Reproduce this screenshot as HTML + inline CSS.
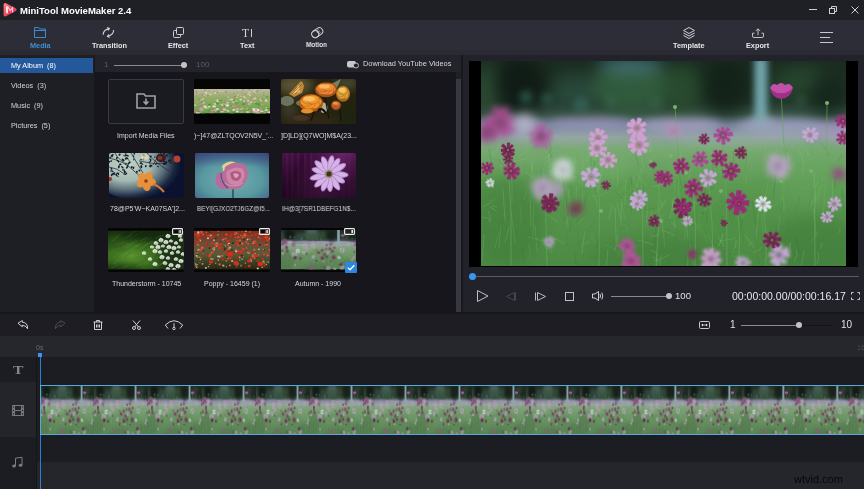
<!DOCTYPE html>
<html><head><meta charset="utf-8">
<style>
*{margin:0;padding:0;box-sizing:border-box}
html,body{width:864px;height:489px;overflow:hidden;background:#1c1d22;font-family:"Liberation Sans",sans-serif;color:#e8e8ea}
.a{position:absolute}
.t{position:absolute;white-space:pre;line-height:1;will-change:transform}
svg{position:absolute;overflow:visible}
.tb{font-size:7.3px;font-weight:bold;color:#e6e6e8}
.lb{font-size:7px;color:#d8d8dc}
.al{font-size:7.3px;color:#d4d4d8}
.ic{fill:none;stroke:#d0d0d4;stroke-width:1}
</style></head><body>
<!-- title bar -->
<div class="a" style="left:0;top:0;width:864px;height:20px;background:#1f2026"></div>
<!-- toolbar -->
<div class="a" style="left:0;top:20px;width:864px;height:30px;background:#2c2d36"></div>
<div class="a" style="left:0;top:50px;width:864px;height:5px;background:#292a32"></div>
<!-- left panel -->
<div class="a" style="left:0;top:55px;width:95px;height:257px;background:#1e1f24"></div>
<div class="a" style="left:94px;top:55px;width:1px;height:256px;background:#17181c"></div>
<div class="a" style="left:0;top:58px;width:93px;height:15px;background:#23589b"></div>
<!-- media area -->
<div class="a" style="left:95px;top:55px;width:366px;height:257px;background:#16161c"></div>
<div class="a" style="left:95px;top:55px;width:366px;height:17px;background:#23242b"></div>
<div class="a" style="left:456px;top:72px;width:5px;height:239px;background:#1f2025"></div>
<div class="a" style="left:456px;top:79px;width:4.5px;height:233px;background:#383842"></div>
<!-- separator -->
<div class="a" style="left:461px;top:55px;width:2px;height:256px;background:#18191d"></div>
<!-- preview panel -->
<div class="a" style="left:463px;top:55px;width:401px;height:257px;background:#21222a"></div>
<div class="a" style="left:469px;top:61px;width:389px;height:206px;background:#000"></div>
<!-- timeline -->
<div class="a" style="left:0;top:312px;width:864px;height:2px;background:#16171b"></div>
<div class="a" style="left:0;top:314px;width:864px;height:22px;background:#1d1d23"></div>
<div class="a" style="left:0;top:336px;width:864px;height:21px;background:#26272d"></div>
<div class="a" style="left:0;top:357px;width:864px;height:132px;background:#1c1d22"></div>
<div class="a" style="left:0;top:382px;width:36px;height:55px;background:#24252b"></div>
<div class="a" style="left:36px;top:462px;width:828px;height:27px;background:#25262c"></div>
<div class="a" style="left:36px;top:357px;width:1px;height:132px;background:#15161a"></div>

<svg width="0" height="0" style="position:absolute;left:0;top:0"><defs><symbol id="cos" viewBox="0 0 365 205" preserveAspectRatio="none"><defs><linearGradient id="cbg" x1="0" y1="0" x2="0" y2="1"><stop offset="0" stop-color="#1a2c20"/><stop offset="0.2" stop-color="#22382a"/><stop offset="0.26" stop-color="#3a5448"/><stop offset="0.31" stop-color="#7a86a0"/><stop offset="0.37" stop-color="#90a0a4"/><stop offset="0.43" stop-color="#78aa72"/><stop offset="0.6" stop-color="#5c9a52"/><stop offset="1" stop-color="#4c8a44"/></linearGradient><filter id="b8" x="-50%" y="-50%" width="200%" height="200%" color-interpolation-filters="sRGB"><feGaussianBlur stdDeviation="8"/></filter><filter id="b6" x="-50%" y="-50%" width="200%" height="200%" color-interpolation-filters="sRGB"><feGaussianBlur stdDeviation="6"/></filter><filter id="b4" x="-50%" y="-50%" width="200%" height="200%" color-interpolation-filters="sRGB"><feGaussianBlur stdDeviation="4"/></filter><filter id="b3" x="-50%" y="-50%" width="200%" height="200%" color-interpolation-filters="sRGB"><feGaussianBlur stdDeviation="3"/></filter><filter id="b2" x="-50%" y="-50%" width="200%" height="200%" color-interpolation-filters="sRGB"><feGaussianBlur stdDeviation="2"/></filter><filter id="b15" x="-50%" y="-50%" width="200%" height="200%" color-interpolation-filters="sRGB"><feGaussianBlur stdDeviation="1.5"/></filter><filter id="b1" x="-50%" y="-50%" width="200%" height="200%" color-interpolation-filters="sRGB"><feGaussianBlur stdDeviation="1.0"/></filter><filter id="b05" x="-50%" y="-50%" width="200%" height="200%" color-interpolation-filters="sRGB"><feGaussianBlur stdDeviation="0.5"/></filter></defs><rect width="365" height="205" fill="url(#cbg)"/><g filter="url(#b8)"><ellipse cx="5" cy="30" rx="12" ry="25" fill="#2e5034" opacity="0.8"/><ellipse cx="40" cy="24" rx="26" ry="28" fill="#0e1a14" opacity="0.9"/><ellipse cx="95" cy="32" rx="25" ry="18" fill="#2a4e40" opacity="0.8"/><ellipse cx="150" cy="26" rx="38" ry="26" fill="#34623f" opacity="0.85"/><ellipse cx="150" cy="4" rx="34" ry="9" fill="#4e7e96" opacity="0.6"/><ellipse cx="200" cy="28" rx="20" ry="24" fill="#2a5030" opacity="0.8"/><ellipse cx="245" cy="26" rx="25" ry="28" fill="#122016" opacity="0.85"/><ellipse cx="320" cy="20" rx="25" ry="15" fill="#284a30" opacity="0.8"/><ellipse cx="348" cy="34" rx="20" ry="20" fill="#14241a" opacity="0.8"/></g><g filter="url(#b3)"><circle cx="45" cy="36" r="7" fill="#2e5a50" opacity="0.7"/><circle cx="66" cy="38" r="6" fill="#2e5a50" opacity="0.7"/><circle cx="100" cy="44" r="8" fill="#3a6a60" opacity="0.6"/><circle cx="130" cy="40" r="6" fill="#3a6a58" opacity="0.5"/><circle cx="175" cy="42" r="7" fill="#3a6a50" opacity="0.5"/><circle cx="320" cy="40" r="6" fill="#3a5a48" opacity="0.5"/></g><g filter="url(#b3)"><rect x="273" y="-5" width="14" height="70" fill="#6aa0a8" opacity="0.85"/><rect x="276" y="0" width="7" height="55" fill="#88b8bc" opacity="0.6"/><ellipse cx="280" cy="62" rx="14" ry="8" fill="#8aa8b0" opacity="0.5"/></g><g filter="url(#b4)"><ellipse cx="30" cy="64" rx="30" ry="8" fill="#a8a0c4" opacity="0.6"/><ellipse cx="110" cy="62" rx="40" ry="7" fill="#a098c0" opacity="0.55"/><ellipse cx="200" cy="64" rx="40" ry="8" fill="#b0a8c8" opacity="0.55"/><ellipse cx="300" cy="66" rx="45" ry="9" fill="#a8a8c4" opacity="0.55"/><ellipse cx="355" cy="70" rx="20" ry="9" fill="#b098c8" opacity="0.55"/><ellipse cx="90" cy="78" rx="60" ry="5" fill="#a0b8a8" opacity="0.35"/><ellipse cx="260" cy="80" rx="70" ry="5" fill="#98b8a0" opacity="0.35"/></g><g filter="url(#b8)"><ellipse cx="25" cy="160" rx="40" ry="45" fill="#3e7838" opacity="0.5"/><ellipse cx="180" cy="195" rx="70" ry="20" fill="#3e7838" opacity="0.45"/><ellipse cx="335" cy="185" rx="50" ry="30" fill="#3e7838" opacity="0.5"/><ellipse cx="110" cy="105" rx="40" ry="18" fill="#7ab474" opacity="0.35"/><ellipse cx="330" cy="115" rx="40" ry="30" fill="#6aa862" opacity="0.35"/><ellipse cx="250" cy="160" rx="40" ry="20" fill="#4a8c42" opacity="0.4"/></g><g fill="none" stroke-width="0.8" filter="url(#b05)"><path d="M118 128 Q120 115 121 102" stroke="#8cc47c" opacity="0.35"/><path d="M34 182 Q32 165 30 149" stroke="#7ab86c" opacity="0.35"/><path d="M158 105 Q156 99 154 93" stroke="#42823a" opacity="0.35"/><path d="M206 215 Q207 202 207 189" stroke="#8cc47c" opacity="0.35"/><path d="M145 204 Q144 198 143 192" stroke="#7ab86c" opacity="0.35"/><path d="M53 116 Q51 107 49 98" stroke="#7ab86c" opacity="0.35"/><path d="M208 118 Q209 112 209 106" stroke="#8cc47c" opacity="0.35"/><path d="M226 163 Q226 151 226 140" stroke="#3a7232" opacity="0.35"/><path d="M337 141 Q338 133 339 125" stroke="#7ab86c" opacity="0.35"/><path d="M89 171 Q90 160 91 148" stroke="#3a7232" opacity="0.35"/><path d="M105 206 Q103 199 102 193" stroke="#42823a" opacity="0.35"/><path d="M125 208 Q126 198 127 188" stroke="#8cc47c" opacity="0.35"/><path d="M209 199 Q210 190 210 181" stroke="#3a7232" opacity="0.35"/><path d="M212 166 Q212 151 211 135" stroke="#3a7232" opacity="0.35"/><path d="M242 119 Q241 105 240 92" stroke="#42823a" opacity="0.35"/><path d="M141 169 Q140 164 139 159" stroke="#42823a" opacity="0.35"/><path d="M223 155 Q221 147 219 139" stroke="#3a7232" opacity="0.35"/><path d="M90 160 Q89 144 87 128" stroke="#8cc47c" opacity="0.35"/><path d="M147 129 Q148 122 150 116" stroke="#42823a" opacity="0.35"/><path d="M102 150 Q104 140 106 131" stroke="#42823a" opacity="0.35"/><path d="M55 120 Q53 112 50 104" stroke="#7ab86c" opacity="0.35"/><path d="M303 122 Q303 114 303 105" stroke="#7ab86c" opacity="0.35"/><path d="M135 181 Q135 164 134 147" stroke="#8cc47c" opacity="0.35"/><path d="M318 217 Q317 203 317 190" stroke="#42823a" opacity="0.35"/><path d="M144 158 Q142 148 140 138" stroke="#7ab86c" opacity="0.35"/><path d="M76 121 Q74 112 72 103" stroke="#8cc47c" opacity="0.35"/><path d="M207 178 Q205 161 203 144" stroke="#8cc47c" opacity="0.35"/><path d="M76 152 Q76 139 77 126" stroke="#3a7232" opacity="0.35"/><path d="M173 120 Q173 109 173 98" stroke="#42823a" opacity="0.35"/><path d="M114 130 Q114 115 114 101" stroke="#3a7232" opacity="0.35"/><path d="M253 157 Q251 149 249 142" stroke="#3a7232" opacity="0.35"/><path d="M198 111 Q199 100 200 88" stroke="#8cc47c" opacity="0.35"/><path d="M95 140 Q95 132 96 125" stroke="#7ab86c" opacity="0.35"/><path d="M284 137 Q286 129 287 121" stroke="#7ab86c" opacity="0.35"/><path d="M299 182 Q298 174 297 166" stroke="#42823a" opacity="0.35"/><path d="M11 105 Q9 97 8 88" stroke="#3a7232" opacity="0.35"/><path d="M221 153 Q223 138 225 123" stroke="#3a7232" opacity="0.35"/><path d="M133 125 Q132 117 131 109" stroke="#7ab86c" opacity="0.35"/><path d="M176 219 Q176 206 176 193" stroke="#8cc47c" opacity="0.35"/><path d="M238 185 Q240 179 242 173" stroke="#8cc47c" opacity="0.35"/><path d="M286 189 Q285 178 285 168" stroke="#7ab86c" opacity="0.35"/><path d="M232 128 Q232 111 232 95" stroke="#42823a" opacity="0.35"/><path d="M271 108 Q269 101 267 94" stroke="#7ab86c" opacity="0.35"/><path d="M216 163 Q216 149 217 136" stroke="#42823a" opacity="0.35"/><path d="M128 159 Q129 152 131 145" stroke="#8cc47c" opacity="0.35"/><path d="M265 125 Q265 111 264 96" stroke="#7ab86c" opacity="0.35"/><path d="M318 191 Q317 184 315 176" stroke="#3a7232" opacity="0.35"/><path d="M183 187 Q185 178 186 169" stroke="#42823a" opacity="0.35"/><path d="M22 199 Q24 183 26 166" stroke="#42823a" opacity="0.35"/><path d="M321 113 Q322 106 324 99" stroke="#8cc47c" opacity="0.35"/><path d="M283 181 Q282 167 280 152" stroke="#7ab86c" opacity="0.35"/><path d="M173 189 Q174 177 175 165" stroke="#3a7232" opacity="0.35"/><path d="M194 167 Q192 153 191 138" stroke="#8cc47c" opacity="0.35"/><path d="M101 193 Q102 181 104 170" stroke="#8cc47c" opacity="0.35"/><path d="M333 159 Q334 146 335 134" stroke="#7ab86c" opacity="0.35"/><path d="M165 166 Q166 155 167 144" stroke="#7ab86c" opacity="0.35"/><path d="M320 205 Q322 197 323 189" stroke="#7ab86c" opacity="0.35"/><path d="M50 119 Q51 109 52 98" stroke="#8cc47c" opacity="0.35"/><path d="M156 126 Q158 117 160 108" stroke="#8cc47c" opacity="0.35"/><path d="M56 190 Q55 177 54 164" stroke="#7ab86c" opacity="0.35"/><path d="M50 165 Q50 151 49 136" stroke="#8cc47c" opacity="0.35"/><path d="M178 225 Q179 209 180 194" stroke="#7ab86c" opacity="0.35"/><path d="M363 150 Q362 140 361 129" stroke="#3a7232" opacity="0.35"/><path d="M264 111 Q265 99 266 87" stroke="#42823a" opacity="0.35"/><path d="M140 159 Q138 151 136 142" stroke="#8cc47c" opacity="0.35"/><path d="M335 142 Q334 126 333 110" stroke="#8cc47c" opacity="0.35"/><path d="M14 187 Q16 179 18 171" stroke="#7ab86c" opacity="0.35"/><path d="M310 193 Q308 176 307 159" stroke="#42823a" opacity="0.35"/><path d="M335 175 Q334 162 333 148" stroke="#8cc47c" opacity="0.35"/><path d="M292 138 Q294 121 296 105" stroke="#3a7232" opacity="0.35"/><path d="M232 185 Q229 179 227 173" stroke="#7ab86c" opacity="0.35"/><path d="M315 153 Q317 144 319 135" stroke="#42823a" opacity="0.35"/><path d="M98 122 Q100 111 102 99" stroke="#7ab86c" opacity="0.35"/><path d="M354 128 Q354 121 355 114" stroke="#3a7232" opacity="0.35"/><path d="M194 129 Q193 118 192 108" stroke="#7ab86c" opacity="0.35"/><path d="M293 205 Q295 200 296 194" stroke="#8cc47c" opacity="0.35"/><path d="M201 128 Q199 117 197 106" stroke="#42823a" opacity="0.35"/><path d="M299 155 Q301 144 304 133" stroke="#42823a" opacity="0.35"/><path d="M112 124 Q114 117 116 109" stroke="#7ab86c" opacity="0.35"/><path d="M258 175 Q260 165 263 155" stroke="#3a7232" opacity="0.35"/><path d="M306 112 Q305 99 305 87" stroke="#3a7232" opacity="0.35"/><path d="M20 178 Q21 168 21 158" stroke="#3a7232" opacity="0.35"/><path d="M253 105 Q253 97 252 90" stroke="#3a7232" opacity="0.35"/><path d="M96 225 Q95 208 94 191" stroke="#3a7232" opacity="0.35"/><path d="M352 138 Q352 129 351 119" stroke="#8cc47c" opacity="0.35"/><path d="M31 142 Q31 129 31 116" stroke="#7ab86c" opacity="0.35"/><path d="M2 126 Q2 120 3 114" stroke="#42823a" opacity="0.35"/><path d="M144 144 Q144 131 145 118" stroke="#8cc47c" opacity="0.35"/><path d="M193 194 Q194 181 196 168" stroke="#42823a" opacity="0.35"/><path d="M263 156 Q261 148 258 139" stroke="#7ab86c" opacity="0.35"/><path d="M305 209 Q307 196 309 183" stroke="#7ab86c" opacity="0.35"/><path d="M275 178 Q276 163 278 148" stroke="#8cc47c" opacity="0.35"/><path d="M213 210 Q211 197 209 183" stroke="#7ab86c" opacity="0.35"/><path d="M15 189 Q17 172 19 155" stroke="#42823a" opacity="0.35"/><path d="M204 180 Q204 167 204 154" stroke="#7ab86c" opacity="0.35"/><path d="M1 201 Q2 187 3 173" stroke="#8cc47c" opacity="0.35"/><path d="M24 182 Q26 174 28 166" stroke="#8cc47c" opacity="0.35"/><path d="M86 184 Q86 176 86 168" stroke="#42823a" opacity="0.35"/><path d="M140 165 Q140 151 141 138" stroke="#8cc47c" opacity="0.35"/><path d="M235 107 Q235 100 236 94" stroke="#3a7232" opacity="0.35"/><path d="M253 167 Q251 160 249 153" stroke="#42823a" opacity="0.35"/><path d="M98 186 Q97 173 96 159" stroke="#42823a" opacity="0.35"/><path d="M189 158 Q191 147 193 136" stroke="#8cc47c" opacity="0.35"/><path d="M200 131 Q198 125 196 119" stroke="#42823a" opacity="0.35"/><path d="M168 209 Q170 192 172 175" stroke="#42823a" opacity="0.35"/><path d="M141 219 Q142 202 142 186" stroke="#8cc47c" opacity="0.35"/><path d="M52 176 Q52 160 53 143" stroke="#7ab86c" opacity="0.35"/><path d="M231 129 Q229 122 228 116" stroke="#3a7232" opacity="0.35"/><path d="M328 149 Q330 144 332 138" stroke="#8cc47c" opacity="0.35"/><path d="M249 158 Q248 144 247 130" stroke="#42823a" opacity="0.35"/><path d="M115 187 Q117 182 119 177" stroke="#3a7232" opacity="0.35"/><path d="M44 215 Q43 201 41 187" stroke="#3a7232" opacity="0.35"/><path d="M24 160 Q23 144 22 128" stroke="#8cc47c" opacity="0.35"/><path d="M156 126 Q154 121 152 115" stroke="#8cc47c" opacity="0.35"/><path d="M242 169 Q241 162 241 155" stroke="#3a7232" opacity="0.35"/><path d="M115 200 Q117 185 119 170" stroke="#42823a" opacity="0.35"/><path d="M296 187 Q297 171 299 154" stroke="#7ab86c" opacity="0.35"/><path d="M18 187 Q19 176 20 166" stroke="#7ab86c" opacity="0.35"/><path d="M104 124 Q103 107 101 90" stroke="#7ab86c" opacity="0.35"/><path d="M151 132 Q151 124 150 116" stroke="#3a7232" opacity="0.35"/><path d="M87 165 Q85 152 84 138" stroke="#8cc47c" opacity="0.35"/><path d="M59 141 Q59 124 60 108" stroke="#42823a" opacity="0.35"/><path d="M165 151 Q164 136 162 122" stroke="#42823a" opacity="0.35"/><path d="M70 114 Q69 104 68 95" stroke="#8cc47c" opacity="0.35"/><path d="M134 189 Q136 182 137 174" stroke="#8cc47c" opacity="0.35"/><path d="M151 154 Q150 142 148 131" stroke="#42823a" opacity="0.35"/><path d="M275 164 Q273 152 271 140" stroke="#3a7232" opacity="0.35"/><path d="M184 186 Q182 170 180 154" stroke="#7ab86c" opacity="0.35"/><path d="M327 153 Q330 140 332 127" stroke="#42823a" opacity="0.35"/><path d="M310 192 Q309 186 309 181" stroke="#8cc47c" opacity="0.35"/><path d="M279 208 Q276 191 274 173" stroke="#42823a" opacity="0.35"/><path d="M143 218 Q145 202 148 187" stroke="#42823a" opacity="0.35"/><path d="M91 111 Q93 104 95 97" stroke="#8cc47c" opacity="0.35"/><path d="M263 185 Q261 171 259 156" stroke="#42823a" opacity="0.35"/><path d="M284 98 Q284 92 285 85" stroke="#8cc47c" opacity="0.35"/><path d="M111 115 Q112 107 113 99" stroke="#42823a" opacity="0.35"/><path d="M41 116 Q40 104 40 93" stroke="#7ab86c" opacity="0.35"/><path d="M82 161 Q84 156 87 151" stroke="#3a7232" opacity="0.35"/><path d="M102 151 Q102 135 101 120" stroke="#7ab86c" opacity="0.35"/><path d="M86 146 Q83 129 81 112" stroke="#3a7232" opacity="0.35"/></g><g fill="none" stroke-width="0.6" filter="url(#b05)"><path d="M71 192 Q70 189 66 187" stroke="#9ad08a" opacity="0.4"/><path d="M155 133 Q155 130 152 127" stroke="#9ad08a" opacity="0.4"/><path d="M154 168 Q154 166 150 163" stroke="#76b86a" opacity="0.4"/><path d="M308 98 Q306 90 300 82" stroke="#9ad08a" opacity="0.4"/><path d="M299 117 Q305 114 307 112" stroke="#76b86a" opacity="0.4"/><path d="M40 162 Q41 153 39 145" stroke="#76b86a" opacity="0.4"/><path d="M332 96 Q326 94 316 91" stroke="#76b86a" opacity="0.4"/><path d="M9 159 Q8 157 2 156" stroke="#9ad08a" opacity="0.4"/><path d="M144 193 Q153 192 158 191" stroke="#3e7a36" opacity="0.4"/><path d="M340 128 Q343 121 341 114" stroke="#76b86a" opacity="0.4"/><path d="M171 126 Q181 124 186 122" stroke="#9ad08a" opacity="0.4"/><path d="M161 103 Q162 98 158 94" stroke="#8ac87a" opacity="0.4"/><path d="M349 104 Q354 100 356 97" stroke="#76b86a" opacity="0.4"/><path d="M113 182 Q114 179 112 176" stroke="#8ac87a" opacity="0.4"/><path d="M136 196 Q141 192 142 188" stroke="#76b86a" opacity="0.4"/><path d="M173 163 Q181 157 184 151" stroke="#76b86a" opacity="0.4"/><path d="M15 94 Q9 91 0 89" stroke="#8ac87a" opacity="0.4"/><path d="M71 97 Q71 93 67 88" stroke="#3e7a36" opacity="0.4"/><path d="M348 95 Q346 88 339 81" stroke="#3e7a36" opacity="0.4"/><path d="M263 158 Q263 156 259 154" stroke="#8ac87a" opacity="0.4"/><path d="M173 200 Q183 197 188 194" stroke="#9ad08a" opacity="0.4"/><path d="M297 105 Q302 103 304 100" stroke="#9ad08a" opacity="0.4"/><path d="M270 185 Q268 179 263 173" stroke="#76b86a" opacity="0.4"/><path d="M117 132 Q117 126 113 120" stroke="#8ac87a" opacity="0.4"/><path d="M58 137 Q61 131 60 125" stroke="#8ac87a" opacity="0.4"/><path d="M59 139 Q55 132 48 125" stroke="#8ac87a" opacity="0.4"/><path d="M31 101 Q41 99 48 97" stroke="#9ad08a" opacity="0.4"/><path d="M63 105 Q68 99 69 93" stroke="#9ad08a" opacity="0.4"/><path d="M273 187 Q271 181 265 175" stroke="#8ac87a" opacity="0.4"/><path d="M102 121 Q98 116 91 111" stroke="#3e7a36" opacity="0.4"/><path d="M90 118 Q97 116 99 114" stroke="#76b86a" opacity="0.4"/><path d="M69 97 Q71 88 69 80" stroke="#3e7a36" opacity="0.4"/><path d="M84 183 Q78 179 68 175" stroke="#9ad08a" opacity="0.4"/><path d="M173 184 Q167 182 157 179" stroke="#9ad08a" opacity="0.4"/><path d="M107 104 Q114 100 118 96" stroke="#76b86a" opacity="0.4"/><path d="M71 99 Q69 94 64 90" stroke="#76b86a" opacity="0.4"/><path d="M284 199 Q290 193 291 187" stroke="#8ac87a" opacity="0.4"/><path d="M128 94 Q127 92 122 89" stroke="#3e7a36" opacity="0.4"/><path d="M93 159 Q101 154 105 149" stroke="#76b86a" opacity="0.4"/><path d="M149 133 Q148 132 143 131" stroke="#3e7a36" opacity="0.4"/><path d="M181 146 Q182 142 179 139" stroke="#9ad08a" opacity="0.4"/><path d="M201 164 Q201 157 197 150" stroke="#8ac87a" opacity="0.4"/><path d="M99 204 Q96 202 89 200" stroke="#3e7a36" opacity="0.4"/><path d="M272 192 Q279 189 281 186" stroke="#9ad08a" opacity="0.4"/><path d="M364 132 Q364 127 361 122" stroke="#76b86a" opacity="0.4"/><path d="M344 140 Q350 136 352 133" stroke="#76b86a" opacity="0.4"/><path d="M148 192 Q144 188 135 184" stroke="#9ad08a" opacity="0.4"/><path d="M19 106 Q22 103 21 100" stroke="#9ad08a" opacity="0.4"/><path d="M135 148 Q133 145 127 142" stroke="#76b86a" opacity="0.4"/><path d="M63 98 Q69 94 72 90" stroke="#9ad08a" opacity="0.4"/><path d="M353 113 Q347 110 338 108" stroke="#76b86a" opacity="0.4"/><path d="M333 126 Q337 123 337 120" stroke="#9ad08a" opacity="0.4"/><path d="M251 192 Q255 186 255 180" stroke="#76b86a" opacity="0.4"/><path d="M72 144 Q77 143 78 142" stroke="#76b86a" opacity="0.4"/><path d="M57 131 Q62 128 62 124" stroke="#76b86a" opacity="0.4"/><path d="M328 95 Q326 89 321 82" stroke="#8ac87a" opacity="0.4"/><path d="M142 142 Q141 136 135 131" stroke="#3e7a36" opacity="0.4"/><path d="M91 135 Q92 129 89 124" stroke="#3e7a36" opacity="0.4"/><path d="M9 161 Q10 155 7 150" stroke="#9ad08a" opacity="0.4"/><path d="M226 184 Q226 177 221 169" stroke="#76b86a" opacity="0.4"/><path d="M24 131 Q26 128 23 124" stroke="#3e7a36" opacity="0.4"/><path d="M186 95 Q190 92 190 89" stroke="#76b86a" opacity="0.4"/><path d="M284 149 Q293 145 297 142" stroke="#8ac87a" opacity="0.4"/><path d="M238 180 Q248 179 254 177" stroke="#8ac87a" opacity="0.4"/><path d="M267 184 Q273 182 274 180" stroke="#76b86a" opacity="0.4"/><path d="M105 183 Q111 177 113 172" stroke="#76b86a" opacity="0.4"/><path d="M81 186 Q86 184 88 182" stroke="#3e7a36" opacity="0.4"/><path d="M100 184 Q107 183 109 181" stroke="#76b86a" opacity="0.4"/><path d="M175 158 Q173 157 166 155" stroke="#76b86a" opacity="0.4"/><path d="M66 109 Q75 105 79 102" stroke="#3e7a36" opacity="0.4"/><path d="M62 180 Q56 178 47 176" stroke="#8ac87a" opacity="0.4"/><path d="M313 201 Q317 195 316 189" stroke="#9ad08a" opacity="0.4"/><path d="M322 102 Q322 95 317 88" stroke="#9ad08a" opacity="0.4"/><path d="M137 132 Q143 129 144 125" stroke="#76b86a" opacity="0.4"/><path d="M161 110 Q164 106 162 101" stroke="#8ac87a" opacity="0.4"/><path d="M113 201 Q120 195 123 190" stroke="#3e7a36" opacity="0.4"/><path d="M81 123 Q81 118 77 113" stroke="#9ad08a" opacity="0.4"/><path d="M17 146 Q16 146 11 145" stroke="#8ac87a" opacity="0.4"/><path d="M130 102 Q130 96 127 90" stroke="#3e7a36" opacity="0.4"/><path d="M110 105 Q111 99 109 92" stroke="#3e7a36" opacity="0.4"/><path d="M49 198 Q50 191 47 183" stroke="#76b86a" opacity="0.4"/><path d="M23 107 Q22 102 17 98" stroke="#3e7a36" opacity="0.4"/><path d="M4 164 Q8 158 7 151" stroke="#3e7a36" opacity="0.4"/><path d="M220 150 Q226 148 228 146" stroke="#9ad08a" opacity="0.4"/><path d="M16 151 Q15 149 9 146" stroke="#9ad08a" opacity="0.4"/><path d="M333 102 Q332 99 327 97" stroke="#76b86a" opacity="0.4"/><path d="M222 148 Q218 143 210 139" stroke="#9ad08a" opacity="0.4"/><path d="M113 125 Q120 117 123 110" stroke="#8ac87a" opacity="0.4"/><path d="M174 152 Q182 146 185 139" stroke="#9ad08a" opacity="0.4"/><path d="M170 175 Q176 175 178 174" stroke="#9ad08a" opacity="0.4"/><path d="M95 164 Q101 160 102 156" stroke="#8ac87a" opacity="0.4"/><path d="M254 187 Q256 183 255 178" stroke="#8ac87a" opacity="0.4"/><path d="M159 181 Q166 179 168 177" stroke="#3e7a36" opacity="0.4"/><path d="M326 100 Q332 98 334 96" stroke="#8ac87a" opacity="0.4"/><path d="M307 113 Q306 107 300 100" stroke="#76b86a" opacity="0.4"/><path d="M321 128 Q328 125 330 122" stroke="#76b86a" opacity="0.4"/><path d="M336 203 Q339 197 337 191" stroke="#9ad08a" opacity="0.4"/><path d="M2 93 Q1 88 -4 82" stroke="#76b86a" opacity="0.4"/><path d="M77 162 Q74 158 67 154" stroke="#8ac87a" opacity="0.4"/><path d="M12 103 Q10 100 3 97" stroke="#76b86a" opacity="0.4"/><path d="M10 95 Q17 89 19 83" stroke="#8ac87a" opacity="0.4"/><path d="M24 158 Q30 157 32 155" stroke="#3e7a36" opacity="0.4"/><path d="M195 166 Q194 164 190 161" stroke="#9ad08a" opacity="0.4"/><path d="M41 94 Q46 87 47 79" stroke="#8ac87a" opacity="0.4"/><path d="M105 101 Q110 94 111 87" stroke="#8ac87a" opacity="0.4"/><path d="M107 129 Q108 126 104 124" stroke="#3e7a36" opacity="0.4"/><path d="M103 172 Q111 166 115 160" stroke="#3e7a36" opacity="0.4"/><path d="M220 145 Q215 143 207 141" stroke="#3e7a36" opacity="0.4"/><path d="M151 140 Q155 136 156 132" stroke="#8ac87a" opacity="0.4"/><path d="M196 115 Q195 110 189 104" stroke="#8ac87a" opacity="0.4"/><path d="M159 150 Q169 148 174 147" stroke="#3e7a36" opacity="0.4"/><path d="M2 146 Q9 142 13 138" stroke="#9ad08a" opacity="0.4"/><path d="M353 158 Q350 154 342 151" stroke="#3e7a36" opacity="0.4"/><path d="M298 198 Q294 195 287 192" stroke="#76b86a" opacity="0.4"/><path d="M232 99 Q232 93 227 87" stroke="#8ac87a" opacity="0.4"/><path d="M146 135 Q151 130 151 125" stroke="#8ac87a" opacity="0.4"/><path d="M136 125 Q138 116 136 108" stroke="#9ad08a" opacity="0.4"/><path d="M138 192 Q133 187 123 183" stroke="#76b86a" opacity="0.4"/><path d="M217 169 Q216 165 212 160" stroke="#8ac87a" opacity="0.4"/><path d="M57 187 Q58 183 55 179" stroke="#3e7a36" opacity="0.4"/><path d="M282 157 Q286 152 286 147" stroke="#76b86a" opacity="0.4"/><path d="M254 148 Q259 144 259 140" stroke="#3e7a36" opacity="0.4"/><path d="M308 108 Q315 101 318 93" stroke="#76b86a" opacity="0.4"/><path d="M220 130 Q218 127 212 124" stroke="#76b86a" opacity="0.4"/><path d="M356 174 Q360 170 359 167" stroke="#8ac87a" opacity="0.4"/><path d="M71 107 Q78 101 81 95" stroke="#76b86a" opacity="0.4"/><path d="M159 113 Q165 110 167 108" stroke="#8ac87a" opacity="0.4"/><path d="M169 91 Q171 84 169 77" stroke="#9ad08a" opacity="0.4"/><path d="M231 143 Q236 140 236 136" stroke="#76b86a" opacity="0.4"/><path d="M2 118 Q6 111 5 104" stroke="#9ad08a" opacity="0.4"/><path d="M236 187 Q241 181 242 174" stroke="#76b86a" opacity="0.4"/><path d="M166 126 Q162 120 155 113" stroke="#8ac87a" opacity="0.4"/><path d="M146 172 Q147 168 144 163" stroke="#76b86a" opacity="0.4"/><path d="M166 161 Q171 156 171 150" stroke="#9ad08a" opacity="0.4"/><path d="M319 193 Q318 186 314 178" stroke="#3e7a36" opacity="0.4"/><path d="M179 202 Q178 199 172 196" stroke="#8ac87a" opacity="0.4"/><path d="M261 199 Q258 197 250 194" stroke="#76b86a" opacity="0.4"/><path d="M210 152 Q214 147 214 141" stroke="#9ad08a" opacity="0.4"/><path d="M303 150 Q304 143 301 135" stroke="#9ad08a" opacity="0.4"/><path d="M361 111 Q366 104 366 97" stroke="#8ac87a" opacity="0.4"/><path d="M233 119 Q229 118 222 117" stroke="#9ad08a" opacity="0.4"/><path d="M153 138 Q149 135 141 132" stroke="#3e7a36" opacity="0.4"/><path d="M111 136 Q121 134 128 131" stroke="#76b86a" opacity="0.4"/><path d="M169 109 Q174 102 174 94" stroke="#8ac87a" opacity="0.4"/><path d="M171 155 Q167 150 158 146" stroke="#76b86a" opacity="0.4"/><path d="M243 186 Q242 181 237 176" stroke="#9ad08a" opacity="0.4"/><path d="M200 104 Q206 102 209 99" stroke="#9ad08a" opacity="0.4"/><path d="M98 133 Q104 125 106 118" stroke="#3e7a36" opacity="0.4"/><path d="M176 183 Q180 178 180 173" stroke="#3e7a36" opacity="0.4"/><path d="M117 146 Q116 139 112 133" stroke="#8ac87a" opacity="0.4"/><path d="M339 188 Q342 185 340 181" stroke="#8ac87a" opacity="0.4"/><path d="M119 198 Q114 197 105 195" stroke="#3e7a36" opacity="0.4"/><path d="M4 199 Q2 197 -4 195" stroke="#3e7a36" opacity="0.4"/><path d="M52 117 Q50 114 44 111" stroke="#9ad08a" opacity="0.4"/><path d="M330 181 Q335 175 337 170" stroke="#76b86a" opacity="0.4"/><path d="M357 100 Q361 97 361 93" stroke="#3e7a36" opacity="0.4"/><path d="M194 175 Q190 172 181 169" stroke="#9ad08a" opacity="0.4"/><path d="M43 138 Q46 132 45 127" stroke="#76b86a" opacity="0.4"/><path d="M177 194 Q175 191 170 189" stroke="#9ad08a" opacity="0.4"/><path d="M219 174 Q220 166 217 158" stroke="#76b86a" opacity="0.4"/></g><g stroke="#6aa860" stroke-width="0.8" fill="none" opacity="0.8"><path d="M300 30 Q304.5 85.0 303 140"/><path d="M194 46 Q199.0 98.0 198 150"/><path d="M346 42 Q347.0 101.0 342 160"/><path d="M116 87 Q120.0 146.0 118 205"/><path d="M158 84 Q163.0 144.5 162 205"/><path d="M242 74 Q247.0 139.5 246 205"/><path d="M212 127 Q216.0 166.0 214 205"/><path d="M60 75 Q66.0 140.0 66 205"/><path d="M27 98 Q31.5 151.5 30 205"/><path d="M227 117 Q232.5 161.0 232 205"/><path d="M178 118 Q179.5 161.5 175 205"/><path d="M256 141 Q260.0 173.0 258 205"/><path d="M330 74 Q335.0 139.5 334 205"/><path d="M282 143 Q286.5 174.0 285 205"/></g><g transform="translate(19 62) rotate(25)" opacity="1.0" filter="url(#b3)"><path d="M0 0Q7.4 -4.5 16.5 -3.5L16.5 3.5Q7.4 4.5 0 0Z" fill="#a84c90" transform="rotate(2)"/><path d="M0 0Q6.8 -4.1 15.0 -3.2L15.0 3.2Q6.8 4.1 0 0Z" fill="#a84c90" transform="rotate(43)"/><path d="M0 0Q6.2 -3.8 13.9 -2.9L13.9 2.9Q6.2 3.8 0 0Z" fill="#a84c90" transform="rotate(96)"/><path d="M0 0Q7.1 -4.3 15.8 -3.3L15.8 3.3Q7.1 4.3 0 0Z" fill="#a84c90" transform="rotate(137)"/><path d="M0 0Q7.1 -4.3 15.7 -3.3L15.7 3.3Q7.1 4.3 0 0Z" fill="#a84c90" transform="rotate(174)"/><path d="M0 0Q7.5 -4.6 16.8 -3.5L16.8 3.5Q7.5 4.6 0 0Z" fill="#a84c90" transform="rotate(227)"/><path d="M0 0Q7.6 -4.6 16.9 -3.6L16.9 3.6Q7.6 4.6 0 0Z" fill="#a84c90" transform="rotate(268)"/><path d="M0 0Q6.9 -4.2 15.2 -3.2L15.2 3.2Q6.9 4.2 0 0Z" fill="#a84c90" transform="rotate(315)"/><circle r="5.9" fill="#7e396c" opacity="0.6"/><circle r="2.5" fill="#6a5a60" opacity="0.8"/></g><g transform="translate(6 72) rotate(40)" opacity="1.0" filter="url(#b3)"><path d="M0 0Q5.1 -3.1 11.3 -2.4L11.3 2.4Q5.1 3.1 0 0Z" fill="#9a4a86" transform="rotate(-6)"/><path d="M0 0Q4.7 -2.8 10.4 -2.2L10.4 2.2Q4.7 2.8 0 0Z" fill="#9a4a86" transform="rotate(47)"/><path d="M0 0Q4.7 -2.9 10.5 -2.2L10.5 2.2Q4.7 2.9 0 0Z" fill="#9a4a86" transform="rotate(94)"/><path d="M0 0Q4.9 -3.0 10.9 -2.3L10.9 2.3Q4.9 3.0 0 0Z" fill="#9a4a86" transform="rotate(135)"/><path d="M0 0Q4.5 -2.8 10.1 -2.1L10.1 2.1Q4.5 2.8 0 0Z" fill="#9a4a86" transform="rotate(183)"/><path d="M0 0Q4.8 -2.9 10.6 -2.2L10.6 2.2Q4.8 2.9 0 0Z" fill="#9a4a86" transform="rotate(224)"/><path d="M0 0Q5.2 -3.2 11.6 -2.4L11.6 2.4Q5.2 3.2 0 0Z" fill="#9a4a86" transform="rotate(271)"/><path d="M0 0Q5.2 -3.2 11.6 -2.4L11.6 2.4Q5.2 3.2 0 0Z" fill="#9a4a86" transform="rotate(313)"/><circle r="4.2" fill="#733764" opacity="0.6"/><circle r="1.8" fill="#6a5a60" opacity="0.8"/></g><g transform="translate(60 75) rotate(18)" opacity="1.0" filter="url(#b2)"><path d="M0 0Q5.0 -3.0 11.1 -2.3L11.1 2.3Q5.0 3.0 0 0Z" fill="#a85c9c" transform="rotate(0)"/><path d="M0 0Q5.8 -3.5 12.9 -2.7L12.9 2.7Q5.8 3.5 0 0Z" fill="#a85c9c" transform="rotate(45)"/><path d="M0 0Q5.6 -3.4 12.5 -2.6L12.5 2.6Q5.6 3.4 0 0Z" fill="#a85c9c" transform="rotate(92)"/><path d="M0 0Q5.1 -3.1 11.2 -2.4L11.2 2.4Q5.1 3.1 0 0Z" fill="#a85c9c" transform="rotate(133)"/><path d="M0 0Q5.4 -3.3 11.9 -2.5L11.9 2.5Q5.4 3.3 0 0Z" fill="#a85c9c" transform="rotate(178)"/><path d="M0 0Q5.6 -3.4 12.4 -2.6L12.4 2.6Q5.6 3.4 0 0Z" fill="#a85c9c" transform="rotate(227)"/><path d="M0 0Q5.5 -3.4 12.3 -2.6L12.3 2.6Q5.5 3.4 0 0Z" fill="#a85c9c" transform="rotate(264)"/><path d="M0 0Q5.3 -3.2 11.8 -2.5L11.8 2.5Q5.3 3.2 0 0Z" fill="#a85c9c" transform="rotate(320)"/><circle r="4.5" fill="#7e4575" opacity="0.6"/><circle r="1.9" fill="#6a5a60" opacity="0.8"/></g><g transform="translate(82 109) rotate(2)" opacity="1.0" filter="url(#b3)"><path d="M0 0Q4.3 -2.6 9.6 -2.0L9.6 2.0Q4.3 2.6 0 0Z" fill="#dde0ea" transform="rotate(-2)"/><path d="M0 0Q5.3 -3.2 11.8 -2.5L11.8 2.5Q5.3 3.2 0 0Z" fill="#dde0ea" transform="rotate(41)"/><path d="M0 0Q5.0 -3.1 11.2 -2.3L11.2 2.3Q5.0 3.1 0 0Z" fill="#dde0ea" transform="rotate(91)"/><path d="M0 0Q5.3 -3.2 11.8 -2.5L11.8 2.5Q5.3 3.2 0 0Z" fill="#dde0ea" transform="rotate(138)"/><path d="M0 0Q5.0 -3.0 11.1 -2.3L11.1 2.3Q5.0 3.0 0 0Z" fill="#dde0ea" transform="rotate(181)"/><path d="M0 0Q5.1 -3.1 11.3 -2.4L11.3 2.4Q5.1 3.1 0 0Z" fill="#dde0ea" transform="rotate(227)"/><path d="M0 0Q5.1 -3.1 11.2 -2.4L11.2 2.4Q5.1 3.1 0 0Z" fill="#dde0ea" transform="rotate(271)"/><path d="M0 0Q5.0 -3.1 11.2 -2.4L11.2 2.4Q5.0 3.1 0 0Z" fill="#dde0ea" transform="rotate(312)"/><circle r="4.2" fill="#a5a8af" opacity="0.6"/><circle r="1.8" fill="#6a5a60" opacity="0.8"/></g><g transform="translate(62 127) rotate(21)" opacity="1.0" filter="url(#b3)"><path d="M0 0Q4.8 -2.9 10.7 -2.2L10.7 2.2Q4.8 2.9 0 0Z" fill="#c4a8d4" transform="rotate(3)"/><path d="M0 0Q4.7 -2.9 10.5 -2.2L10.5 2.2Q4.7 2.9 0 0Z" fill="#c4a8d4" transform="rotate(41)"/><path d="M0 0Q5.7 -3.5 12.8 -2.7L12.8 2.7Q5.7 3.5 0 0Z" fill="#c4a8d4" transform="rotate(93)"/><path d="M0 0Q5.1 -3.1 11.4 -2.4L11.4 2.4Q5.1 3.1 0 0Z" fill="#c4a8d4" transform="rotate(137)"/><path d="M0 0Q5.6 -3.4 12.4 -2.6L12.4 2.6Q5.6 3.4 0 0Z" fill="#c4a8d4" transform="rotate(184)"/><path d="M0 0Q5.0 -3.0 11.1 -2.3L11.1 2.3Q5.0 3.0 0 0Z" fill="#c4a8d4" transform="rotate(226)"/><path d="M0 0Q5.2 -3.1 11.5 -2.4L11.5 2.4Q5.2 3.1 0 0Z" fill="#c4a8d4" transform="rotate(268)"/><path d="M0 0Q5.2 -3.1 11.5 -2.4L11.5 2.4Q5.2 3.1 0 0Z" fill="#c4a8d4" transform="rotate(313)"/><circle r="4.5" fill="#937e9f" opacity="0.6"/><circle r="1.9" fill="#6a5a60" opacity="0.8"/></g><g transform="translate(75 129) rotate(29)" opacity="1.0" filter="url(#b3)"><path d="M0 0Q3.3 -2.0 7.3 -1.5L7.3 1.5Q3.3 2.0 0 0Z" fill="#c4a8d4" transform="rotate(5)"/><path d="M0 0Q3.3 -2.0 7.3 -1.5L7.3 1.5Q3.3 2.0 0 0Z" fill="#c4a8d4" transform="rotate(46)"/><path d="M0 0Q3.9 -2.4 8.7 -1.8L8.7 1.8Q3.9 2.4 0 0Z" fill="#c4a8d4" transform="rotate(85)"/><path d="M0 0Q4.0 -2.4 8.9 -1.9L8.9 1.9Q4.0 2.4 0 0Z" fill="#c4a8d4" transform="rotate(136)"/><path d="M0 0Q3.3 -2.0 7.2 -1.5L7.2 1.5Q3.3 2.0 0 0Z" fill="#c4a8d4" transform="rotate(179)"/><path d="M0 0Q3.7 -2.3 8.3 -1.7L8.3 1.7Q3.7 2.3 0 0Z" fill="#c4a8d4" transform="rotate(224)"/><path d="M0 0Q4.0 -2.4 9.0 -1.9L9.0 1.9Q4.0 2.4 0 0Z" fill="#c4a8d4" transform="rotate(275)"/><path d="M0 0Q3.6 -2.2 7.9 -1.7L7.9 1.7Q3.6 2.2 0 0Z" fill="#c4a8d4" transform="rotate(315)"/><circle r="3.1" fill="#937e9f" opacity="0.6"/><circle r="1.3" fill="#6a5a60" opacity="0.8"/></g><g transform="translate(95 147) rotate(5)" opacity="1.0" filter="url(#b3)"><path d="M0 0Q3.4 -2.1 7.6 -1.6L7.6 1.6Q3.4 2.1 0 0Z" fill="#7a3a58" transform="rotate(2)"/><path d="M0 0Q3.3 -2.0 7.2 -1.5L7.2 1.5Q3.3 2.0 0 0Z" fill="#7a3a58" transform="rotate(41)"/><path d="M0 0Q3.8 -2.3 8.4 -1.8L8.4 1.8Q3.8 2.3 0 0Z" fill="#7a3a58" transform="rotate(84)"/><path d="M0 0Q4.0 -2.4 8.9 -1.9L8.9 1.9Q4.0 2.4 0 0Z" fill="#7a3a58" transform="rotate(130)"/><path d="M0 0Q3.9 -2.4 8.8 -1.8L8.8 1.8Q3.9 2.4 0 0Z" fill="#7a3a58" transform="rotate(175)"/><path d="M0 0Q3.3 -2.0 7.2 -1.5L7.2 1.5Q3.3 2.0 0 0Z" fill="#7a3a58" transform="rotate(221)"/><path d="M0 0Q3.4 -2.1 7.6 -1.6L7.6 1.6Q3.4 2.1 0 0Z" fill="#7a3a58" transform="rotate(273)"/><path d="M0 0Q3.4 -2.1 7.5 -1.6L7.5 1.6Q3.4 2.1 0 0Z" fill="#7a3a58" transform="rotate(318)"/><circle r="3.1" fill="#5b2b42" opacity="0.6"/><circle r="1.3" fill="#6a5a60" opacity="0.8"/></g><g transform="translate(297 105) rotate(2)" opacity="1.0" filter="url(#b3)"><path d="M0 0Q5.9 -3.6 13.2 -2.8L13.2 2.8Q5.9 3.6 0 0Z" fill="#c4a8d4" transform="rotate(3)"/><path d="M0 0Q6.0 -3.6 13.2 -2.8L13.2 2.8Q6.0 3.6 0 0Z" fill="#c4a8d4" transform="rotate(49)"/><path d="M0 0Q5.8 -3.5 13.0 -2.7L13.0 2.7Q5.8 3.5 0 0Z" fill="#c4a8d4" transform="rotate(85)"/><path d="M0 0Q5.6 -3.4 12.5 -2.6L12.5 2.6Q5.6 3.4 0 0Z" fill="#c4a8d4" transform="rotate(138)"/><path d="M0 0Q5.4 -3.3 11.9 -2.5L11.9 2.5Q5.4 3.3 0 0Z" fill="#c4a8d4" transform="rotate(185)"/><path d="M0 0Q5.9 -3.6 13.2 -2.8L13.2 2.8Q5.9 3.6 0 0Z" fill="#c4a8d4" transform="rotate(231)"/><path d="M0 0Q5.1 -3.1 11.2 -2.4L11.2 2.4Q5.1 3.1 0 0Z" fill="#c4a8d4" transform="rotate(264)"/><path d="M0 0Q6.1 -3.7 13.5 -2.8L13.5 2.8Q6.1 3.7 0 0Z" fill="#c4a8d4" transform="rotate(317)"/><circle r="4.9" fill="#937e9f" opacity="0.6"/><circle r="2.1" fill="#6a5a60" opacity="0.8"/></g><g transform="translate(358 113) rotate(4)" opacity="1.0" filter="url(#b3)"><path d="M0 0Q3.4 -2.1 7.6 -1.6L7.6 1.6Q3.4 2.1 0 0Z" fill="#9a5088" transform="rotate(-2)"/><path d="M0 0Q3.5 -2.1 7.8 -1.6L7.8 1.6Q3.5 2.1 0 0Z" fill="#9a5088" transform="rotate(41)"/><path d="M0 0Q2.9 -1.8 6.5 -1.4L6.5 1.4Q2.9 1.8 0 0Z" fill="#9a5088" transform="rotate(90)"/><path d="M0 0Q3.3 -2.0 7.3 -1.5L7.3 1.5Q3.3 2.0 0 0Z" fill="#9a5088" transform="rotate(133)"/><path d="M0 0Q3.4 -2.0 7.5 -1.6L7.5 1.6Q3.4 2.0 0 0Z" fill="#9a5088" transform="rotate(179)"/><path d="M0 0Q3.5 -2.1 7.7 -1.6L7.7 1.6Q3.5 2.1 0 0Z" fill="#9a5088" transform="rotate(221)"/><path d="M0 0Q3.3 -2.0 7.4 -1.6L7.4 1.6Q3.3 2.0 0 0Z" fill="#9a5088" transform="rotate(268)"/><path d="M0 0Q3.2 -1.9 7.1 -1.5L7.1 1.5Q3.2 1.9 0 0Z" fill="#9a5088" transform="rotate(317)"/><circle r="2.8" fill="#733c66" opacity="0.6"/><circle r="1.2" fill="#6a5a60" opacity="0.8"/></g><g transform="translate(192 70) rotate(17)" opacity="1.0" filter="url(#b3)"><path d="M0 0Q3.6 -2.2 7.9 -1.7L7.9 1.7Q3.6 2.2 0 0Z" fill="#c090c0" transform="rotate(3)"/><path d="M0 0Q3.3 -2.0 7.3 -1.5L7.3 1.5Q3.3 2.0 0 0Z" fill="#c090c0" transform="rotate(48)"/><path d="M0 0Q2.9 -1.8 6.5 -1.4L6.5 1.4Q2.9 1.8 0 0Z" fill="#c090c0" transform="rotate(88)"/><path d="M0 0Q3.4 -2.1 7.5 -1.6L7.5 1.6Q3.4 2.1 0 0Z" fill="#c090c0" transform="rotate(141)"/><path d="M0 0Q3.1 -1.9 6.9 -1.5L6.9 1.5Q3.1 1.9 0 0Z" fill="#c090c0" transform="rotate(184)"/><path d="M0 0Q3.6 -2.2 8.0 -1.7L8.0 1.7Q3.6 2.2 0 0Z" fill="#c090c0" transform="rotate(226)"/><path d="M0 0Q3.3 -2.0 7.4 -1.5L7.4 1.5Q3.3 2.0 0 0Z" fill="#c090c0" transform="rotate(274)"/><path d="M0 0Q3.2 -1.9 7.1 -1.5L7.1 1.5Q3.2 1.9 0 0Z" fill="#c090c0" transform="rotate(313)"/><circle r="2.8" fill="#906c90" opacity="0.6"/><circle r="1.2" fill="#6a5a60" opacity="0.8"/></g><g transform="translate(43 62) rotate(40)" opacity="1.0" filter="url(#b6)"><path d="M0 0Q4.2 -2.6 9.4 -2.0L9.4 2.0Q4.2 2.6 0 0Z" fill="#c8c8d8" transform="rotate(-1)"/><path d="M0 0Q4.4 -2.7 9.8 -2.1L9.8 2.1Q4.4 2.7 0 0Z" fill="#c8c8d8" transform="rotate(46)"/><path d="M0 0Q3.9 -2.3 8.6 -1.8L8.6 1.8Q3.9 2.3 0 0Z" fill="#c8c8d8" transform="rotate(94)"/><path d="M0 0Q3.8 -2.3 8.5 -1.8L8.5 1.8Q3.8 2.3 0 0Z" fill="#c8c8d8" transform="rotate(129)"/><path d="M0 0Q4.1 -2.5 9.2 -1.9L9.2 1.9Q4.1 2.5 0 0Z" fill="#c8c8d8" transform="rotate(179)"/><path d="M0 0Q4.4 -2.7 9.8 -2.1L9.8 2.1Q4.4 2.7 0 0Z" fill="#c8c8d8" transform="rotate(229)"/><path d="M0 0Q4.3 -2.6 9.7 -2.0L9.7 2.0Q4.3 2.6 0 0Z" fill="#c8c8d8" transform="rotate(265)"/><path d="M0 0Q4.4 -2.7 9.7 -2.0L9.7 2.0Q4.4 2.7 0 0Z" fill="#c8c8d8" transform="rotate(319)"/><circle r="3.5" fill="#9696a2" opacity="0.6"/><circle r="1.5" fill="#6a5a60" opacity="0.8"/></g><g transform="translate(150 200) rotate(26)" opacity="1.0" filter="url(#b15)"><path d="M0 0Q4.8 -2.9 10.7 -2.2L10.7 2.2Q4.8 2.9 0 0Z" fill="#b850a0" transform="rotate(-3)"/><path d="M0 0Q4.6 -2.8 10.3 -2.2L10.3 2.2Q4.6 2.8 0 0Z" fill="#b850a0" transform="rotate(49)"/><path d="M0 0Q4.3 -2.6 9.6 -2.0L9.6 2.0Q4.3 2.6 0 0Z" fill="#b850a0" transform="rotate(95)"/><path d="M0 0Q4.5 -2.7 10.0 -2.1L10.0 2.1Q4.5 2.7 0 0Z" fill="#b850a0" transform="rotate(130)"/><path d="M0 0Q4.2 -2.5 9.2 -1.9L9.2 1.9Q4.2 2.5 0 0Z" fill="#b850a0" transform="rotate(184)"/><path d="M0 0Q4.9 -3.0 10.8 -2.3L10.8 2.3Q4.9 3.0 0 0Z" fill="#b850a0" transform="rotate(228)"/><path d="M0 0Q4.6 -2.8 10.1 -2.1L10.1 2.1Q4.6 2.8 0 0Z" fill="#b850a0" transform="rotate(267)"/><path d="M0 0Q4.4 -2.7 9.8 -2.1L9.8 2.1Q4.4 2.7 0 0Z" fill="#b850a0" transform="rotate(317)"/><circle r="3.8" fill="#8a3c78" opacity="0.6"/><circle r="1.6" fill="#6a5a60" opacity="0.8"/></g><g transform="translate(146 185) rotate(9)" opacity="1.0" filter="url(#b15)"><path d="M0 0Q3.8 -2.3 8.6 -1.8L8.6 1.8Q3.8 2.3 0 0Z" fill="#b850a0" transform="rotate(-3)"/><path d="M0 0Q3.6 -2.2 8.0 -1.7L8.0 1.7Q3.6 2.2 0 0Z" fill="#b850a0" transform="rotate(48)"/><path d="M0 0Q3.9 -2.4 8.7 -1.8L8.7 1.8Q3.9 2.4 0 0Z" fill="#b850a0" transform="rotate(85)"/><path d="M0 0Q3.4 -2.1 7.6 -1.6L7.6 1.6Q3.4 2.1 0 0Z" fill="#b850a0" transform="rotate(138)"/><path d="M0 0Q4.0 -2.4 8.8 -1.9L8.8 1.9Q4.0 2.4 0 0Z" fill="#b850a0" transform="rotate(181)"/><path d="M0 0Q3.7 -2.2 8.1 -1.7L8.1 1.7Q3.7 2.2 0 0Z" fill="#b850a0" transform="rotate(230)"/><path d="M0 0Q3.7 -2.3 8.3 -1.7L8.3 1.7Q3.7 2.3 0 0Z" fill="#b850a0" transform="rotate(270)"/><path d="M0 0Q3.4 -2.1 7.5 -1.6L7.5 1.6Q3.4 2.1 0 0Z" fill="#b850a0" transform="rotate(311)"/><circle r="3.1" fill="#8a3c78" opacity="0.6"/><circle r="1.3" fill="#6a5a60" opacity="0.8"/></g><g transform="translate(230 198) rotate(8)" opacity="1.0" filter="url(#b15)"><path d="M0 0Q4.7 -2.9 10.5 -2.2L10.5 2.2Q4.7 2.9 0 0Z" fill="#d0a0d0" transform="rotate(2)"/><path d="M0 0Q4.8 -2.9 10.6 -2.2L10.6 2.2Q4.8 2.9 0 0Z" fill="#d0a0d0" transform="rotate(46)"/><path d="M0 0Q4.5 -2.7 10.0 -2.1L10.0 2.1Q4.5 2.7 0 0Z" fill="#d0a0d0" transform="rotate(90)"/><path d="M0 0Q5.4 -3.3 12.0 -2.5L12.0 2.5Q5.4 3.3 0 0Z" fill="#d0a0d0" transform="rotate(130)"/><path d="M0 0Q4.4 -2.7 9.9 -2.1L9.9 2.1Q4.4 2.7 0 0Z" fill="#d0a0d0" transform="rotate(178)"/><path d="M0 0Q5.2 -3.1 11.5 -2.4L11.5 2.4Q5.2 3.1 0 0Z" fill="#d0a0d0" transform="rotate(227)"/><path d="M0 0Q5.0 -3.0 11.0 -2.3L11.0 2.3Q5.0 3.0 0 0Z" fill="#d0a0d0" transform="rotate(266)"/><path d="M0 0Q4.9 -3.0 10.8 -2.3L10.8 2.3Q4.9 3.0 0 0Z" fill="#d0a0d0" transform="rotate(313)"/><circle r="4.2" fill="#9c789c" opacity="0.6"/><circle r="1.8" fill="#6a5a60" opacity="0.8"/></g><g transform="translate(262 202) rotate(1)" opacity="1.0" filter="url(#b15)"><path d="M0 0Q3.6 -2.2 8.0 -1.7L8.0 1.7Q3.6 2.2 0 0Z" fill="#c4a8d4" transform="rotate(-6)"/><path d="M0 0Q3.2 -2.0 7.2 -1.5L7.2 1.5Q3.2 2.0 0 0Z" fill="#c4a8d4" transform="rotate(49)"/><path d="M0 0Q3.1 -1.9 6.8 -1.4L6.8 1.4Q3.1 1.9 0 0Z" fill="#c4a8d4" transform="rotate(91)"/><path d="M0 0Q3.2 -1.9 7.1 -1.5L7.1 1.5Q3.2 1.9 0 0Z" fill="#c4a8d4" transform="rotate(138)"/><path d="M0 0Q3.4 -2.1 7.6 -1.6L7.6 1.6Q3.4 2.1 0 0Z" fill="#c4a8d4" transform="rotate(185)"/><path d="M0 0Q3.6 -2.2 7.9 -1.7L7.9 1.7Q3.6 2.2 0 0Z" fill="#c4a8d4" transform="rotate(229)"/><path d="M0 0Q2.9 -1.8 6.5 -1.4L6.5 1.4Q2.9 1.8 0 0Z" fill="#c4a8d4" transform="rotate(267)"/><path d="M0 0Q3.0 -1.8 6.7 -1.4L6.7 1.4Q3.0 1.8 0 0Z" fill="#c4a8d4" transform="rotate(311)"/><circle r="2.8" fill="#937e9f" opacity="0.6"/><circle r="1.2" fill="#6a5a60" opacity="0.8"/></g><g transform="translate(298 194) rotate(4)" opacity="1.0" filter="url(#b15)"><path d="M0 0Q4.9 -3.0 10.9 -2.3L10.9 2.3Q4.9 3.0 0 0Z" fill="#c4a8d4" transform="rotate(-5)"/><path d="M0 0Q4.8 -2.9 10.7 -2.2L10.7 2.2Q4.8 2.9 0 0Z" fill="#c4a8d4" transform="rotate(49)"/><path d="M0 0Q5.3 -3.2 11.8 -2.5L11.8 2.5Q5.3 3.2 0 0Z" fill="#c4a8d4" transform="rotate(95)"/><path d="M0 0Q5.0 -3.0 11.0 -2.3L11.0 2.3Q5.0 3.0 0 0Z" fill="#c4a8d4" transform="rotate(130)"/><path d="M0 0Q4.4 -2.7 9.9 -2.1L9.9 2.1Q4.4 2.7 0 0Z" fill="#c4a8d4" transform="rotate(179)"/><path d="M0 0Q4.6 -2.8 10.2 -2.1L10.2 2.1Q4.6 2.8 0 0Z" fill="#c4a8d4" transform="rotate(231)"/><path d="M0 0Q5.0 -3.0 11.1 -2.3L11.1 2.3Q5.0 3.0 0 0Z" fill="#c4a8d4" transform="rotate(271)"/><path d="M0 0Q5.0 -3.1 11.2 -2.4L11.2 2.4Q5.0 3.1 0 0Z" fill="#c4a8d4" transform="rotate(320)"/><circle r="4.2" fill="#937e9f" opacity="0.6"/><circle r="1.8" fill="#6a5a60" opacity="0.8"/></g><g transform="translate(68 181) rotate(18)" opacity="1.0" filter="url(#b15)"><path d="M0 0Q2.2 -1.4 5.0 -1.0L5.0 1.0Q2.2 1.4 0 0Z" fill="#c4a8d4" transform="rotate(-1)"/><path d="M0 0Q2.7 -1.6 6.0 -1.3L6.0 1.3Q2.7 1.6 0 0Z" fill="#c4a8d4" transform="rotate(51)"/><path d="M0 0Q2.2 -1.3 4.8 -1.0L4.8 1.0Q2.2 1.3 0 0Z" fill="#c4a8d4" transform="rotate(87)"/><path d="M0 0Q2.4 -1.4 5.2 -1.1L5.2 1.1Q2.4 1.4 0 0Z" fill="#c4a8d4" transform="rotate(132)"/><path d="M0 0Q2.6 -1.6 5.9 -1.2L5.9 1.2Q2.6 1.6 0 0Z" fill="#c4a8d4" transform="rotate(185)"/><path d="M0 0Q2.2 -1.3 4.9 -1.0L4.9 1.0Q2.2 1.3 0 0Z" fill="#c4a8d4" transform="rotate(229)"/><path d="M0 0Q2.5 -1.5 5.7 -1.2L5.7 1.2Q2.5 1.5 0 0Z" fill="#c4a8d4" transform="rotate(273)"/><path d="M0 0Q2.7 -1.6 6.0 -1.3L6.0 1.3Q2.7 1.6 0 0Z" fill="#c4a8d4" transform="rotate(317)"/><circle r="2.1" fill="#937e9f" opacity="0.6"/><circle r="0.9" fill="#6a5a60" opacity="0.8"/></g><g transform="translate(211 193) rotate(3)" opacity="1.0" filter="url(#b15)"><path d="M0 0Q2.6 -1.6 5.7 -1.2L5.7 1.2Q2.6 1.6 0 0Z" fill="#8a3a6a" transform="rotate(-4)"/><path d="M0 0Q2.5 -1.5 5.6 -1.2L5.6 1.2Q2.5 1.5 0 0Z" fill="#8a3a6a" transform="rotate(50)"/><path d="M0 0Q2.5 -1.5 5.5 -1.2L5.5 1.2Q2.5 1.5 0 0Z" fill="#8a3a6a" transform="rotate(88)"/><path d="M0 0Q2.2 -1.3 4.9 -1.0L4.9 1.0Q2.2 1.3 0 0Z" fill="#8a3a6a" transform="rotate(138)"/><path d="M0 0Q2.3 -1.4 5.1 -1.1L5.1 1.1Q2.3 1.4 0 0Z" fill="#8a3a6a" transform="rotate(178)"/><path d="M0 0Q2.4 -1.5 5.4 -1.1L5.4 1.1Q2.4 1.5 0 0Z" fill="#8a3a6a" transform="rotate(220)"/><path d="M0 0Q2.3 -1.4 5.1 -1.1L5.1 1.1Q2.3 1.4 0 0Z" fill="#8a3a6a" transform="rotate(266)"/><path d="M0 0Q2.5 -1.5 5.6 -1.2L5.6 1.2Q2.5 1.5 0 0Z" fill="#8a3a6a" transform="rotate(311)"/><circle r="2.1" fill="#672b4f" opacity="0.6"/><circle r="0.9" fill="#6a5a60" opacity="0.8"/></g><g transform="translate(27 89) rotate(1)" opacity="1.0" filter="url(#b05)"><path d="M0 0Q3.0 -1.8 6.7 -1.4L6.7 1.4Q3.0 1.8 0 0Z" fill="#7a2658" transform="rotate(3)"/><path d="M0 0Q3.5 -2.2 7.9 -1.7L7.9 1.7Q3.5 2.2 0 0Z" fill="#7a2658" transform="rotate(39)"/><path d="M0 0Q3.6 -2.2 7.9 -1.7L7.9 1.7Q3.6 2.2 0 0Z" fill="#7a2658" transform="rotate(87)"/><path d="M0 0Q3.5 -2.1 7.8 -1.6L7.8 1.6Q3.5 2.1 0 0Z" fill="#7a2658" transform="rotate(139)"/><path d="M0 0Q3.2 -1.9 7.1 -1.5L7.1 1.5Q3.2 1.9 0 0Z" fill="#7a2658" transform="rotate(176)"/><path d="M0 0Q3.5 -2.2 7.9 -1.7L7.9 1.7Q3.5 2.2 0 0Z" fill="#7a2658" transform="rotate(220)"/><path d="M0 0Q3.3 -2.0 7.4 -1.6L7.4 1.6Q3.3 2.0 0 0Z" fill="#7a2658" transform="rotate(274)"/><path d="M0 0Q3.1 -1.9 6.9 -1.5L6.9 1.5Q3.1 1.9 0 0Z" fill="#7a2658" transform="rotate(314)"/><circle r="2.8" fill="#5b1c42" opacity="0.6"/><circle r="1.2" fill="#8a8a40" opacity="0.8"/></g><g transform="translate(27 98) rotate(37)" opacity="1.0" filter="url(#b05)"><path d="M0 0Q2.5 -1.5 5.6 -1.2L5.6 1.2Q2.5 1.5 0 0Z" fill="#7a2658" transform="rotate(-0)"/><path d="M0 0Q2.3 -1.4 5.1 -1.1L5.1 1.1Q2.3 1.4 0 0Z" fill="#7a2658" transform="rotate(41)"/><path d="M0 0Q2.5 -1.5 5.7 -1.2L5.7 1.2Q2.5 1.5 0 0Z" fill="#7a2658" transform="rotate(85)"/><path d="M0 0Q2.2 -1.4 5.0 -1.0L5.0 1.0Q2.2 1.4 0 0Z" fill="#7a2658" transform="rotate(136)"/><path d="M0 0Q2.3 -1.4 5.1 -1.1L5.1 1.1Q2.3 1.4 0 0Z" fill="#7a2658" transform="rotate(184)"/><path d="M0 0Q2.2 -1.4 5.0 -1.0L5.0 1.0Q2.2 1.4 0 0Z" fill="#7a2658" transform="rotate(224)"/><path d="M0 0Q2.6 -1.6 5.8 -1.2L5.8 1.2Q2.6 1.6 0 0Z" fill="#7a2658" transform="rotate(267)"/><path d="M0 0Q2.3 -1.4 5.0 -1.1L5.0 1.1Q2.3 1.4 0 0Z" fill="#7a2658" transform="rotate(313)"/><circle r="2.1" fill="#5b1c42" opacity="0.6"/><circle r="0.9" fill="#8a8a40" opacity="0.8"/></g><g transform="translate(30 110) rotate(22)" opacity="1.0" filter="url(#b05)"><path d="M0 0Q4.0 -2.4 8.8 -1.9L8.8 1.9Q4.0 2.4 0 0Z" fill="#962a70" transform="rotate(-2)"/><path d="M0 0Q4.0 -2.4 9.0 -1.9L9.0 1.9Q4.0 2.4 0 0Z" fill="#962a70" transform="rotate(40)"/><path d="M0 0Q4.0 -2.4 8.8 -1.9L8.8 1.9Q4.0 2.4 0 0Z" fill="#962a70" transform="rotate(85)"/><path d="M0 0Q3.4 -2.1 7.6 -1.6L7.6 1.6Q3.4 2.1 0 0Z" fill="#962a70" transform="rotate(137)"/><path d="M0 0Q3.5 -2.1 7.7 -1.6L7.7 1.6Q3.5 2.1 0 0Z" fill="#962a70" transform="rotate(180)"/><path d="M0 0Q3.4 -2.1 7.6 -1.6L7.6 1.6Q3.4 2.1 0 0Z" fill="#962a70" transform="rotate(222)"/><path d="M0 0Q4.0 -2.5 9.0 -1.9L9.0 1.9Q4.0 2.5 0 0Z" fill="#962a70" transform="rotate(268)"/><path d="M0 0Q4.0 -2.4 8.9 -1.9L8.9 1.9Q4.0 2.4 0 0Z" fill="#962a70" transform="rotate(321)"/><circle r="3.1" fill="#701f54" opacity="0.6"/><circle r="1.3" fill="#8a8a40" opacity="0.8"/></g><g transform="translate(6 107) rotate(4)" opacity="1.0" filter="url(#b05)"><path d="M0 0Q3.1 -1.9 6.9 -1.4L6.9 1.4Q3.1 1.9 0 0Z" fill="#962a70" transform="rotate(-3)"/><path d="M0 0Q3.0 -1.8 6.6 -1.4L6.6 1.4Q3.0 1.8 0 0Z" fill="#962a70" transform="rotate(40)"/><path d="M0 0Q3.1 -1.9 7.0 -1.5L7.0 1.5Q3.1 1.9 0 0Z" fill="#962a70" transform="rotate(88)"/><path d="M0 0Q3.0 -1.8 6.7 -1.4L6.7 1.4Q3.0 1.8 0 0Z" fill="#962a70" transform="rotate(129)"/><path d="M0 0Q2.6 -1.6 5.8 -1.2L5.8 1.2Q2.6 1.6 0 0Z" fill="#962a70" transform="rotate(178)"/><path d="M0 0Q3.0 -1.8 6.8 -1.4L6.8 1.4Q3.0 1.8 0 0Z" fill="#962a70" transform="rotate(219)"/><path d="M0 0Q2.6 -1.6 5.9 -1.2L5.9 1.2Q2.6 1.6 0 0Z" fill="#962a70" transform="rotate(270)"/><path d="M0 0Q3.1 -1.9 6.9 -1.4L6.9 1.4Q3.1 1.9 0 0Z" fill="#962a70" transform="rotate(314)"/><circle r="2.4" fill="#701f54" opacity="0.6"/><circle r="1.1" fill="#8a8a40" opacity="0.8"/></g><g transform="translate(9 122) rotate(10)" opacity="1.0" filter="url(#b05)"><path d="M0 0Q1.9 -1.1 4.1 -0.9L4.1 0.9Q1.9 1.1 0 0Z" fill="#dde0ea" transform="rotate(1)"/><path d="M0 0Q2.1 -1.3 4.8 -1.0L4.8 1.0Q2.1 1.3 0 0Z" fill="#dde0ea" transform="rotate(41)"/><path d="M0 0Q1.9 -1.1 4.2 -0.9L4.2 0.9Q1.9 1.1 0 0Z" fill="#dde0ea" transform="rotate(93)"/><path d="M0 0Q1.8 -1.1 4.1 -0.9L4.1 0.9Q1.8 1.1 0 0Z" fill="#dde0ea" transform="rotate(130)"/><path d="M0 0Q2.0 -1.2 4.5 -0.9L4.5 0.9Q2.0 1.2 0 0Z" fill="#dde0ea" transform="rotate(181)"/><path d="M0 0Q1.9 -1.1 4.2 -0.9L4.2 0.9Q1.9 1.1 0 0Z" fill="#dde0ea" transform="rotate(222)"/><path d="M0 0Q2.1 -1.3 4.7 -1.0L4.7 1.0Q2.1 1.3 0 0Z" fill="#dde0ea" transform="rotate(271)"/><path d="M0 0Q2.1 -1.3 4.6 -1.0L4.6 1.0Q2.1 1.3 0 0Z" fill="#dde0ea" transform="rotate(319)"/><circle r="1.8" fill="#a5a8af" opacity="0.6"/><circle r="0.8" fill="#8a8a40" opacity="0.8"/></g><g transform="translate(69 142) rotate(9)" opacity="1.0" filter="url(#b05)"><path d="M0 0Q4.3 -2.6 9.5 -2.0L9.5 2.0Q4.3 2.6 0 0Z" fill="#7a2658" transform="rotate(-5)"/><path d="M0 0Q4.2 -2.6 9.4 -2.0L9.4 2.0Q4.2 2.6 0 0Z" fill="#7a2658" transform="rotate(44)"/><path d="M0 0Q4.3 -2.6 9.6 -2.0L9.6 2.0Q4.3 2.6 0 0Z" fill="#7a2658" transform="rotate(85)"/><path d="M0 0Q4.4 -2.6 9.7 -2.0L9.7 2.0Q4.4 2.6 0 0Z" fill="#7a2658" transform="rotate(133)"/><path d="M0 0Q4.0 -2.5 9.0 -1.9L9.0 1.9Q4.0 2.5 0 0Z" fill="#7a2658" transform="rotate(184)"/><path d="M0 0Q4.4 -2.7 9.8 -2.1L9.8 2.1Q4.4 2.7 0 0Z" fill="#7a2658" transform="rotate(219)"/><path d="M0 0Q4.4 -2.7 9.7 -2.0L9.7 2.0Q4.4 2.7 0 0Z" fill="#7a2658" transform="rotate(270)"/><path d="M0 0Q3.8 -2.3 8.4 -1.8L8.4 1.8Q3.8 2.3 0 0Z" fill="#7a2658" transform="rotate(312)"/><circle r="3.5" fill="#5b1c42" opacity="0.6"/><circle r="1.5" fill="#8a8a40" opacity="0.8"/></g><g transform="translate(117 77) rotate(37)" opacity="1.0" filter="url(#b05)"><path d="M0 0Q3.7 -2.3 8.3 -1.7L8.3 1.7Q3.7 2.3 0 0Z" fill="#d0a0d0" transform="rotate(-2)"/><path d="M0 0Q4.1 -2.5 9.2 -1.9L9.2 1.9Q4.1 2.5 0 0Z" fill="#d0a0d0" transform="rotate(43)"/><path d="M0 0Q4.1 -2.5 9.0 -1.9L9.0 1.9Q4.1 2.5 0 0Z" fill="#d0a0d0" transform="rotate(84)"/><path d="M0 0Q4.1 -2.5 9.0 -1.9L9.0 1.9Q4.1 2.5 0 0Z" fill="#d0a0d0" transform="rotate(134)"/><path d="M0 0Q4.2 -2.6 9.4 -2.0L9.4 2.0Q4.2 2.6 0 0Z" fill="#d0a0d0" transform="rotate(175)"/><path d="M0 0Q4.4 -2.7 9.7 -2.0L9.7 2.0Q4.4 2.7 0 0Z" fill="#d0a0d0" transform="rotate(229)"/><path d="M0 0Q4.2 -2.6 9.4 -2.0L9.4 2.0Q4.2 2.6 0 0Z" fill="#d0a0d0" transform="rotate(268)"/><path d="M0 0Q4.3 -2.6 9.5 -2.0L9.5 2.0Q4.3 2.6 0 0Z" fill="#d0a0d0" transform="rotate(314)"/><circle r="3.5" fill="#9c789c" opacity="0.6"/><circle r="1.5" fill="#8a8a40" opacity="0.8"/></g><g transform="translate(116 87) rotate(3)" opacity="1.0" filter="url(#b05)"><path d="M0 0Q4.5 -2.7 9.9 -2.1L9.9 2.1Q4.5 2.7 0 0Z" fill="#d0a0d0" transform="rotate(4)"/><path d="M0 0Q4.1 -2.5 9.0 -1.9L9.0 1.9Q4.1 2.5 0 0Z" fill="#d0a0d0" transform="rotate(45)"/><path d="M0 0Q4.1 -2.5 9.1 -1.9L9.1 1.9Q4.1 2.5 0 0Z" fill="#d0a0d0" transform="rotate(90)"/><path d="M0 0Q4.5 -2.7 9.9 -2.1L9.9 2.1Q4.5 2.7 0 0Z" fill="#d0a0d0" transform="rotate(129)"/><path d="M0 0Q3.8 -2.3 8.4 -1.8L8.4 1.8Q3.8 2.3 0 0Z" fill="#d0a0d0" transform="rotate(177)"/><path d="M0 0Q3.8 -2.3 8.5 -1.8L8.5 1.8Q3.8 2.3 0 0Z" fill="#d0a0d0" transform="rotate(220)"/><path d="M0 0Q3.6 -2.2 8.1 -1.7L8.1 1.7Q3.6 2.2 0 0Z" fill="#d0a0d0" transform="rotate(274)"/><path d="M0 0Q4.2 -2.6 9.4 -2.0L9.4 2.0Q4.2 2.6 0 0Z" fill="#d0a0d0" transform="rotate(310)"/><circle r="3.5" fill="#9c789c" opacity="0.6"/><circle r="1.5" fill="#8a8a40" opacity="0.8"/></g><g transform="translate(127 99) rotate(9)" opacity="1.0" filter="url(#b05)"><path d="M0 0Q4.1 -2.5 9.2 -1.9L9.2 1.9Q4.1 2.5 0 0Z" fill="#d0a0d0" transform="rotate(-6)"/><path d="M0 0Q4.1 -2.5 9.0 -1.9L9.0 1.9Q4.1 2.5 0 0Z" fill="#d0a0d0" transform="rotate(46)"/><path d="M0 0Q3.7 -2.2 8.2 -1.7L8.2 1.7Q3.7 2.2 0 0Z" fill="#d0a0d0" transform="rotate(92)"/><path d="M0 0Q4.2 -2.6 9.4 -2.0L9.4 2.0Q4.2 2.6 0 0Z" fill="#d0a0d0" transform="rotate(139)"/><path d="M0 0Q3.7 -2.3 8.2 -1.7L8.2 1.7Q3.7 2.3 0 0Z" fill="#d0a0d0" transform="rotate(175)"/><path d="M0 0Q4.1 -2.5 9.0 -1.9L9.0 1.9Q4.1 2.5 0 0Z" fill="#d0a0d0" transform="rotate(225)"/><path d="M0 0Q3.7 -2.3 8.2 -1.7L8.2 1.7Q3.7 2.3 0 0Z" fill="#d0a0d0" transform="rotate(267)"/><path d="M0 0Q3.7 -2.3 8.3 -1.7L8.3 1.7Q3.7 2.3 0 0Z" fill="#d0a0d0" transform="rotate(314)"/><circle r="3.5" fill="#9c789c" opacity="0.6"/><circle r="1.5" fill="#8a8a40" opacity="0.8"/></g><g transform="translate(110 116) rotate(27)" opacity="1.0" filter="url(#b05)"><path d="M0 0Q4.1 -2.5 9.1 -1.9L9.1 1.9Q4.1 2.5 0 0Z" fill="#c4a8d4" transform="rotate(4)"/><path d="M0 0Q4.7 -2.9 10.4 -2.2L10.4 2.2Q4.7 2.9 0 0Z" fill="#c4a8d4" transform="rotate(46)"/><path d="M0 0Q4.8 -2.9 10.6 -2.2L10.6 2.2Q4.8 2.9 0 0Z" fill="#c4a8d4" transform="rotate(86)"/><path d="M0 0Q4.3 -2.6 9.7 -2.0L9.7 2.0Q4.3 2.6 0 0Z" fill="#c4a8d4" transform="rotate(140)"/><path d="M0 0Q4.8 -2.9 10.6 -2.2L10.6 2.2Q4.8 2.9 0 0Z" fill="#c4a8d4" transform="rotate(179)"/><path d="M0 0Q4.4 -2.6 9.7 -2.0L9.7 2.0Q4.4 2.6 0 0Z" fill="#c4a8d4" transform="rotate(225)"/><path d="M0 0Q4.7 -2.9 10.5 -2.2L10.5 2.2Q4.7 2.9 0 0Z" fill="#c4a8d4" transform="rotate(275)"/><path d="M0 0Q4.2 -2.5 9.3 -2.0L9.3 2.0Q4.2 2.5 0 0Z" fill="#c4a8d4" transform="rotate(313)"/><circle r="3.8" fill="#937e9f" opacity="0.6"/><circle r="1.6" fill="#8a8a40" opacity="0.8"/></g><g transform="translate(125 124) rotate(15)" opacity="1.0" filter="url(#b05)"><path d="M0 0Q2.2 -1.4 5.0 -1.0L5.0 1.0Q2.2 1.4 0 0Z" fill="#7a2658" transform="rotate(-1)"/><path d="M0 0Q2.2 -1.3 4.9 -1.0L4.9 1.0Q2.2 1.3 0 0Z" fill="#7a2658" transform="rotate(49)"/><path d="M0 0Q2.2 -1.3 4.8 -1.0L4.8 1.0Q2.2 1.3 0 0Z" fill="#7a2658" transform="rotate(94)"/><path d="M0 0Q2.0 -1.2 4.5 -0.9L4.5 0.9Q2.0 1.2 0 0Z" fill="#7a2658" transform="rotate(130)"/><path d="M0 0Q2.2 -1.3 4.9 -1.0L4.9 1.0Q2.2 1.3 0 0Z" fill="#7a2658" transform="rotate(185)"/><path d="M0 0Q2.0 -1.2 4.4 -0.9L4.4 0.9Q2.0 1.2 0 0Z" fill="#7a2658" transform="rotate(222)"/><path d="M0 0Q2.0 -1.2 4.4 -0.9L4.4 0.9Q2.0 1.2 0 0Z" fill="#7a2658" transform="rotate(272)"/><path d="M0 0Q1.8 -1.1 4.1 -0.9L4.1 0.9Q1.8 1.1 0 0Z" fill="#7a2658" transform="rotate(315)"/><circle r="1.8" fill="#5b1c42" opacity="0.6"/><circle r="0.8" fill="#8a8a40" opacity="0.8"/></g><g transform="translate(156 67) rotate(19)" opacity="1.0" filter="url(#b05)"><path d="M0 0Q4.0 -2.4 8.8 -1.9L8.8 1.9Q4.0 2.4 0 0Z" fill="#d0a0d0" transform="rotate(0)"/><path d="M0 0Q4.9 -3.0 10.9 -2.3L10.9 2.3Q4.9 3.0 0 0Z" fill="#d0a0d0" transform="rotate(41)"/><path d="M0 0Q4.9 -3.0 10.9 -2.3L10.9 2.3Q4.9 3.0 0 0Z" fill="#d0a0d0" transform="rotate(93)"/><path d="M0 0Q4.8 -2.9 10.6 -2.2L10.6 2.2Q4.8 2.9 0 0Z" fill="#d0a0d0" transform="rotate(137)"/><path d="M0 0Q4.8 -2.9 10.7 -2.3L10.7 2.3Q4.8 2.9 0 0Z" fill="#d0a0d0" transform="rotate(185)"/><path d="M0 0Q4.6 -2.8 10.2 -2.1L10.2 2.1Q4.6 2.8 0 0Z" fill="#d0a0d0" transform="rotate(219)"/><path d="M0 0Q4.6 -2.8 10.3 -2.2L10.3 2.2Q4.6 2.8 0 0Z" fill="#d0a0d0" transform="rotate(267)"/><path d="M0 0Q4.5 -2.7 10.0 -2.1L10.0 2.1Q4.5 2.7 0 0Z" fill="#d0a0d0" transform="rotate(312)"/><circle r="3.8" fill="#9c789c" opacity="0.6"/><circle r="1.6" fill="#8a8a40" opacity="0.8"/></g><g transform="translate(158 84) rotate(42)" opacity="1.0" filter="url(#b05)"><path d="M0 0Q4.6 -2.8 10.2 -2.1L10.2 2.1Q4.6 2.8 0 0Z" fill="#d0a0d0" transform="rotate(1)"/><path d="M0 0Q4.8 -2.9 10.6 -2.2L10.6 2.2Q4.8 2.9 0 0Z" fill="#d0a0d0" transform="rotate(45)"/><path d="M0 0Q4.6 -2.8 10.3 -2.2L10.3 2.2Q4.6 2.8 0 0Z" fill="#d0a0d0" transform="rotate(95)"/><path d="M0 0Q5.0 -3.0 11.2 -2.3L11.2 2.3Q5.0 3.0 0 0Z" fill="#d0a0d0" transform="rotate(133)"/><path d="M0 0Q5.0 -3.0 11.0 -2.3L11.0 2.3Q5.0 3.0 0 0Z" fill="#d0a0d0" transform="rotate(175)"/><path d="M0 0Q4.9 -3.0 10.8 -2.3L10.8 2.3Q4.9 3.0 0 0Z" fill="#d0a0d0" transform="rotate(230)"/><path d="M0 0Q4.8 -2.9 10.7 -2.3L10.7 2.3Q4.8 2.9 0 0Z" fill="#d0a0d0" transform="rotate(267)"/><path d="M0 0Q4.5 -2.7 10.0 -2.1L10.0 2.1Q4.5 2.7 0 0Z" fill="#d0a0d0" transform="rotate(315)"/><circle r="4.2" fill="#9c789c" opacity="0.6"/><circle r="1.8" fill="#8a8a40" opacity="0.8"/></g><g transform="translate(158 138) rotate(6)" opacity="1.0" filter="url(#b05)"><path d="M0 0Q3.9 -2.3 8.6 -1.8L8.6 1.8Q3.9 2.3 0 0Z" fill="#c4a8d4" transform="rotate(-4)"/><path d="M0 0Q3.9 -2.3 8.6 -1.8L8.6 1.8Q3.9 2.3 0 0Z" fill="#c4a8d4" transform="rotate(44)"/><path d="M0 0Q3.7 -2.2 8.2 -1.7L8.2 1.7Q3.7 2.2 0 0Z" fill="#c4a8d4" transform="rotate(87)"/><path d="M0 0Q4.4 -2.6 9.7 -2.0L9.7 2.0Q4.4 2.6 0 0Z" fill="#c4a8d4" transform="rotate(136)"/><path d="M0 0Q4.1 -2.5 9.1 -1.9L9.1 1.9Q4.1 2.5 0 0Z" fill="#c4a8d4" transform="rotate(181)"/><path d="M0 0Q3.8 -2.3 8.4 -1.8L8.4 1.8Q3.8 2.3 0 0Z" fill="#c4a8d4" transform="rotate(227)"/><path d="M0 0Q4.0 -2.4 8.9 -1.9L8.9 1.9Q4.0 2.4 0 0Z" fill="#c4a8d4" transform="rotate(273)"/><path d="M0 0Q4.2 -2.5 9.2 -1.9L9.2 1.9Q4.2 2.5 0 0Z" fill="#c4a8d4" transform="rotate(316)"/><circle r="3.5" fill="#937e9f" opacity="0.6"/><circle r="1.5" fill="#8a8a40" opacity="0.8"/></g><g transform="translate(179 116) rotate(21)" opacity="1.0" filter="url(#b05)"><path d="M0 0Q2.7 -1.6 5.9 -1.2L5.9 1.2Q2.7 1.6 0 0Z" fill="#982e74" transform="rotate(-2)"/><path d="M0 0Q2.8 -1.7 6.3 -1.3L6.3 1.3Q2.8 1.7 0 0Z" fill="#982e74" transform="rotate(42)"/><path d="M0 0Q2.9 -1.8 6.4 -1.3L6.4 1.3Q2.9 1.8 0 0Z" fill="#982e74" transform="rotate(89)"/><path d="M0 0Q2.7 -1.7 6.1 -1.3L6.1 1.3Q2.7 1.7 0 0Z" fill="#982e74" transform="rotate(129)"/><path d="M0 0Q2.7 -1.6 5.9 -1.2L5.9 1.2Q2.7 1.6 0 0Z" fill="#982e74" transform="rotate(184)"/><path d="M0 0Q2.8 -1.7 6.3 -1.3L6.3 1.3Q2.8 1.7 0 0Z" fill="#982e74" transform="rotate(226)"/><path d="M0 0Q3.1 -1.9 7.0 -1.5L7.0 1.5Q3.1 1.9 0 0Z" fill="#982e74" transform="rotate(267)"/><path d="M0 0Q3.0 -1.8 6.7 -1.4L6.7 1.4Q3.0 1.8 0 0Z" fill="#982e74" transform="rotate(313)"/><circle r="2.4" fill="#722257" opacity="0.6"/><circle r="1.1" fill="#8a8a40" opacity="0.8"/></g><g transform="translate(172 104) rotate(7)" opacity="1.0" filter="url(#b05)"><path d="M0 0Q1.8 -1.1 3.9 -0.8L3.9 0.8Q1.8 1.1 0 0Z" fill="#7a2658" transform="rotate(-5)"/><path d="M0 0Q1.5 -0.9 3.2 -0.7L3.2 0.7Q1.5 0.9 0 0Z" fill="#7a2658" transform="rotate(44)"/><path d="M0 0Q1.6 -1.0 3.6 -0.7L3.6 0.7Q1.6 1.0 0 0Z" fill="#7a2658" transform="rotate(89)"/><path d="M0 0Q1.5 -0.9 3.3 -0.7L3.3 0.7Q1.5 0.9 0 0Z" fill="#7a2658" transform="rotate(138)"/><path d="M0 0Q1.8 -1.1 4.0 -0.8L4.0 0.8Q1.8 1.1 0 0Z" fill="#7a2658" transform="rotate(177)"/><path d="M0 0Q1.5 -0.9 3.3 -0.7L3.3 0.7Q1.5 0.9 0 0Z" fill="#7a2658" transform="rotate(228)"/><path d="M0 0Q1.6 -1.0 3.5 -0.7L3.5 0.7Q1.6 1.0 0 0Z" fill="#7a2658" transform="rotate(268)"/><path d="M0 0Q1.7 -1.0 3.7 -0.8L3.7 0.8Q1.7 1.0 0 0Z" fill="#7a2658" transform="rotate(317)"/><circle r="1.4" fill="#5b1c42" opacity="0.6"/><circle r="0.6" fill="#8a8a40" opacity="0.8"/></g><g transform="translate(242 74) rotate(38)" opacity="1.0" filter="url(#b05)"><path d="M0 0Q4.1 -2.5 9.0 -1.9L9.0 1.9Q4.1 2.5 0 0Z" fill="#a84a94" transform="rotate(4)"/><path d="M0 0Q4.3 -2.6 9.5 -2.0L9.5 2.0Q4.3 2.6 0 0Z" fill="#a84a94" transform="rotate(48)"/><path d="M0 0Q4.0 -2.4 9.0 -1.9L9.0 1.9Q4.0 2.4 0 0Z" fill="#a84a94" transform="rotate(93)"/><path d="M0 0Q4.2 -2.6 9.4 -2.0L9.4 2.0Q4.2 2.6 0 0Z" fill="#a84a94" transform="rotate(138)"/><path d="M0 0Q3.7 -2.3 8.3 -1.7L8.3 1.7Q3.7 2.3 0 0Z" fill="#a84a94" transform="rotate(185)"/><path d="M0 0Q3.6 -2.2 8.0 -1.7L8.0 1.7Q3.6 2.2 0 0Z" fill="#a84a94" transform="rotate(229)"/><path d="M0 0Q4.1 -2.5 9.2 -1.9L9.2 1.9Q4.1 2.5 0 0Z" fill="#a84a94" transform="rotate(273)"/><path d="M0 0Q4.5 -2.7 9.9 -2.1L9.9 2.1Q4.5 2.7 0 0Z" fill="#a84a94" transform="rotate(315)"/><circle r="3.5" fill="#7e376f" opacity="0.6"/><circle r="1.5" fill="#8a8a40" opacity="0.8"/></g><g transform="translate(223 78) rotate(26)" opacity="1.0" filter="url(#b05)"><path d="M0 0Q2.6 -1.6 5.7 -1.2L5.7 1.2Q2.6 1.6 0 0Z" fill="#7a2658" transform="rotate(-1)"/><path d="M0 0Q2.5 -1.5 5.5 -1.2L5.5 1.2Q2.5 1.5 0 0Z" fill="#7a2658" transform="rotate(49)"/><path d="M0 0Q2.4 -1.5 5.3 -1.1L5.3 1.1Q2.4 1.5 0 0Z" fill="#7a2658" transform="rotate(89)"/><path d="M0 0Q2.6 -1.5 5.7 -1.2L5.7 1.2Q2.6 1.5 0 0Z" fill="#7a2658" transform="rotate(134)"/><path d="M0 0Q2.4 -1.4 5.3 -1.1L5.3 1.1Q2.4 1.4 0 0Z" fill="#7a2658" transform="rotate(178)"/><path d="M0 0Q2.4 -1.4 5.3 -1.1L5.3 1.1Q2.4 1.4 0 0Z" fill="#7a2658" transform="rotate(226)"/><path d="M0 0Q2.6 -1.6 5.7 -1.2L5.7 1.2Q2.6 1.6 0 0Z" fill="#7a2658" transform="rotate(268)"/><path d="M0 0Q2.4 -1.5 5.4 -1.1L5.4 1.1Q2.4 1.5 0 0Z" fill="#7a2658" transform="rotate(319)"/><circle r="2.1" fill="#5b1c42" opacity="0.6"/><circle r="0.9" fill="#8a8a40" opacity="0.8"/></g><g transform="translate(260 92) rotate(20)" opacity="1.0" filter="url(#b05)"><path d="M0 0Q2.7 -1.6 6.0 -1.3L6.0 1.3Q2.7 1.6 0 0Z" fill="#7a2658" transform="rotate(-4)"/><path d="M0 0Q2.9 -1.7 6.4 -1.3L6.4 1.3Q2.9 1.7 0 0Z" fill="#7a2658" transform="rotate(41)"/><path d="M0 0Q2.6 -1.6 5.7 -1.2L5.7 1.2Q2.6 1.6 0 0Z" fill="#7a2658" transform="rotate(91)"/><path d="M0 0Q2.7 -1.7 6.1 -1.3L6.1 1.3Q2.7 1.7 0 0Z" fill="#7a2658" transform="rotate(140)"/><path d="M0 0Q3.0 -1.8 6.8 -1.4L6.8 1.4Q3.0 1.8 0 0Z" fill="#7a2658" transform="rotate(184)"/><path d="M0 0Q2.6 -1.6 5.9 -1.2L5.9 1.2Q2.6 1.6 0 0Z" fill="#7a2658" transform="rotate(231)"/><path d="M0 0Q3.1 -1.9 6.9 -1.4L6.9 1.4Q3.1 1.9 0 0Z" fill="#7a2658" transform="rotate(269)"/><path d="M0 0Q2.5 -1.5 5.7 -1.2L5.7 1.2Q2.5 1.5 0 0Z" fill="#7a2658" transform="rotate(309)"/><circle r="2.4" fill="#5b1c42" opacity="0.6"/><circle r="1.1" fill="#8a8a40" opacity="0.8"/></g><g transform="translate(219 98) rotate(25)" opacity="1.0" filter="url(#b05)"><path d="M0 0Q4.0 -2.4 8.9 -1.9L8.9 1.9Q4.0 2.4 0 0Z" fill="#a84a94" transform="rotate(-0)"/><path d="M0 0Q3.7 -2.2 8.2 -1.7L8.2 1.7Q3.7 2.2 0 0Z" fill="#a84a94" transform="rotate(48)"/><path d="M0 0Q3.7 -2.2 8.1 -1.7L8.1 1.7Q3.7 2.2 0 0Z" fill="#a84a94" transform="rotate(96)"/><path d="M0 0Q3.8 -2.3 8.4 -1.8L8.4 1.8Q3.8 2.3 0 0Z" fill="#a84a94" transform="rotate(135)"/><path d="M0 0Q3.5 -2.1 7.8 -1.6L7.8 1.6Q3.5 2.1 0 0Z" fill="#a84a94" transform="rotate(179)"/><path d="M0 0Q3.5 -2.1 7.8 -1.6L7.8 1.6Q3.5 2.1 0 0Z" fill="#a84a94" transform="rotate(226)"/><path d="M0 0Q3.8 -2.3 8.4 -1.8L8.4 1.8Q3.8 2.3 0 0Z" fill="#a84a94" transform="rotate(275)"/><path d="M0 0Q3.3 -2.0 7.4 -1.5L7.4 1.5Q3.3 2.0 0 0Z" fill="#a84a94" transform="rotate(315)"/><circle r="3.1" fill="#7e376f" opacity="0.6"/><circle r="1.3" fill="#8a8a40" opacity="0.8"/></g><g transform="translate(238 97) rotate(17)" opacity="1.0" filter="url(#b05)"><path d="M0 0Q3.7 -2.2 8.2 -1.7L8.2 1.7Q3.7 2.2 0 0Z" fill="#982e74" transform="rotate(-1)"/><path d="M0 0Q4.0 -2.4 8.8 -1.8L8.8 1.8Q4.0 2.4 0 0Z" fill="#982e74" transform="rotate(46)"/><path d="M0 0Q3.6 -2.2 8.1 -1.7L8.1 1.7Q3.6 2.2 0 0Z" fill="#982e74" transform="rotate(96)"/><path d="M0 0Q3.7 -2.3 8.3 -1.7L8.3 1.7Q3.7 2.3 0 0Z" fill="#982e74" transform="rotate(134)"/><path d="M0 0Q3.5 -2.1 7.8 -1.6L7.8 1.6Q3.5 2.1 0 0Z" fill="#982e74" transform="rotate(186)"/><path d="M0 0Q3.9 -2.4 8.7 -1.8L8.7 1.8Q3.9 2.4 0 0Z" fill="#982e74" transform="rotate(225)"/><path d="M0 0Q3.5 -2.1 7.8 -1.6L7.8 1.6Q3.5 2.1 0 0Z" fill="#982e74" transform="rotate(266)"/><path d="M0 0Q3.9 -2.4 8.7 -1.8L8.7 1.8Q3.9 2.4 0 0Z" fill="#982e74" transform="rotate(321)"/><circle r="3.1" fill="#722257" opacity="0.6"/><circle r="1.3" fill="#8a8a40" opacity="0.8"/></g><g transform="translate(200 105) rotate(23)" opacity="1.0" filter="url(#b05)"><path d="M0 0Q4.0 -2.4 8.8 -1.9L8.8 1.9Q4.0 2.4 0 0Z" fill="#982e74" transform="rotate(-5)"/><path d="M0 0Q3.9 -2.4 8.7 -1.8L8.7 1.8Q3.9 2.4 0 0Z" fill="#982e74" transform="rotate(47)"/><path d="M0 0Q4.0 -2.4 8.8 -1.8L8.8 1.8Q4.0 2.4 0 0Z" fill="#982e74" transform="rotate(96)"/><path d="M0 0Q3.4 -2.0 7.5 -1.6L7.5 1.6Q3.4 2.0 0 0Z" fill="#982e74" transform="rotate(134)"/><path d="M0 0Q3.7 -2.2 8.1 -1.7L8.1 1.7Q3.7 2.2 0 0Z" fill="#982e74" transform="rotate(177)"/><path d="M0 0Q3.4 -2.1 7.5 -1.6L7.5 1.6Q3.4 2.1 0 0Z" fill="#982e74" transform="rotate(225)"/><path d="M0 0Q3.8 -2.3 8.3 -1.8L8.3 1.8Q3.8 2.3 0 0Z" fill="#982e74" transform="rotate(266)"/><path d="M0 0Q3.5 -2.1 7.8 -1.6L7.8 1.6Q3.5 2.1 0 0Z" fill="#982e74" transform="rotate(316)"/><circle r="3.1" fill="#722257" opacity="0.6"/><circle r="1.3" fill="#8a8a40" opacity="0.8"/></g><g transform="translate(250 110) rotate(45)" opacity="1.0" filter="url(#b05)"><path d="M0 0Q3.6 -2.2 8.1 -1.7L8.1 1.7Q3.6 2.2 0 0Z" fill="#982e74" transform="rotate(2)"/><path d="M0 0Q4.3 -2.6 9.6 -2.0L9.6 2.0Q4.3 2.6 0 0Z" fill="#982e74" transform="rotate(44)"/><path d="M0 0Q4.2 -2.6 9.4 -2.0L9.4 2.0Q4.2 2.6 0 0Z" fill="#982e74" transform="rotate(88)"/><path d="M0 0Q3.9 -2.4 8.6 -1.8L8.6 1.8Q3.9 2.4 0 0Z" fill="#982e74" transform="rotate(129)"/><path d="M0 0Q4.1 -2.5 9.2 -1.9L9.2 1.9Q4.1 2.5 0 0Z" fill="#982e74" transform="rotate(184)"/><path d="M0 0Q3.8 -2.3 8.4 -1.8L8.4 1.8Q3.8 2.3 0 0Z" fill="#982e74" transform="rotate(227)"/><path d="M0 0Q4.1 -2.5 9.1 -1.9L9.1 1.9Q4.1 2.5 0 0Z" fill="#982e74" transform="rotate(270)"/><path d="M0 0Q4.2 -2.5 9.3 -2.0L9.3 2.0Q4.2 2.5 0 0Z" fill="#982e74" transform="rotate(312)"/><circle r="3.5" fill="#722257" opacity="0.6"/><circle r="1.5" fill="#8a8a40" opacity="0.8"/></g><g transform="translate(227 117) rotate(24)" opacity="1.0" filter="url(#b05)"><path d="M0 0Q4.1 -2.5 9.1 -1.9L9.1 1.9Q4.1 2.5 0 0Z" fill="#c4a8d4" transform="rotate(6)"/><path d="M0 0Q3.7 -2.3 8.2 -1.7L8.2 1.7Q3.7 2.3 0 0Z" fill="#c4a8d4" transform="rotate(44)"/><path d="M0 0Q4.3 -2.6 9.5 -2.0L9.5 2.0Q4.3 2.6 0 0Z" fill="#c4a8d4" transform="rotate(86)"/><path d="M0 0Q3.7 -2.2 8.2 -1.7L8.2 1.7Q3.7 2.2 0 0Z" fill="#c4a8d4" transform="rotate(130)"/><path d="M0 0Q4.1 -2.5 9.0 -1.9L9.0 1.9Q4.1 2.5 0 0Z" fill="#c4a8d4" transform="rotate(176)"/><path d="M0 0Q4.2 -2.5 9.2 -1.9L9.2 1.9Q4.2 2.5 0 0Z" fill="#c4a8d4" transform="rotate(229)"/><path d="M0 0Q3.7 -2.2 8.1 -1.7L8.1 1.7Q3.7 2.2 0 0Z" fill="#c4a8d4" transform="rotate(274)"/><path d="M0 0Q4.3 -2.6 9.5 -2.0L9.5 2.0Q4.3 2.6 0 0Z" fill="#c4a8d4" transform="rotate(309)"/><circle r="3.5" fill="#937e9f" opacity="0.6"/><circle r="1.5" fill="#8a8a40" opacity="0.8"/></g><g transform="translate(185 118) rotate(15)" opacity="1.0" filter="url(#b05)"><path d="M0 0Q3.1 -1.9 7.0 -1.5L7.0 1.5Q3.1 1.9 0 0Z" fill="#982e74" transform="rotate(3)"/><path d="M0 0Q3.1 -1.9 6.8 -1.4L6.8 1.4Q3.1 1.9 0 0Z" fill="#982e74" transform="rotate(41)"/><path d="M0 0Q3.5 -2.1 7.8 -1.6L7.8 1.6Q3.5 2.1 0 0Z" fill="#982e74" transform="rotate(85)"/><path d="M0 0Q3.1 -1.9 7.0 -1.5L7.0 1.5Q3.1 1.9 0 0Z" fill="#982e74" transform="rotate(136)"/><path d="M0 0Q3.2 -1.9 7.0 -1.5L7.0 1.5Q3.2 1.9 0 0Z" fill="#982e74" transform="rotate(179)"/><path d="M0 0Q3.5 -2.1 7.8 -1.6L7.8 1.6Q3.5 2.1 0 0Z" fill="#982e74" transform="rotate(220)"/><path d="M0 0Q3.6 -2.2 7.9 -1.7L7.9 1.7Q3.6 2.2 0 0Z" fill="#982e74" transform="rotate(271)"/><path d="M0 0Q3.3 -2.0 7.4 -1.6L7.4 1.6Q3.3 2.0 0 0Z" fill="#982e74" transform="rotate(314)"/><circle r="2.8" fill="#722257" opacity="0.6"/><circle r="1.2" fill="#8a8a40" opacity="0.8"/></g><g transform="translate(212 127) rotate(11)" opacity="1.0" filter="url(#b05)"><path d="M0 0Q4.4 -2.7 9.9 -2.1L9.9 2.1Q4.4 2.7 0 0Z" fill="#982e74" transform="rotate(-5)"/><path d="M0 0Q3.9 -2.4 8.6 -1.8L8.6 1.8Q3.9 2.4 0 0Z" fill="#982e74" transform="rotate(49)"/><path d="M0 0Q4.3 -2.6 9.6 -2.0L9.6 2.0Q4.3 2.6 0 0Z" fill="#982e74" transform="rotate(95)"/><path d="M0 0Q4.1 -2.5 9.2 -1.9L9.2 1.9Q4.1 2.5 0 0Z" fill="#982e74" transform="rotate(133)"/><path d="M0 0Q4.0 -2.5 9.0 -1.9L9.0 1.9Q4.0 2.5 0 0Z" fill="#982e74" transform="rotate(186)"/><path d="M0 0Q3.8 -2.3 8.5 -1.8L8.5 1.8Q3.8 2.3 0 0Z" fill="#982e74" transform="rotate(230)"/><path d="M0 0Q4.2 -2.6 9.4 -2.0L9.4 2.0Q4.2 2.6 0 0Z" fill="#982e74" transform="rotate(269)"/><path d="M0 0Q3.9 -2.4 8.6 -1.8L8.6 1.8Q3.9 2.4 0 0Z" fill="#982e74" transform="rotate(312)"/><circle r="3.5" fill="#722257" opacity="0.6"/><circle r="1.5" fill="#8a8a40" opacity="0.8"/></g><g transform="translate(223 139) rotate(39)" opacity="1.0" filter="url(#b05)"><path d="M0 0Q3.5 -2.1 7.7 -1.6L7.7 1.6Q3.5 2.1 0 0Z" fill="#7a2658" transform="rotate(-0)"/><path d="M0 0Q3.0 -1.8 6.7 -1.4L6.7 1.4Q3.0 1.8 0 0Z" fill="#7a2658" transform="rotate(42)"/><path d="M0 0Q3.0 -1.8 6.7 -1.4L6.7 1.4Q3.0 1.8 0 0Z" fill="#7a2658" transform="rotate(88)"/><path d="M0 0Q3.1 -1.9 6.9 -1.4L6.9 1.4Q3.1 1.9 0 0Z" fill="#7a2658" transform="rotate(141)"/><path d="M0 0Q3.0 -1.8 6.6 -1.4L6.6 1.4Q3.0 1.8 0 0Z" fill="#7a2658" transform="rotate(181)"/><path d="M0 0Q3.2 -1.9 7.0 -1.5L7.0 1.5Q3.2 1.9 0 0Z" fill="#7a2658" transform="rotate(225)"/><path d="M0 0Q2.9 -1.8 6.5 -1.4L6.5 1.4Q2.9 1.8 0 0Z" fill="#7a2658" transform="rotate(269)"/><path d="M0 0Q3.5 -2.1 7.7 -1.6L7.7 1.6Q3.5 2.1 0 0Z" fill="#7a2658" transform="rotate(310)"/><circle r="2.8" fill="#5b1c42" opacity="0.6"/><circle r="1.2" fill="#8a8a40" opacity="0.8"/></g><g transform="translate(201 147) rotate(16)" opacity="1.0" filter="url(#b05)"><path d="M0 0Q4.1 -2.5 9.2 -1.9L9.2 1.9Q4.1 2.5 0 0Z" fill="#7a2658" transform="rotate(-3)"/><path d="M0 0Q4.2 -2.5 9.3 -2.0L9.3 2.0Q4.2 2.5 0 0Z" fill="#7a2658" transform="rotate(42)"/><path d="M0 0Q4.6 -2.8 10.3 -2.2L10.3 2.2Q4.6 2.8 0 0Z" fill="#7a2658" transform="rotate(84)"/><path d="M0 0Q4.1 -2.5 9.1 -1.9L9.1 1.9Q4.1 2.5 0 0Z" fill="#7a2658" transform="rotate(133)"/><path d="M0 0Q4.1 -2.5 9.0 -1.9L9.0 1.9Q4.1 2.5 0 0Z" fill="#7a2658" transform="rotate(182)"/><path d="M0 0Q4.8 -2.9 10.6 -2.2L10.6 2.2Q4.8 2.9 0 0Z" fill="#7a2658" transform="rotate(222)"/><path d="M0 0Q4.4 -2.7 9.8 -2.1L9.8 2.1Q4.4 2.7 0 0Z" fill="#7a2658" transform="rotate(266)"/><path d="M0 0Q4.8 -2.9 10.6 -2.2L10.6 2.2Q4.8 2.9 0 0Z" fill="#7a2658" transform="rotate(319)"/><circle r="3.8" fill="#5b1c42" opacity="0.6"/><circle r="1.6" fill="#8a8a40" opacity="0.8"/></g><g transform="translate(256 141) rotate(7)" opacity="1.0" filter="url(#b05)"><path d="M0 0Q5.5 -3.4 12.3 -2.6L12.3 2.6Q5.5 3.4 0 0Z" fill="#982e74" transform="rotate(-2)"/><path d="M0 0Q5.8 -3.5 12.9 -2.7L12.9 2.7Q5.8 3.5 0 0Z" fill="#982e74" transform="rotate(44)"/><path d="M0 0Q5.8 -3.5 12.9 -2.7L12.9 2.7Q5.8 3.5 0 0Z" fill="#982e74" transform="rotate(86)"/><path d="M0 0Q4.9 -3.0 11.0 -2.3L11.0 2.3Q4.9 3.0 0 0Z" fill="#982e74" transform="rotate(135)"/><path d="M0 0Q4.8 -2.9 10.7 -2.3L10.7 2.3Q4.8 2.9 0 0Z" fill="#982e74" transform="rotate(179)"/><path d="M0 0Q5.0 -3.0 11.1 -2.3L11.1 2.3Q5.0 3.0 0 0Z" fill="#982e74" transform="rotate(227)"/><path d="M0 0Q5.4 -3.3 11.9 -2.5L11.9 2.5Q5.4 3.3 0 0Z" fill="#982e74" transform="rotate(275)"/><path d="M0 0Q5.0 -3.0 11.0 -2.3L11.0 2.3Q5.0 3.0 0 0Z" fill="#982e74" transform="rotate(313)"/><circle r="4.5" fill="#722257" opacity="0.6"/><circle r="1.9" fill="#8a8a40" opacity="0.8"/></g><g transform="translate(282 143) rotate(27)" opacity="1.0" filter="url(#b05)"><path d="M0 0Q3.9 -2.4 8.8 -1.8L8.8 1.8Q3.9 2.4 0 0Z" fill="#dde0ea" transform="rotate(-3)"/><path d="M0 0Q3.7 -2.2 8.1 -1.7L8.1 1.7Q3.7 2.2 0 0Z" fill="#dde0ea" transform="rotate(40)"/><path d="M0 0Q3.5 -2.1 7.7 -1.6L7.7 1.6Q3.5 2.1 0 0Z" fill="#dde0ea" transform="rotate(91)"/><path d="M0 0Q3.6 -2.2 7.9 -1.7L7.9 1.7Q3.6 2.2 0 0Z" fill="#dde0ea" transform="rotate(138)"/><path d="M0 0Q3.7 -2.2 8.2 -1.7L8.2 1.7Q3.7 2.2 0 0Z" fill="#dde0ea" transform="rotate(182)"/><path d="M0 0Q3.6 -2.2 7.9 -1.7L7.9 1.7Q3.6 2.2 0 0Z" fill="#dde0ea" transform="rotate(223)"/><path d="M0 0Q3.4 -2.1 7.5 -1.6L7.5 1.6Q3.4 2.1 0 0Z" fill="#dde0ea" transform="rotate(265)"/><path d="M0 0Q3.5 -2.1 7.8 -1.6L7.8 1.6Q3.5 2.1 0 0Z" fill="#dde0ea" transform="rotate(319)"/><circle r="3.1" fill="#a5a8af" opacity="0.6"/><circle r="1.3" fill="#8a8a40" opacity="0.8"/></g><g transform="translate(329 74) rotate(30)" opacity="1.0" filter="url(#b05)"><path d="M0 0Q3.7 -2.2 8.2 -1.7L8.2 1.7Q3.7 2.2 0 0Z" fill="#c4a8d4" transform="rotate(-5)"/><path d="M0 0Q3.6 -2.2 8.1 -1.7L8.1 1.7Q3.6 2.2 0 0Z" fill="#c4a8d4" transform="rotate(43)"/><path d="M0 0Q3.3 -2.0 7.3 -1.5L7.3 1.5Q3.3 2.0 0 0Z" fill="#c4a8d4" transform="rotate(88)"/><path d="M0 0Q3.4 -2.1 7.6 -1.6L7.6 1.6Q3.4 2.1 0 0Z" fill="#c4a8d4" transform="rotate(133)"/><path d="M0 0Q3.8 -2.3 8.5 -1.8L8.5 1.8Q3.8 2.3 0 0Z" fill="#c4a8d4" transform="rotate(176)"/><path d="M0 0Q3.6 -2.2 7.9 -1.7L7.9 1.7Q3.6 2.2 0 0Z" fill="#c4a8d4" transform="rotate(222)"/><path d="M0 0Q3.9 -2.3 8.6 -1.8L8.6 1.8Q3.9 2.3 0 0Z" fill="#c4a8d4" transform="rotate(275)"/><path d="M0 0Q3.9 -2.4 8.8 -1.8L8.8 1.8Q3.9 2.4 0 0Z" fill="#c4a8d4" transform="rotate(320)"/><circle r="3.1" fill="#937e9f" opacity="0.6"/><circle r="1.3" fill="#8a8a40" opacity="0.8"/></g><g transform="translate(362 60) rotate(6)" opacity="1.0" filter="url(#b05)"><path d="M0 0Q2.9 -1.8 6.4 -1.4L6.4 1.4Q2.9 1.8 0 0Z" fill="#982e74" transform="rotate(-3)"/><path d="M0 0Q3.4 -2.0 7.5 -1.6L7.5 1.6Q3.4 2.0 0 0Z" fill="#982e74" transform="rotate(47)"/><path d="M0 0Q3.2 -1.9 7.1 -1.5L7.1 1.5Q3.2 1.9 0 0Z" fill="#982e74" transform="rotate(88)"/><path d="M0 0Q3.4 -2.1 7.5 -1.6L7.5 1.6Q3.4 2.1 0 0Z" fill="#982e74" transform="rotate(137)"/><path d="M0 0Q3.5 -2.1 7.8 -1.6L7.8 1.6Q3.5 2.1 0 0Z" fill="#982e74" transform="rotate(177)"/><path d="M0 0Q3.3 -2.0 7.4 -1.6L7.4 1.6Q3.3 2.0 0 0Z" fill="#982e74" transform="rotate(223)"/><path d="M0 0Q3.0 -1.8 6.6 -1.4L6.6 1.4Q3.0 1.8 0 0Z" fill="#982e74" transform="rotate(266)"/><path d="M0 0Q3.4 -2.1 7.6 -1.6L7.6 1.6Q3.4 2.1 0 0Z" fill="#982e74" transform="rotate(320)"/><circle r="2.8" fill="#722257" opacity="0.6"/><circle r="1.2" fill="#8a8a40" opacity="0.8"/></g><g transform="translate(362 77) rotate(32)" opacity="1.0" filter="url(#b05)"><path d="M0 0Q2.9 -1.8 6.5 -1.4L6.5 1.4Q2.9 1.8 0 0Z" fill="#982e74" transform="rotate(-6)"/><path d="M0 0Q3.0 -1.8 6.7 -1.4L6.7 1.4Q3.0 1.8 0 0Z" fill="#982e74" transform="rotate(41)"/><path d="M0 0Q3.2 -1.9 7.0 -1.5L7.0 1.5Q3.2 1.9 0 0Z" fill="#982e74" transform="rotate(88)"/><path d="M0 0Q3.1 -1.9 6.9 -1.4L6.9 1.4Q3.1 1.9 0 0Z" fill="#982e74" transform="rotate(129)"/><path d="M0 0Q3.0 -1.8 6.7 -1.4L6.7 1.4Q3.0 1.8 0 0Z" fill="#982e74" transform="rotate(182)"/><path d="M0 0Q3.3 -2.0 7.3 -1.5L7.3 1.5Q3.3 2.0 0 0Z" fill="#982e74" transform="rotate(229)"/><path d="M0 0Q3.1 -1.9 6.8 -1.4L6.8 1.4Q3.1 1.9 0 0Z" fill="#982e74" transform="rotate(273)"/><path d="M0 0Q3.4 -2.0 7.5 -1.6L7.5 1.6Q3.4 2.0 0 0Z" fill="#982e74" transform="rotate(314)"/><circle r="2.8" fill="#722257" opacity="0.6"/><circle r="1.2" fill="#8a8a40" opacity="0.8"/></g><g transform="translate(353 143) rotate(16)" opacity="1.0" filter="url(#b05)"><path d="M0 0Q3.5 -2.1 7.7 -1.6L7.7 1.6Q3.5 2.1 0 0Z" fill="#c4a8d4" transform="rotate(-6)"/><path d="M0 0Q3.1 -1.9 6.9 -1.4L6.9 1.4Q3.1 1.9 0 0Z" fill="#c4a8d4" transform="rotate(48)"/><path d="M0 0Q3.5 -2.1 7.8 -1.6L7.8 1.6Q3.5 2.1 0 0Z" fill="#c4a8d4" transform="rotate(85)"/><path d="M0 0Q2.9 -1.8 6.5 -1.4L6.5 1.4Q2.9 1.8 0 0Z" fill="#c4a8d4" transform="rotate(136)"/><path d="M0 0Q3.0 -1.8 6.6 -1.4L6.6 1.4Q3.0 1.8 0 0Z" fill="#c4a8d4" transform="rotate(177)"/><path d="M0 0Q3.0 -1.8 6.7 -1.4L6.7 1.4Q3.0 1.8 0 0Z" fill="#c4a8d4" transform="rotate(228)"/><path d="M0 0Q3.4 -2.1 7.6 -1.6L7.6 1.6Q3.4 2.1 0 0Z" fill="#c4a8d4" transform="rotate(275)"/><path d="M0 0Q3.4 -2.1 7.5 -1.6L7.5 1.6Q3.4 2.1 0 0Z" fill="#c4a8d4" transform="rotate(310)"/><circle r="2.8" fill="#937e9f" opacity="0.6"/><circle r="1.2" fill="#8a8a40" opacity="0.8"/></g><g transform="translate(68 145) rotate(18)" opacity="1.0" filter="url(#b05)"><path d="M0 0Q3.0 -1.8 6.8 -1.4L6.8 1.4Q3.0 1.8 0 0Z" fill="#7a2658" transform="rotate(3)"/><path d="M0 0Q2.6 -1.6 5.7 -1.2L5.7 1.2Q2.6 1.6 0 0Z" fill="#7a2658" transform="rotate(42)"/><path d="M0 0Q2.8 -1.7 6.2 -1.3L6.2 1.3Q2.8 1.7 0 0Z" fill="#7a2658" transform="rotate(95)"/><path d="M0 0Q3.0 -1.8 6.6 -1.4L6.6 1.4Q3.0 1.8 0 0Z" fill="#7a2658" transform="rotate(140)"/><path d="M0 0Q3.0 -1.8 6.8 -1.4L6.8 1.4Q3.0 1.8 0 0Z" fill="#7a2658" transform="rotate(183)"/><path d="M0 0Q2.8 -1.7 6.2 -1.3L6.2 1.3Q2.8 1.7 0 0Z" fill="#7a2658" transform="rotate(227)"/><path d="M0 0Q3.0 -1.8 6.6 -1.4L6.6 1.4Q3.0 1.8 0 0Z" fill="#7a2658" transform="rotate(265)"/><path d="M0 0Q2.8 -1.7 6.3 -1.3L6.3 1.3Q2.8 1.7 0 0Z" fill="#7a2658" transform="rotate(314)"/><circle r="2.4" fill="#5b1c42" opacity="0.6"/><circle r="1.1" fill="#8a8a40" opacity="0.8"/></g><g transform="translate(156 143) rotate(42)" opacity="1.0" filter="url(#b05)"><path d="M0 0Q3.0 -1.8 6.7 -1.4L6.7 1.4Q3.0 1.8 0 0Z" fill="#c4a8d4" transform="rotate(-4)"/><path d="M0 0Q3.0 -1.8 6.6 -1.4L6.6 1.4Q3.0 1.8 0 0Z" fill="#c4a8d4" transform="rotate(40)"/><path d="M0 0Q2.7 -1.6 6.0 -1.3L6.0 1.3Q2.7 1.6 0 0Z" fill="#c4a8d4" transform="rotate(94)"/><path d="M0 0Q3.1 -1.9 7.0 -1.5L7.0 1.5Q3.1 1.9 0 0Z" fill="#c4a8d4" transform="rotate(136)"/><path d="M0 0Q2.9 -1.7 6.4 -1.3L6.4 1.3Q2.9 1.7 0 0Z" fill="#c4a8d4" transform="rotate(182)"/><path d="M0 0Q2.6 -1.6 5.7 -1.2L5.7 1.2Q2.6 1.6 0 0Z" fill="#c4a8d4" transform="rotate(222)"/><path d="M0 0Q2.8 -1.7 6.2 -1.3L6.2 1.3Q2.8 1.7 0 0Z" fill="#c4a8d4" transform="rotate(268)"/><path d="M0 0Q2.7 -1.6 6.0 -1.3L6.0 1.3Q2.7 1.6 0 0Z" fill="#c4a8d4" transform="rotate(311)"/><circle r="2.4" fill="#937e9f" opacity="0.6"/><circle r="1.1" fill="#8a8a40" opacity="0.8"/></g><g transform="translate(203 147) rotate(6)" opacity="1.0" filter="url(#b05)"><path d="M0 0Q2.9 -1.8 6.5 -1.4L6.5 1.4Q2.9 1.8 0 0Z" fill="#982e74" transform="rotate(2)"/><path d="M0 0Q2.7 -1.6 5.9 -1.2L5.9 1.2Q2.7 1.6 0 0Z" fill="#982e74" transform="rotate(42)"/><path d="M0 0Q2.8 -1.7 6.2 -1.3L6.2 1.3Q2.8 1.7 0 0Z" fill="#982e74" transform="rotate(90)"/><path d="M0 0Q2.7 -1.7 6.1 -1.3L6.1 1.3Q2.7 1.7 0 0Z" fill="#982e74" transform="rotate(140)"/><path d="M0 0Q3.1 -1.9 6.8 -1.4L6.8 1.4Q3.1 1.9 0 0Z" fill="#982e74" transform="rotate(178)"/><path d="M0 0Q2.9 -1.7 6.4 -1.3L6.4 1.3Q2.9 1.7 0 0Z" fill="#982e74" transform="rotate(221)"/><path d="M0 0Q3.0 -1.8 6.7 -1.4L6.7 1.4Q3.0 1.8 0 0Z" fill="#982e74" transform="rotate(268)"/><path d="M0 0Q3.0 -1.8 6.7 -1.4L6.7 1.4Q3.0 1.8 0 0Z" fill="#982e74" transform="rotate(316)"/><circle r="2.4" fill="#722257" opacity="0.6"/><circle r="1.1" fill="#8a8a40" opacity="0.8"/></g><g transform="translate(173 160) rotate(8)" opacity="1.0" filter="url(#b05)"><path d="M0 0Q2.9 -1.8 6.4 -1.4L6.4 1.4Q2.9 1.8 0 0Z" fill="#7a2658" transform="rotate(2)"/><path d="M0 0Q3.0 -1.8 6.7 -1.4L6.7 1.4Q3.0 1.8 0 0Z" fill="#7a2658" transform="rotate(45)"/><path d="M0 0Q2.6 -1.6 5.8 -1.2L5.8 1.2Q2.6 1.6 0 0Z" fill="#7a2658" transform="rotate(94)"/><path d="M0 0Q2.7 -1.7 6.1 -1.3L6.1 1.3Q2.7 1.7 0 0Z" fill="#7a2658" transform="rotate(132)"/><path d="M0 0Q2.6 -1.6 5.7 -1.2L5.7 1.2Q2.6 1.6 0 0Z" fill="#7a2658" transform="rotate(176)"/><path d="M0 0Q2.6 -1.6 5.9 -1.2L5.9 1.2Q2.6 1.6 0 0Z" fill="#7a2658" transform="rotate(222)"/><path d="M0 0Q2.8 -1.7 6.2 -1.3L6.2 1.3Q2.8 1.7 0 0Z" fill="#7a2658" transform="rotate(272)"/><path d="M0 0Q2.7 -1.7 6.1 -1.3L6.1 1.3Q2.7 1.7 0 0Z" fill="#7a2658" transform="rotate(310)"/><circle r="2.4" fill="#5b1c42" opacity="0.6"/><circle r="1.1" fill="#8a8a40" opacity="0.8"/></g><g transform="translate(207 160) rotate(21)" opacity="1.0" filter="url(#b05)"><path d="M0 0Q2.3 -1.4 5.0 -1.1L5.0 1.1Q2.3 1.4 0 0Z" fill="#c4a8d4" transform="rotate(-2)"/><path d="M0 0Q2.2 -1.3 4.8 -1.0L4.8 1.0Q2.2 1.3 0 0Z" fill="#c4a8d4" transform="rotate(40)"/><path d="M0 0Q2.6 -1.6 5.7 -1.2L5.7 1.2Q2.6 1.6 0 0Z" fill="#c4a8d4" transform="rotate(96)"/><path d="M0 0Q2.5 -1.5 5.7 -1.2L5.7 1.2Q2.5 1.5 0 0Z" fill="#c4a8d4" transform="rotate(130)"/><path d="M0 0Q2.5 -1.5 5.5 -1.2L5.5 1.2Q2.5 1.5 0 0Z" fill="#c4a8d4" transform="rotate(186)"/><path d="M0 0Q2.4 -1.5 5.4 -1.1L5.4 1.1Q2.4 1.5 0 0Z" fill="#c4a8d4" transform="rotate(220)"/><path d="M0 0Q2.3 -1.4 5.0 -1.1L5.0 1.1Q2.3 1.4 0 0Z" fill="#c4a8d4" transform="rotate(269)"/><path d="M0 0Q2.2 -1.3 4.8 -1.0L4.8 1.0Q2.2 1.3 0 0Z" fill="#c4a8d4" transform="rotate(316)"/><circle r="2.1" fill="#937e9f" opacity="0.6"/><circle r="0.9" fill="#8a8a40" opacity="0.8"/></g><g transform="translate(258 143) rotate(41)" opacity="1.0" filter="url(#b05)"><path d="M0 0Q2.9 -1.8 6.5 -1.4L6.5 1.4Q2.9 1.8 0 0Z" fill="#982e74" transform="rotate(2)"/><path d="M0 0Q2.9 -1.8 6.5 -1.4L6.5 1.4Q2.9 1.8 0 0Z" fill="#982e74" transform="rotate(50)"/><path d="M0 0Q2.7 -1.6 5.9 -1.2L5.9 1.2Q2.7 1.6 0 0Z" fill="#982e74" transform="rotate(87)"/><path d="M0 0Q2.5 -1.5 5.6 -1.2L5.6 1.2Q2.5 1.5 0 0Z" fill="#982e74" transform="rotate(131)"/><path d="M0 0Q3.0 -1.8 6.8 -1.4L6.8 1.4Q3.0 1.8 0 0Z" fill="#982e74" transform="rotate(183)"/><path d="M0 0Q2.6 -1.6 5.9 -1.2L5.9 1.2Q2.6 1.6 0 0Z" fill="#982e74" transform="rotate(223)"/><path d="M0 0Q3.1 -1.9 6.8 -1.4L6.8 1.4Q3.1 1.9 0 0Z" fill="#982e74" transform="rotate(272)"/><path d="M0 0Q2.6 -1.6 5.8 -1.2L5.8 1.2Q2.6 1.6 0 0Z" fill="#982e74" transform="rotate(320)"/><circle r="2.4" fill="#722257" opacity="0.6"/><circle r="1.1" fill="#8a8a40" opacity="0.8"/></g><g transform="translate(291 179) rotate(35)" opacity="1.0" filter="url(#b05)"><path d="M0 0Q4.3 -2.6 9.5 -2.0L9.5 2.0Q4.3 2.6 0 0Z" fill="#7a2658" transform="rotate(4)"/><path d="M0 0Q3.8 -2.3 8.4 -1.8L8.4 1.8Q3.8 2.3 0 0Z" fill="#7a2658" transform="rotate(43)"/><path d="M0 0Q3.9 -2.4 8.6 -1.8L8.6 1.8Q3.9 2.4 0 0Z" fill="#7a2658" transform="rotate(94)"/><path d="M0 0Q4.1 -2.5 9.1 -1.9L9.1 1.9Q4.1 2.5 0 0Z" fill="#7a2658" transform="rotate(133)"/><path d="M0 0Q4.3 -2.6 9.7 -2.0L9.7 2.0Q4.3 2.6 0 0Z" fill="#7a2658" transform="rotate(178)"/><path d="M0 0Q3.6 -2.2 8.1 -1.7L8.1 1.7Q3.6 2.2 0 0Z" fill="#7a2658" transform="rotate(222)"/><path d="M0 0Q4.2 -2.5 9.3 -1.9L9.3 1.9Q4.2 2.5 0 0Z" fill="#7a2658" transform="rotate(271)"/><path d="M0 0Q4.2 -2.6 9.4 -2.0L9.4 2.0Q4.2 2.6 0 0Z" fill="#7a2658" transform="rotate(319)"/><circle r="3.5" fill="#5b1c42" opacity="0.6"/><circle r="1.5" fill="#8a8a40" opacity="0.8"/></g><g transform="translate(346 156) rotate(41)" opacity="1.0" filter="url(#b05)"><path d="M0 0Q2.8 -1.7 6.3 -1.3L6.3 1.3Q2.8 1.7 0 0Z" fill="#c4a8d4" transform="rotate(5)"/><path d="M0 0Q2.6 -1.6 5.8 -1.2L5.8 1.2Q2.6 1.6 0 0Z" fill="#c4a8d4" transform="rotate(45)"/><path d="M0 0Q2.9 -1.8 6.4 -1.3L6.4 1.3Q2.9 1.8 0 0Z" fill="#c4a8d4" transform="rotate(88)"/><path d="M0 0Q3.0 -1.8 6.6 -1.4L6.6 1.4Q3.0 1.8 0 0Z" fill="#c4a8d4" transform="rotate(130)"/><path d="M0 0Q2.8 -1.7 6.2 -1.3L6.2 1.3Q2.8 1.7 0 0Z" fill="#c4a8d4" transform="rotate(176)"/><path d="M0 0Q2.6 -1.6 5.7 -1.2L5.7 1.2Q2.6 1.6 0 0Z" fill="#c4a8d4" transform="rotate(231)"/><path d="M0 0Q2.8 -1.7 6.2 -1.3L6.2 1.3Q2.8 1.7 0 0Z" fill="#c4a8d4" transform="rotate(264)"/><path d="M0 0Q3.0 -1.8 6.6 -1.4L6.6 1.4Q3.0 1.8 0 0Z" fill="#c4a8d4" transform="rotate(311)"/><circle r="2.4" fill="#937e9f" opacity="0.6"/><circle r="1.1" fill="#8a8a40" opacity="0.8"/></g><g transform="translate(243 162) rotate(0)" opacity="1.0" filter="url(#b05)"><path d="M0 0Q1.7 -1.1 3.9 -0.8L3.9 0.8Q1.7 1.1 0 0Z" fill="#7a2658" transform="rotate(4)"/><path d="M0 0Q1.6 -1.0 3.5 -0.7L3.5 0.7Q1.6 1.0 0 0Z" fill="#7a2658" transform="rotate(48)"/><path d="M0 0Q1.7 -1.0 3.7 -0.8L3.7 0.8Q1.7 1.0 0 0Z" fill="#7a2658" transform="rotate(87)"/><path d="M0 0Q1.6 -1.0 3.5 -0.7L3.5 0.7Q1.6 1.0 0 0Z" fill="#7a2658" transform="rotate(135)"/><path d="M0 0Q1.6 -1.0 3.6 -0.7L3.6 0.7Q1.6 1.0 0 0Z" fill="#7a2658" transform="rotate(178)"/><path d="M0 0Q1.7 -1.1 3.9 -0.8L3.9 0.8Q1.7 1.1 0 0Z" fill="#7a2658" transform="rotate(227)"/><path d="M0 0Q1.5 -0.9 3.3 -0.7L3.3 0.7Q1.5 0.9 0 0Z" fill="#7a2658" transform="rotate(275)"/><path d="M0 0Q1.6 -1.0 3.6 -0.7L3.6 0.7Q1.6 1.0 0 0Z" fill="#7a2658" transform="rotate(313)"/><circle r="1.4" fill="#5b1c42" opacity="0.6"/><circle r="0.6" fill="#8a8a40" opacity="0.8"/></g><g filter="url(#b05)"><path d="M289 27 Q291 37 300 38 Q310 37 312 27 Q306 32 300 31 Q294 32 289 27Z" fill="#a03088"/><path d="M289 27 Q292 21 296 24 Q300 20 304 24 Q309 21 312 27 Q306 33 300 32 Q294 33 289 27Z" fill="#c050a8"/></g><circle cx="194" cy="46" r="2" fill="#7ab070"/><circle cx="346" cy="42" r="2" fill="#7ab070"/><circle cx="170" cy="100" r="2" fill="#7ab070"/><circle cx="190" cy="95" r="2" fill="#7ab070"/><circle cx="205" cy="112" r="2" fill="#7ab070"/><circle cx="240" cy="130" r="2" fill="#7ab070"/><circle cx="120" cy="150" r="2" fill="#7ab070"/><circle cx="180" cy="160" r="2" fill="#7ab070"/><circle cx="330" cy="110" r="2" fill="#7ab070"/><circle cx="300" cy="120" r="2" fill="#7ab070"/></symbol></defs></svg>
<svg style="left:481px;top:61px" width="365" height="205"><use href="#cos" width="365" height="205"/></svg>
<!-- title -->
<svg style="left:0;top:0" width="20" height="20" viewBox="0 0 20 20">
 <defs><linearGradient id="lg" x1="0" y1="0" x2="1" y2="1"><stop offset="0" stop-color="#ff7a70"/><stop offset="0.6" stop-color="#f04060"/><stop offset="1" stop-color="#e0305a"/></linearGradient></defs>
 <path d="M5.2 4.6L15 9.6L5.2 14.8Z" fill="url(#lg)" stroke="url(#lg)" stroke-width="3.2" stroke-linejoin="round"/>
 <path d="M7 13.2V6.2" stroke="#fff" stroke-width="1.7"/><path d="M7.8 6.8L10.2 10.6L12.6 7.8V12.4" stroke="#ffd0d8" stroke-width="1.1" fill="none"/>
</svg>
<div class="t" style="left:20px;top:5.8px;font-size:9.5px;font-weight:bold;color:#fff">MiniTool MovieMaker 2.4</div>
<!-- window controls -->
<div class="a" style="left:809px;top:9px;width:8px;height:1px;background:#d0d0d4"></div>
<svg style="left:829px;top:6px" width="8" height="8" viewBox="0 0 8 8" class="ic"><rect x="0.5" y="2.5" width="5" height="5"/><path d="M2.5 2.5V0.5H7.5V5.5H5.5"/></svg>
<svg style="left:851px;top:6px" width="8" height="8" viewBox="0 0 8 8" class="ic"><path d="M0.5 0.5L7.5 7.5M7.5 0.5L0.5 7.5"/></svg>

<!-- toolbar items -->
<svg style="left:34px;top:27px" width="12" height="11" viewBox="0 0 12 11"><path d="M0.5 0.5H4.5L5.5 2H11.5V10.5H0.5Z M0.5 3.5H11.5" fill="none" stroke="#3d8ad0" stroke-width="1"/></svg>
<div class="t tb" style="left:29.5px;top:42px;color:#3d8fd6">Media</div>
<svg style="left:102px;top:27px" width="13" height="11" viewBox="0 0 13 11" class="ic"><path d="M1.2 7.8Q1 3 7 1.6M5.2 0.4L7.4 1.5L6 3.4M11.6 3Q11.8 7.8 5.8 9.3M7.6 10.6L5.4 9.4L6.8 7.5" stroke-width="1.1"/></svg>
<div class="t tb" style="left:92px;top:42px">Transition</div>
<svg style="left:173px;top:27px" width="11" height="11" viewBox="0 0 11 11" class="ic"><rect x="3.5" y="0.5" width="7" height="7" rx="1"/><path d="M3.5 3.5H1.5Q0.5 3.5 0.5 4.5V9.5Q0.5 10.5 1.5 10.5H6.5Q7.5 10.5 7.5 9.5V7.5"/></svg>
<div class="t tb" style="left:167.5px;top:42px">Effect</div>
<div class="t" style="left:241.5px;top:27.5px;font-family:'Liberation Serif';font-size:11.5px;color:#d8d8dc">T</div>
<div class="a" style="left:251px;top:29px;width:1px;height:8px;background:#d0d0d4"></div>
<div class="t tb" style="left:240px;top:42px">Text</div>
<svg style="left:310px;top:27px" width="14" height="12" viewBox="0 0 14 12" class="ic"><g transform="rotate(-35 5.2 7.1)"><path d="M5.2 3.6H10.2A3.5 3.5 0 0 1 10.2 10.6H5.2"/><circle cx="5.2" cy="7.1" r="3.5"/><path d="M7.5 5.3H10.5M7.5 7.1H10.8M7.5 8.9H10.5" stroke-width="0.7"/></g></svg>
<div class="t tb" style="left:305.7px;top:41px;transform:scaleX(0.88);transform-origin:0 0">Motion</div>
<svg style="left:683px;top:27px" width="12" height="12" viewBox="0 0 12 12" class="ic"><path d="M6 0.5L11.5 3.5L6 6.5L0.5 3.5Z M0.5 6L6 9L11.5 6 M0.5 8.5L6 11.5L11.5 8.5"/></svg>
<div class="t tb" style="left:672.5px;top:42px">Template</div>
<svg style="left:752px;top:28px" width="12" height="10" viewBox="0 0 12 10"><path d="M0.5 5.2V8Q0.5 9.5 2 9.5H10Q11.5 9.5 11.5 8V5.2H9.5M2.5 5.2H0.5M6 7.2V0.9M3.8 3L6 0.8L8.2 3" fill="none" stroke="#d0d0d4" stroke-width="0.9"/></svg>
<div class="t tb" style="left:746px;top:42px">Export</div>
<div class="a" style="left:820px;top:32px;width:13px;height:1px;background:#c8c8cc"></div>
<div class="a" style="left:820px;top:37px;width:10px;height:1px;background:#c8c8cc"></div>
<div class="a" style="left:820px;top:42px;width:13px;height:1px;background:#c8c8cc"></div>

<!-- left list -->
<div class="t al" style="left:11px;top:62px;color:#fff">My Album  (8)</div>
<div class="t al" style="left:11px;top:82px">Videos  (3)</div>
<div class="t al" style="left:11px;top:102px">Music  (9)</div>
<div class="t al" style="left:11px;top:122px">Pictures  (5)</div>

<!-- media header -->
<div class="t" style="left:103.5px;top:60.5px;font-size:8px;color:#5d5e66">1</div>
<div class="a" style="left:114px;top:64.5px;width:70px;height:1px;background:#8a8b90"></div>
<div class="a" style="left:181px;top:62px;width:6px;height:6px;border-radius:3px;background:#c4c4c8"></div>
<div class="t" style="left:195.5px;top:60.5px;font-size:8px;color:#5d5e66">100</div>
<svg style="left:347px;top:61px" width="12" height="7" viewBox="0 0 12 7"><rect x="0" y="0" width="9" height="6.5" rx="2" fill="#c8c8cc"/><circle cx="9" cy="4.5" r="2.5" fill="#23242b" stroke="#c8c8cc" stroke-width="0.9"/></svg>
<div class="t" style="left:363px;top:60px;font-size:7.4px;color:#d8d8dc">Download YouTube Videos</div>

<!-- thumbnails labels -->
<div class="a" style="left:108px;top:79px;width:76px;height:45px;border:1px solid #3a3b42;border-radius:2px;background:#1a1b20"></div>
<svg style="left:136px;top:93px" width="20" height="16" viewBox="0 0 20 16"><path d="M1 1H8L9.5 3H19V15H1Z" fill="none" stroke="#a0a1a8" stroke-width="1.6"/><path d="M10 5.5V10.5M7.5 8.5L10 11L12.5 8.5" stroke="#a0a1a8" stroke-width="1.6" fill="none"/></svg>
<div class="t lb" style="left:117px;top:132px">Import Media Files</div>
<div class="t lb" style="left:194px;top:132px">)~]47@ZLTQOV2N5V_'...</div>
<div class="t lb" style="left:280.5px;top:132px">]D]LD]{Q7WO]M$A(23...</div>
<div class="t lb" style="left:110px;top:205px">78@P5'W~KA07SA']2...</div>
<div class="t lb" style="left:196.5px;top:205px;transform:scaleX(0.9);transform-origin:0 0">BEYI[GJXO2TJ6GZ@I5...</div>
<div class="t lb" style="left:282px;top:205px;transform:scaleX(0.92);transform-origin:0 0">IH@3[7SR1DBEFG1N$...</div>
<div class="t lb" style="left:111.5px;top:280px">Thunderstorm - 10745</div>
<div class="t lb" style="left:204px;top:280px">Poppy - 16459 (1)</div>
<div class="t lb" style="left:295px;top:280px">Autumn - 1990</div>

<svg style="left:194px;top:79px" width="76" height="45" viewBox="0 0 76 45"><rect width="76" height="45" rx="2" fill="#050505"/><defs><linearGradient id="fg1" x1="0" y1="0" x2="0" y2="1"><stop offset="0" stop-color="#c0b8a0"/><stop offset="0.35" stop-color="#94ac68"/><stop offset="1" stop-color="#6aa448"/></linearGradient><filter color-interpolation-filters="sRGB" id="fb1"><feGaussianBlur stdDeviation="0.35"/></filter></defs><defs><clipPath id="cs1"><rect x="0" y="10" width="76" height="24.5"/></clipPath></defs><g clip-path="url(#cs1)"><rect x="0" y="10" width="76" height="24.5" fill="url(#fg1)"/><g filter="url(#fb1)"><ellipse cx="34.4" cy="23.7" rx="1.2" ry="0.7" fill="#c890a0" opacity="0.85"/><ellipse cx="65.0" cy="14.7" rx="1.0" ry="0.6" fill="#c890a0" opacity="0.85"/><ellipse cx="60.3" cy="12.3" rx="0.8" ry="0.5" fill="#e8c8c0" opacity="0.85"/><ellipse cx="67.7" cy="25.5" rx="1.8" ry="1.0" fill="#c890a0" opacity="0.85"/><ellipse cx="49.7" cy="25.1" rx="1.7" ry="0.9" fill="#4e8a30" opacity="0.85"/><ellipse cx="4.8" cy="10.9" rx="0.5" ry="0.3" fill="#e0d8c0" opacity="0.85"/><ellipse cx="35.3" cy="20.8" rx="0.9" ry="0.5" fill="#e0d8c0" opacity="0.85"/><ellipse cx="22.4" cy="10.1" rx="0.6" ry="0.3" fill="#5a9a38" opacity="0.85"/><ellipse cx="75.8" cy="34.4" rx="1.3" ry="0.8" fill="#b87890" opacity="0.85"/><ellipse cx="57.6" cy="22.6" rx="1.5" ry="0.8" fill="#5a9a38" opacity="0.85"/><ellipse cx="30.4" cy="30.7" rx="2.0" ry="1.1" fill="#e8c8c0" opacity="0.85"/><ellipse cx="0.0" cy="15.1" rx="0.8" ry="0.5" fill="#c890a0" opacity="0.85"/><ellipse cx="53.9" cy="20.3" rx="1.4" ry="0.8" fill="#d8a0a8" opacity="0.85"/><ellipse cx="20.5" cy="12.1" rx="1.0" ry="0.6" fill="#c890a0" opacity="0.85"/><ellipse cx="9.0" cy="16.0" rx="0.9" ry="0.5" fill="#4e8a30" opacity="0.85"/><ellipse cx="37.0" cy="26.7" rx="1.0" ry="0.6" fill="#5a9a38" opacity="0.85"/><ellipse cx="55.6" cy="13.2" rx="0.8" ry="0.4" fill="#e8c8c0" opacity="0.85"/><ellipse cx="75.2" cy="10.0" rx="0.8" ry="0.4" fill="#d0b0b8" opacity="0.85"/><ellipse cx="75.8" cy="10.5" rx="0.8" ry="0.5" fill="#5a9a38" opacity="0.85"/><ellipse cx="7.6" cy="34.2" rx="1.0" ry="0.6" fill="#6aa040" opacity="0.85"/><ellipse cx="46.4" cy="30.3" rx="1.0" ry="0.6" fill="#e8c8c0" opacity="0.85"/><ellipse cx="44.3" cy="16.0" rx="1.0" ry="0.6" fill="#f0e4dc" opacity="0.85"/><ellipse cx="9.7" cy="24.4" rx="1.7" ry="0.9" fill="#d8a0a8" opacity="0.85"/><ellipse cx="13.9" cy="13.8" rx="0.9" ry="0.5" fill="#d0b0b8" opacity="0.85"/><ellipse cx="55.1" cy="13.9" rx="0.6" ry="0.4" fill="#e0d8c0" opacity="0.85"/><ellipse cx="72.2" cy="31.6" rx="1.0" ry="0.6" fill="#c890a0" opacity="0.85"/><ellipse cx="8.3" cy="22.6" rx="1.4" ry="0.8" fill="#5a9a38" opacity="0.85"/><ellipse cx="19.5" cy="30.2" rx="1.5" ry="0.9" fill="#f0e4dc" opacity="0.85"/><ellipse cx="70.6" cy="33.9" rx="1.7" ry="1.0" fill="#6aa040" opacity="0.85"/><ellipse cx="64.8" cy="25.1" rx="1.6" ry="0.9" fill="#4e8a30" opacity="0.85"/><ellipse cx="5.3" cy="20.1" rx="0.8" ry="0.5" fill="#4e8a30" opacity="0.85"/><ellipse cx="28.0" cy="24.0" rx="0.9" ry="0.5" fill="#6aa040" opacity="0.85"/><ellipse cx="34.2" cy="18.1" rx="1.1" ry="0.6" fill="#e0d8c0" opacity="0.85"/><ellipse cx="10.7" cy="10.9" rx="0.9" ry="0.5" fill="#6aa040" opacity="0.85"/><ellipse cx="73.2" cy="10.5" rx="0.5" ry="0.3" fill="#c890a0" opacity="0.85"/><ellipse cx="23.6" cy="13.3" rx="0.9" ry="0.5" fill="#6aa040" opacity="0.85"/><ellipse cx="56.0" cy="32.1" rx="1.1" ry="0.6" fill="#b87890" opacity="0.85"/><ellipse cx="73.2" cy="18.4" rx="1.4" ry="0.8" fill="#6aa040" opacity="0.85"/><ellipse cx="66.2" cy="20.2" rx="1.1" ry="0.6" fill="#d0b0b8" opacity="0.85"/><ellipse cx="1.1" cy="26.2" rx="1.5" ry="0.8" fill="#e8c8c0" opacity="0.85"/><ellipse cx="6.1" cy="25.7" rx="1.6" ry="0.9" fill="#c890a0" opacity="0.85"/><ellipse cx="29.5" cy="28.0" rx="1.4" ry="0.8" fill="#c890a0" opacity="0.85"/><ellipse cx="41.1" cy="22.7" rx="1.3" ry="0.7" fill="#f0e4dc" opacity="0.85"/><ellipse cx="36.6" cy="15.6" rx="1.1" ry="0.7" fill="#c890a0" opacity="0.85"/><ellipse cx="50.2" cy="21.9" rx="1.0" ry="0.6" fill="#f0e4dc" opacity="0.85"/><ellipse cx="51.5" cy="15.0" rx="1.0" ry="0.6" fill="#6aa040" opacity="0.85"/><ellipse cx="33.6" cy="31.8" rx="1.2" ry="0.7" fill="#b87890" opacity="0.85"/><ellipse cx="48.2" cy="29.7" rx="1.9" ry="1.1" fill="#d8a0a8" opacity="0.85"/><ellipse cx="29.2" cy="24.3" rx="0.9" ry="0.5" fill="#d8a0a8" opacity="0.85"/><ellipse cx="26.7" cy="31.9" rx="2.1" ry="1.2" fill="#4e8a30" opacity="0.85"/><ellipse cx="21.0" cy="14.1" rx="1.2" ry="0.7" fill="#f0e4dc" opacity="0.85"/><ellipse cx="63.1" cy="19.4" rx="0.9" ry="0.5" fill="#b87890" opacity="0.85"/><ellipse cx="63.8" cy="34.1" rx="2.1" ry="1.2" fill="#e8c8c0" opacity="0.85"/><ellipse cx="21.1" cy="24.9" rx="1.4" ry="0.8" fill="#f0e4dc" opacity="0.85"/><ellipse cx="23.5" cy="29.4" rx="1.4" ry="0.8" fill="#4e8a30" opacity="0.85"/><ellipse cx="14.4" cy="28.8" rx="1.8" ry="1.0" fill="#4e8a30" opacity="0.85"/><ellipse cx="74.8" cy="12.8" rx="0.9" ry="0.5" fill="#5a9a38" opacity="0.85"/><ellipse cx="61.4" cy="33.5" rx="2.1" ry="1.2" fill="#d8a0a8" opacity="0.85"/><ellipse cx="19.5" cy="27.5" rx="1.6" ry="0.9" fill="#e0d8c0" opacity="0.85"/><ellipse cx="13.6" cy="16.7" rx="1.3" ry="0.8" fill="#b87890" opacity="0.85"/><ellipse cx="38.0" cy="34.4" rx="2.2" ry="1.3" fill="#5a9a38" opacity="0.85"/><ellipse cx="6.6" cy="32.8" rx="1.5" ry="0.9" fill="#d8a0a8" opacity="0.85"/><ellipse cx="15.0" cy="31.7" rx="1.6" ry="0.9" fill="#5a9a38" opacity="0.85"/><ellipse cx="66.8" cy="29.5" rx="1.3" ry="0.7" fill="#c890a0" opacity="0.85"/><ellipse cx="74.7" cy="12.4" rx="0.9" ry="0.5" fill="#d0b0b8" opacity="0.85"/><ellipse cx="54.5" cy="15.2" rx="1.3" ry="0.7" fill="#e8c8c0" opacity="0.85"/><ellipse cx="40.8" cy="29.4" rx="1.9" ry="1.1" fill="#b87890" opacity="0.85"/><ellipse cx="26.5" cy="12.0" rx="0.7" ry="0.4" fill="#e0d8c0" opacity="0.85"/><ellipse cx="20.9" cy="32.5" rx="1.5" ry="0.9" fill="#4e8a30" opacity="0.85"/><ellipse cx="2.7" cy="23.1" rx="1.2" ry="0.7" fill="#d8a0a8" opacity="0.85"/><ellipse cx="76.0" cy="32.1" rx="1.8" ry="1.0" fill="#b87890" opacity="0.85"/><ellipse cx="71.9" cy="22.1" rx="1.4" ry="0.8" fill="#e8c8c0" opacity="0.85"/><ellipse cx="33.4" cy="23.7" rx="1.4" ry="0.8" fill="#e0d8c0" opacity="0.85"/><ellipse cx="39.7" cy="30.7" rx="1.7" ry="1.0" fill="#f0e4dc" opacity="0.85"/><ellipse cx="72.6" cy="31.3" rx="2.0" ry="1.1" fill="#f0e4dc" opacity="0.85"/><ellipse cx="73.6" cy="22.8" rx="1.1" ry="0.6" fill="#d8a0a8" opacity="0.85"/><ellipse cx="8.7" cy="10.1" rx="1.0" ry="0.6" fill="#e0d8c0" opacity="0.85"/><ellipse cx="39.2" cy="19.8" rx="0.8" ry="0.4" fill="#e0d8c0" opacity="0.85"/><ellipse cx="7.1" cy="14.1" rx="0.8" ry="0.5" fill="#c890a0" opacity="0.85"/><ellipse cx="72.7" cy="32.6" rx="1.6" ry="0.9" fill="#6aa040" opacity="0.85"/><ellipse cx="25.8" cy="32.1" rx="1.6" ry="0.9" fill="#c890a0" opacity="0.85"/><ellipse cx="8.3" cy="20.3" rx="0.8" ry="0.4" fill="#6aa040" opacity="0.85"/><ellipse cx="59.2" cy="10.6" rx="0.4" ry="0.3" fill="#4e8a30" opacity="0.85"/><ellipse cx="21.6" cy="27.7" rx="0.9" ry="0.5" fill="#6aa040" opacity="0.85"/><ellipse cx="55.5" cy="13.0" rx="1.0" ry="0.6" fill="#f0e4dc" opacity="0.85"/><ellipse cx="53.3" cy="31.5" rx="1.4" ry="0.8" fill="#5a9a38" opacity="0.85"/><ellipse cx="40.2" cy="13.9" rx="0.9" ry="0.5" fill="#5a9a38" opacity="0.85"/><ellipse cx="16.6" cy="15.3" rx="1.2" ry="0.7" fill="#e0d8c0" opacity="0.85"/><ellipse cx="17.7" cy="28.1" rx="1.2" ry="0.7" fill="#d8a0a8" opacity="0.85"/><ellipse cx="23.9" cy="32.6" rx="2.1" ry="1.2" fill="#4e8a30" opacity="0.85"/><ellipse cx="10.2" cy="15.9" rx="0.9" ry="0.5" fill="#f0e4dc" opacity="0.85"/><ellipse cx="33.0" cy="33.1" rx="1.1" ry="0.6" fill="#b87890" opacity="0.85"/><ellipse cx="30.6" cy="26.8" rx="1.4" ry="0.8" fill="#4e8a30" opacity="0.85"/><ellipse cx="27.2" cy="30.1" rx="1.5" ry="0.9" fill="#b87890" opacity="0.85"/><ellipse cx="57.6" cy="22.3" rx="1.5" ry="0.9" fill="#d8a0a8" opacity="0.85"/><ellipse cx="36.6" cy="10.6" rx="0.7" ry="0.4" fill="#e0d8c0" opacity="0.85"/><ellipse cx="43.2" cy="13.6" rx="0.6" ry="0.4" fill="#4e8a30" opacity="0.85"/><ellipse cx="12.0" cy="16.9" rx="0.6" ry="0.4" fill="#e0d8c0" opacity="0.85"/><ellipse cx="72.3" cy="21.3" rx="1.1" ry="0.6" fill="#f0e4dc" opacity="0.85"/><ellipse cx="32.4" cy="18.7" rx="0.6" ry="0.4" fill="#6aa040" opacity="0.85"/><ellipse cx="53.3" cy="30.7" rx="1.3" ry="0.8" fill="#6aa040" opacity="0.85"/><ellipse cx="28.1" cy="32.6" rx="1.6" ry="0.9" fill="#e8c8c0" opacity="0.85"/><ellipse cx="1.2" cy="31.9" rx="2.0" ry="1.2" fill="#b87890" opacity="0.85"/><ellipse cx="69.1" cy="33.0" rx="1.6" ry="0.9" fill="#d8a0a8" opacity="0.85"/><ellipse cx="74.7" cy="29.7" rx="1.8" ry="1.0" fill="#4e8a30" opacity="0.85"/><ellipse cx="59.1" cy="30.0" rx="2.0" ry="1.1" fill="#f0e4dc" opacity="0.85"/><ellipse cx="52.8" cy="28.8" rx="1.1" ry="0.6" fill="#c890a0" opacity="0.85"/><ellipse cx="14.0" cy="29.5" rx="0.9" ry="0.5" fill="#e8c8c0" opacity="0.85"/><ellipse cx="27.0" cy="25.6" rx="1.1" ry="0.6" fill="#d8a0a8" opacity="0.85"/><ellipse cx="73.1" cy="17.3" rx="1.1" ry="0.6" fill="#6aa040" opacity="0.85"/><ellipse cx="40.5" cy="19.5" rx="0.8" ry="0.5" fill="#b87890" opacity="0.85"/><ellipse cx="9.1" cy="19.7" rx="1.2" ry="0.7" fill="#e8c8c0" opacity="0.85"/><ellipse cx="56.1" cy="16.3" rx="1.2" ry="0.7" fill="#e8c8c0" opacity="0.85"/><ellipse cx="49.2" cy="10.3" rx="1.0" ry="0.6" fill="#6aa040" opacity="0.85"/><ellipse cx="41.8" cy="22.4" rx="1.5" ry="0.9" fill="#e0d8c0" opacity="0.85"/><ellipse cx="7.6" cy="20.9" rx="1.2" ry="0.7" fill="#e0d8c0" opacity="0.85"/><ellipse cx="57.7" cy="11.1" rx="0.7" ry="0.4" fill="#d8a0a8" opacity="0.85"/><ellipse cx="73.7" cy="31.0" rx="1.0" ry="0.6" fill="#e0d8c0" opacity="0.85"/><ellipse cx="71.8" cy="20.3" rx="0.9" ry="0.5" fill="#e0d8c0" opacity="0.85"/><ellipse cx="40.3" cy="21.8" rx="1.3" ry="0.8" fill="#6aa040" opacity="0.85"/><ellipse cx="56.8" cy="10.7" rx="0.5" ry="0.3" fill="#e0d8c0" opacity="0.85"/><ellipse cx="11.9" cy="28.5" rx="1.7" ry="1.0" fill="#f0e4dc" opacity="0.85"/><ellipse cx="3.8" cy="34.2" rx="2.1" ry="1.2" fill="#e8c8c0" opacity="0.85"/><ellipse cx="17.0" cy="27.6" rx="0.9" ry="0.5" fill="#4e8a30" opacity="0.85"/><ellipse cx="7.5" cy="29.8" rx="2.1" ry="1.2" fill="#d8a0a8" opacity="0.85"/><ellipse cx="62.1" cy="24.8" rx="1.2" ry="0.7" fill="#5a9a38" opacity="0.85"/><ellipse cx="9.0" cy="31.1" rx="1.1" ry="0.6" fill="#d8a0a8" opacity="0.85"/><ellipse cx="33.7" cy="26.4" rx="1.5" ry="0.9" fill="#f0e4dc" opacity="0.85"/><ellipse cx="51.8" cy="18.9" rx="1.5" ry="0.9" fill="#d0b0b8" opacity="0.85"/><ellipse cx="72.4" cy="28.0" rx="1.4" ry="0.8" fill="#4e8a30" opacity="0.85"/><ellipse cx="23.5" cy="22.4" rx="1.0" ry="0.6" fill="#f0e4dc" opacity="0.85"/><ellipse cx="52.1" cy="23.8" rx="1.0" ry="0.6" fill="#b87890" opacity="0.85"/><ellipse cx="18.2" cy="33.3" rx="2.2" ry="1.2" fill="#b87890" opacity="0.85"/><ellipse cx="66.8" cy="11.0" rx="0.6" ry="0.3" fill="#6aa040" opacity="0.85"/><ellipse cx="2.0" cy="10.9" rx="0.5" ry="0.3" fill="#6aa040" opacity="0.85"/><ellipse cx="6.6" cy="26.6" rx="1.9" ry="1.1" fill="#b87890" opacity="0.85"/><ellipse cx="36.8" cy="18.7" rx="1.3" ry="0.7" fill="#c890a0" opacity="0.85"/><ellipse cx="63.7" cy="11.8" rx="1.0" ry="0.6" fill="#5a9a38" opacity="0.85"/><ellipse cx="58.4" cy="20.9" rx="1.4" ry="0.8" fill="#c890a0" opacity="0.85"/><ellipse cx="28.0" cy="26.0" rx="1.1" ry="0.6" fill="#f0e4dc" opacity="0.85"/><ellipse cx="57.7" cy="30.2" rx="1.3" ry="0.8" fill="#5a9a38" opacity="0.85"/><ellipse cx="7.4" cy="31.4" rx="1.5" ry="0.8" fill="#4e8a30" opacity="0.85"/><ellipse cx="43.2" cy="30.0" rx="1.8" ry="1.0" fill="#d0b0b8" opacity="0.85"/><ellipse cx="5.8" cy="15.2" rx="1.1" ry="0.6" fill="#e8c8c0" opacity="0.85"/><ellipse cx="37.6" cy="28.7" rx="1.1" ry="0.6" fill="#d8a0a8" opacity="0.85"/><ellipse cx="50.0" cy="18.0" rx="1.2" ry="0.7" fill="#f0e4dc" opacity="0.85"/><ellipse cx="43.3" cy="32.5" rx="1.5" ry="0.9" fill="#f0e4dc" opacity="0.85"/><ellipse cx="61.0" cy="17.5" rx="1.4" ry="0.8" fill="#c890a0" opacity="0.85"/><ellipse cx="55.5" cy="22.6" rx="0.7" ry="0.4" fill="#6aa040" opacity="0.85"/><ellipse cx="51.5" cy="24.3" rx="1.3" ry="0.8" fill="#b87890" opacity="0.85"/><ellipse cx="60.6" cy="23.2" rx="0.9" ry="0.5" fill="#e0d8c0" opacity="0.85"/><ellipse cx="6.8" cy="21.1" rx="0.7" ry="0.4" fill="#d0b0b8" opacity="0.85"/><ellipse cx="39.2" cy="23.3" rx="1.4" ry="0.8" fill="#e8c8c0" opacity="0.85"/><ellipse cx="61.1" cy="11.6" rx="0.8" ry="0.5" fill="#d0b0b8" opacity="0.85"/><ellipse cx="25.4" cy="16.7" rx="0.6" ry="0.4" fill="#6aa040" opacity="0.85"/><ellipse cx="48.2" cy="13.5" rx="0.8" ry="0.5" fill="#b87890" opacity="0.85"/><ellipse cx="54.1" cy="22.0" rx="1.4" ry="0.8" fill="#f0e4dc" opacity="0.85"/><ellipse cx="30.0" cy="18.3" rx="0.7" ry="0.4" fill="#b87890" opacity="0.85"/><ellipse cx="37.1" cy="29.7" rx="2.0" ry="1.1" fill="#5a9a38" opacity="0.85"/><ellipse cx="31.2" cy="30.2" rx="0.9" ry="0.5" fill="#d0b0b8" opacity="0.85"/><ellipse cx="28.7" cy="12.2" rx="0.9" ry="0.5" fill="#e0d8c0" opacity="0.85"/><ellipse cx="39.8" cy="27.4" rx="1.9" ry="1.1" fill="#c890a0" opacity="0.85"/><ellipse cx="69.6" cy="16.0" rx="0.9" ry="0.5" fill="#5a9a38" opacity="0.85"/><ellipse cx="12.7" cy="15.0" rx="0.7" ry="0.4" fill="#f0e4dc" opacity="0.85"/><ellipse cx="67.3" cy="21.6" rx="1.3" ry="0.7" fill="#f0e4dc" opacity="0.85"/><ellipse cx="59.0" cy="14.4" rx="0.5" ry="0.3" fill="#6aa040" opacity="0.85"/><ellipse cx="36.6" cy="29.6" rx="1.1" ry="0.6" fill="#d8a0a8" opacity="0.85"/><ellipse cx="16.5" cy="15.8" rx="0.9" ry="0.5" fill="#e0d8c0" opacity="0.85"/><ellipse cx="33.6" cy="31.9" rx="2.1" ry="1.2" fill="#d0b0b8" opacity="0.85"/><ellipse cx="47.6" cy="33.1" rx="1.3" ry="0.7" fill="#d0b0b8" opacity="0.85"/><ellipse cx="67.4" cy="32.4" rx="1.9" ry="1.1" fill="#e0d8c0" opacity="0.85"/><ellipse cx="7.0" cy="31.1" rx="2.1" ry="1.2" fill="#d8a0a8" opacity="0.85"/><ellipse cx="60.9" cy="19.4" rx="1.3" ry="0.8" fill="#e0d8c0" opacity="0.85"/><ellipse cx="59.9" cy="11.4" rx="1.0" ry="0.6" fill="#e8c8c0" opacity="0.85"/><ellipse cx="68.8" cy="21.0" rx="1.2" ry="0.7" fill="#6aa040" opacity="0.85"/><ellipse cx="12.0" cy="13.8" rx="1.2" ry="0.7" fill="#f0e4dc" opacity="0.85"/><ellipse cx="61.6" cy="13.2" rx="0.7" ry="0.4" fill="#e0d8c0" opacity="0.85"/><ellipse cx="40.6" cy="13.7" rx="0.6" ry="0.4" fill="#e8c8c0" opacity="0.85"/><ellipse cx="69.6" cy="13.7" rx="0.7" ry="0.4" fill="#6aa040" opacity="0.85"/><ellipse cx="54.5" cy="12.4" rx="0.5" ry="0.3" fill="#c890a0" opacity="0.85"/><ellipse cx="56.9" cy="23.3" rx="1.5" ry="0.9" fill="#e8c8c0" opacity="0.85"/><ellipse cx="31.7" cy="32.5" rx="1.2" ry="0.7" fill="#6aa040" opacity="0.85"/><ellipse cx="41.3" cy="22.9" rx="1.0" ry="0.6" fill="#6aa040" opacity="0.85"/><ellipse cx="30.8" cy="23.6" rx="1.5" ry="0.8" fill="#b87890" opacity="0.85"/><ellipse cx="27.3" cy="26.8" rx="1.6" ry="0.9" fill="#6aa040" opacity="0.85"/><ellipse cx="56.7" cy="29.2" rx="0.9" ry="0.5" fill="#6aa040" opacity="0.85"/><ellipse cx="28.7" cy="27.4" rx="0.9" ry="0.5" fill="#5a9a38" opacity="0.85"/><ellipse cx="58.7" cy="31.0" rx="1.2" ry="0.7" fill="#b87890" opacity="0.85"/><ellipse cx="46.8" cy="17.1" rx="1.2" ry="0.7" fill="#e0d8c0" opacity="0.85"/><ellipse cx="72.5" cy="28.5" rx="1.1" ry="0.7" fill="#e8c8c0" opacity="0.85"/><ellipse cx="15.2" cy="27.9" rx="1.5" ry="0.8" fill="#f0e4dc" opacity="0.85"/><ellipse cx="55.0" cy="18.1" rx="0.7" ry="0.4" fill="#e8c8c0" opacity="0.85"/><ellipse cx="47.3" cy="13.2" rx="0.6" ry="0.4" fill="#d8a0a8" opacity="0.85"/><ellipse cx="30.6" cy="30.5" rx="1.0" ry="0.6" fill="#e8c8c0" opacity="0.85"/><ellipse cx="2.5" cy="34.2" rx="1.1" ry="0.6" fill="#d0b0b8" opacity="0.85"/><ellipse cx="70.0" cy="20.5" rx="0.8" ry="0.5" fill="#b87890" opacity="0.85"/><ellipse cx="11.2" cy="26.9" rx="1.5" ry="0.9" fill="#c890a0" opacity="0.85"/><ellipse cx="55.2" cy="25.0" rx="1.6" ry="0.9" fill="#d0b0b8" opacity="0.85"/><ellipse cx="50.2" cy="24.9" rx="1.0" ry="0.5" fill="#6aa040" opacity="0.85"/><ellipse cx="23.3" cy="20.8" rx="1.1" ry="0.7" fill="#d8a0a8" opacity="0.85"/><ellipse cx="59.9" cy="30.2" rx="1.2" ry="0.7" fill="#d8a0a8" opacity="0.85"/><ellipse cx="41.0" cy="17.3" rx="1.0" ry="0.6" fill="#5a9a38" opacity="0.85"/><ellipse cx="10.8" cy="27.5" rx="2.0" ry="1.1" fill="#e0d8c0" opacity="0.85"/><ellipse cx="53.7" cy="32.9" rx="1.8" ry="1.0" fill="#e8c8c0" opacity="0.85"/><ellipse cx="15.0" cy="12.0" rx="0.7" ry="0.4" fill="#5a9a38" opacity="0.85"/><ellipse cx="25.4" cy="12.2" rx="0.8" ry="0.4" fill="#f0e4dc" opacity="0.85"/><ellipse cx="9.4" cy="33.9" rx="1.7" ry="1.0" fill="#5a9a38" opacity="0.85"/><ellipse cx="42.6" cy="23.7" rx="1.8" ry="1.0" fill="#5a9a38" opacity="0.85"/><ellipse cx="62.1" cy="24.7" rx="1.1" ry="0.6" fill="#4e8a30" opacity="0.85"/><ellipse cx="68.2" cy="15.9" rx="0.7" ry="0.4" fill="#d0b0b8" opacity="0.85"/><ellipse cx="45.4" cy="29.9" rx="1.1" ry="0.6" fill="#c890a0" opacity="0.85"/><ellipse cx="75.0" cy="33.0" rx="1.9" ry="1.1" fill="#f0e4dc" opacity="0.85"/><ellipse cx="64.4" cy="32.2" rx="2.0" ry="1.1" fill="#b87890" opacity="0.85"/><ellipse cx="1.2" cy="14.9" rx="0.9" ry="0.5" fill="#d8a0a8" opacity="0.85"/><ellipse cx="9.0" cy="19.9" rx="0.9" ry="0.5" fill="#d8a0a8" opacity="0.85"/><ellipse cx="43.2" cy="18.1" rx="1.2" ry="0.7" fill="#e8c8c0" opacity="0.85"/><ellipse cx="59.9" cy="19.9" rx="1.1" ry="0.6" fill="#e8c8c0" opacity="0.85"/><ellipse cx="31.3" cy="25.3" rx="1.2" ry="0.7" fill="#d0b0b8" opacity="0.85"/><ellipse cx="21.4" cy="31.8" rx="1.8" ry="1.0" fill="#d0b0b8" opacity="0.85"/><ellipse cx="62.7" cy="12.9" rx="0.7" ry="0.4" fill="#5a9a38" opacity="0.85"/><ellipse cx="39.6" cy="20.3" rx="0.9" ry="0.5" fill="#4e8a30" opacity="0.85"/><ellipse cx="46.8" cy="20.6" rx="1.4" ry="0.8" fill="#f0e4dc" opacity="0.85"/><ellipse cx="23.2" cy="24.5" rx="1.6" ry="0.9" fill="#4e8a30" opacity="0.85"/><ellipse cx="18.4" cy="31.4" rx="1.8" ry="1.0" fill="#c890a0" opacity="0.85"/><ellipse cx="40.0" cy="15.9" rx="1.3" ry="0.7" fill="#c890a0" opacity="0.85"/><ellipse cx="66.9" cy="34.5" rx="1.9" ry="1.1" fill="#d0b0b8" opacity="0.85"/><ellipse cx="65.9" cy="20.3" rx="1.3" ry="0.7" fill="#d8a0a8" opacity="0.85"/><ellipse cx="32.0" cy="13.0" rx="1.0" ry="0.6" fill="#5a9a38" opacity="0.85"/><ellipse cx="9.4" cy="23.2" rx="1.0" ry="0.6" fill="#e8c8c0" opacity="0.85"/><ellipse cx="55.3" cy="10.6" rx="1.0" ry="0.6" fill="#6aa040" opacity="0.85"/><ellipse cx="62.0" cy="19.7" rx="0.9" ry="0.5" fill="#e0d8c0" opacity="0.85"/><ellipse cx="23.3" cy="21.1" rx="1.1" ry="0.7" fill="#f0e4dc" opacity="0.85"/><ellipse cx="71.0" cy="33.9" rx="1.2" ry="0.7" fill="#d8a0a8" opacity="0.85"/><ellipse cx="65.3" cy="27.0" rx="1.8" ry="1.0" fill="#6aa040" opacity="0.85"/><ellipse cx="26.9" cy="21.6" rx="1.6" ry="0.9" fill="#5a9a38" opacity="0.85"/><ellipse cx="15.4" cy="25.5" rx="1.5" ry="0.8" fill="#4e8a30" opacity="0.85"/><ellipse cx="23.3" cy="30.0" rx="1.9" ry="1.1" fill="#f0e4dc" opacity="0.85"/><ellipse cx="54.2" cy="13.3" rx="0.8" ry="0.5" fill="#d0b0b8" opacity="0.85"/><ellipse cx="6.0" cy="15.5" rx="1.1" ry="0.6" fill="#b87890" opacity="0.85"/><ellipse cx="20.4" cy="27.6" rx="1.7" ry="1.0" fill="#f0e4dc" opacity="0.85"/><ellipse cx="28.3" cy="26.2" rx="1.4" ry="0.8" fill="#e0d8c0" opacity="0.85"/><ellipse cx="74.3" cy="31.9" rx="1.3" ry="0.7" fill="#4e8a30" opacity="0.85"/><ellipse cx="48.6" cy="12.2" rx="1.1" ry="0.6" fill="#c890a0" opacity="0.85"/><ellipse cx="5.6" cy="32.2" rx="1.3" ry="0.7" fill="#5a9a38" opacity="0.85"/><ellipse cx="19.1" cy="29.7" rx="2.1" ry="1.2" fill="#6aa040" opacity="0.85"/><ellipse cx="14.4" cy="14.4" rx="0.7" ry="0.4" fill="#e8c8c0" opacity="0.85"/><ellipse cx="68.2" cy="34.2" rx="2.2" ry="1.3" fill="#6aa040" opacity="0.85"/><ellipse cx="44.5" cy="10.1" rx="0.5" ry="0.3" fill="#e8c8c0" opacity="0.85"/><ellipse cx="42.3" cy="25.8" rx="1.3" ry="0.7" fill="#b87890" opacity="0.85"/><ellipse cx="2.4" cy="17.1" rx="1.1" ry="0.7" fill="#b87890" opacity="0.85"/><ellipse cx="39.6" cy="33.3" rx="1.1" ry="0.6" fill="#4e8a30" opacity="0.85"/><ellipse cx="33.1" cy="26.4" rx="1.7" ry="1.0" fill="#f0e4dc" opacity="0.85"/><ellipse cx="60.1" cy="15.8" rx="1.2" ry="0.7" fill="#d8a0a8" opacity="0.85"/><ellipse cx="45.9" cy="16.4" rx="0.6" ry="0.3" fill="#5a9a38" opacity="0.85"/><ellipse cx="34.1" cy="31.6" rx="0.9" ry="0.5" fill="#e0d8c0" opacity="0.85"/><ellipse cx="37.7" cy="20.6" rx="1.5" ry="0.8" fill="#f0e4dc" opacity="0.85"/><ellipse cx="2.4" cy="12.8" rx="0.9" ry="0.5" fill="#5a9a38" opacity="0.85"/><ellipse cx="60.2" cy="15.8" rx="0.9" ry="0.5" fill="#6aa040" opacity="0.85"/><ellipse cx="52.9" cy="30.1" rx="1.2" ry="0.7" fill="#d0b0b8" opacity="0.85"/><ellipse cx="44.7" cy="12.2" rx="0.7" ry="0.4" fill="#d8a0a8" opacity="0.85"/><ellipse cx="62" cy="31" rx="3.5" ry="1.6" fill="#f0e8e8"/><ellipse cx="62" cy="31" rx="1.5" ry="0.8" fill="#d07080"/></g></g></svg>
<svg style="left:281px;top:79px" width="75" height="45" viewBox="0 0 75 45"><defs><clipPath id="c13"><rect width="75" height="45" rx="2"/></clipPath><filter color-interpolation-filters="sRGB" id="fb13" x="-30%" y="-30%" width="160%" height="160%"><feGaussianBlur stdDeviation="0.6"/></filter><filter color-interpolation-filters="sRGB" id="fb13b" x="-50%" y="-50%" width="200%" height="200%"><feGaussianBlur stdDeviation="4"/></filter></defs><g clip-path="url(#c13)"><rect width="75" height="45" fill="#27230f"/><g filter="url(#fb13b)"><ellipse cx="14" cy="6" rx="18" ry="10" fill="#5a5232"/><ellipse cx="65" cy="36" rx="15" ry="12" fill="#1e2410"/><ellipse cx="30" cy="42" rx="30" ry="6" fill="#342818"/><ellipse cx="66" cy="4" rx="12" ry="6" fill="#4a4a32"/><ellipse cx="8" cy="30" rx="8" ry="8" fill="#3a3c2a"/></g><g filter="url(#fb13)"><ellipse cx="6" cy="22" rx="7" ry="5" fill="#7a8470" opacity="0.8"/><ellipse cx="20" cy="24" rx="5" ry="3" fill="#a0a890" opacity="0.6"/><path d="M41 24 Q46 22 47 30 Q44 36 40 33Z" fill="#c8c4b0" opacity="0.85"/><path d="M8 15 L20 2 Q25 5 21 14 L13 18Z" fill="#c08838"/><path d="M11 15 L18 6 L19 13Z" fill="#e8c070"/><path d="M12 12L16 8M14 15L19 10M10 16L21 5" stroke="#6a4018" stroke-width="0.45"/><path d="M48 6 L60 0 L56 9Z" fill="#a8b090" opacity="0.6"/><path d="M44 18 L48 40 M58 20 L60 42 M34 30 L30 42" stroke="#141408" stroke-width="1.2"/><ellipse cx="30" cy="23.9" rx="12" ry="9" fill="#b05a14"/><ellipse cx="34.2" cy="22.6" rx="6.6" ry="4.5" fill="#f0962c" stroke="#b05a14" stroke-width="0.5"/><ellipse cx="32.1" cy="25.3" rx="6.6" ry="4.5" fill="#f0962c" stroke="#b05a14" stroke-width="0.5"/><ellipse cx="27.6" cy="25.2" rx="6.6" ry="4.5" fill="#f0962c" stroke="#b05a14" stroke-width="0.5"/><ellipse cx="25.8" cy="22.9" rx="6.6" ry="4.5" fill="#f0962c" stroke="#b05a14" stroke-width="0.5"/><ellipse cx="27.8" cy="20.7" rx="6.6" ry="4.5" fill="#f0962c" stroke="#b05a14" stroke-width="0.5"/><ellipse cx="31.7" cy="20.5" rx="6.6" ry="4.5" fill="#f0962c" stroke="#b05a14" stroke-width="0.5"/><ellipse cx="28.2" cy="19.9" rx="6.0" ry="2.7" fill="#ffc870" opacity="0.8"/><ellipse cx="45" cy="10.8" rx="11" ry="7.5" fill="#a85018"/><ellipse cx="48.8" cy="10.0" rx="6.1" ry="3.8" fill="#ec8c34" stroke="#a85018" stroke-width="0.5"/><ellipse cx="46.6" cy="12.1" rx="6.1" ry="3.8" fill="#ec8c34" stroke="#a85018" stroke-width="0.5"/><ellipse cx="42.7" cy="11.8" rx="6.1" ry="3.8" fill="#ec8c34" stroke="#a85018" stroke-width="0.5"/><ellipse cx="41.3" cy="9.5" rx="6.1" ry="3.8" fill="#ec8c34" stroke="#a85018" stroke-width="0.5"/><ellipse cx="42.5" cy="8.3" rx="6.1" ry="3.8" fill="#ec8c34" stroke="#a85018" stroke-width="0.5"/><ellipse cx="47.4" cy="8.2" rx="6.1" ry="3.8" fill="#ec8c34" stroke="#a85018" stroke-width="0.5"/><ellipse cx="43.4" cy="7.4" rx="5.5" ry="2.2" fill="#ffc070" opacity="0.8"/><ellipse cx="62" cy="14.8" rx="7" ry="8" fill="#a06820"/><ellipse cx="64.4" cy="14.1" rx="3.9" ry="4.0" fill="#e4a434" stroke="#a06820" stroke-width="0.5"/><ellipse cx="63.6" cy="15.8" rx="3.9" ry="4.0" fill="#e4a434" stroke="#a06820" stroke-width="0.5"/><ellipse cx="60.5" cy="15.9" rx="3.9" ry="4.0" fill="#e4a434" stroke="#a06820" stroke-width="0.5"/><ellipse cx="59.6" cy="14.0" rx="3.9" ry="4.0" fill="#e4a434" stroke="#a06820" stroke-width="0.5"/><ellipse cx="61.3" cy="11.7" rx="3.9" ry="4.0" fill="#e4a434" stroke="#a06820" stroke-width="0.5"/><ellipse cx="62.6" cy="11.7" rx="3.9" ry="4.0" fill="#e4a434" stroke="#a06820" stroke-width="0.5"/><ellipse cx="61.0" cy="11.2" rx="3.5" ry="2.4" fill="#f8d070" opacity="0.8"/><ellipse cx="55" cy="26.5" rx="5" ry="5" fill="#8a3a18"/><ellipse cx="56.7" cy="25.9" rx="2.8" ry="2.5" fill="#d27430" stroke="#8a3a18" stroke-width="0.5"/><ellipse cx="55.9" cy="27.3" rx="2.8" ry="2.5" fill="#d27430" stroke="#8a3a18" stroke-width="0.5"/><ellipse cx="54.5" cy="27.4" rx="2.8" ry="2.5" fill="#d27430" stroke="#8a3a18" stroke-width="0.5"/><ellipse cx="53.3" cy="26.0" rx="2.8" ry="2.5" fill="#d27430" stroke="#8a3a18" stroke-width="0.5"/><ellipse cx="54.1" cy="24.7" rx="2.8" ry="2.5" fill="#d27430" stroke="#8a3a18" stroke-width="0.5"/><ellipse cx="56.2" cy="24.9" rx="2.8" ry="2.5" fill="#d27430" stroke="#8a3a18" stroke-width="0.5"/><ellipse cx="54.2" cy="24.2" rx="2.5" ry="1.5" fill="#f0a050" opacity="0.8"/><ellipse cx="26" cy="32" rx="6" ry="2.5" fill="#e89030"/><path d="M37 31 Q42 28 45 35" stroke="#141408" stroke-width="2" fill="none"/><ellipse cx="20" cy="39" rx="8" ry="3" fill="#4a3a28" opacity="0.7"/></g></g></svg>
<svg style="left:108.5px;top:152.5px" width="75" height="45" viewBox="0 0 75 45"><defs><clipPath id="c21"><rect width="75" height="45" rx="2"/></clipPath><radialGradient id="glow" cx="0.38" cy="0.4" r="0.62"><stop offset="0" stop-color="#c4d4c8"/><stop offset="0.45" stop-color="#a4bab2"/><stop offset="0.7" stop-color="#5a6e7a"/><stop offset="0.88" stop-color="#1c2840"/><stop offset="1" stop-color="#0a1230"/></radialGradient><filter color-interpolation-filters="sRGB" id="fb21" x="-20%" y="-20%" width="140%" height="140%"><feGaussianBlur stdDeviation="0.4"/></filter></defs><g clip-path="url(#c21)"><rect width="75" height="45" fill="#0a1230"/><ellipse cx="28" cy="17" rx="44" ry="30" fill="url(#glow)"/><g filter="url(#fb21)" stroke="#1a2230" fill="none" stroke-width="0.7"><path d="M0 5 Q15 8 25 18 T40 24"/><path d="M6 0 Q10 8 20 12"/><path d="M22 0 Q28 10 34 20"/><path d="M38 0 Q44 8 60 18"/><path d="M30 8 Q45 12 58 10"/><path d="M0 14 Q8 15 14 20"/><path d="M50 0 Q48 6 44 12"/><path d="M14 2 Q18 4 22 10"/><path d="M2 22 Q6 20 10 24"/></g><g filter="url(#fb21)"><ellipse cx="60.2" cy="8.0" rx="1.4" ry="1.1" fill="#141c2a" transform="rotate(110 60.2 8.0)"/><ellipse cx="18.3" cy="2.6" rx="1.6" ry="0.8" fill="#141c2a" transform="rotate(15 18.3 2.6)"/><ellipse cx="14.1" cy="7.0" rx="1.7" ry="1.1" fill="#141c2a" transform="rotate(39 14.1 7.0)"/><ellipse cx="9.9" cy="13.8" rx="1.7" ry="0.9" fill="#141c2a" transform="rotate(102 9.9 13.8)"/><ellipse cx="56.5" cy="11.2" rx="1.6" ry="0.6" fill="#141c2a" transform="rotate(155 56.5 11.2)"/><ellipse cx="58.0" cy="2.6" rx="1.1" ry="0.5" fill="#141c2a" transform="rotate(75 58.0 2.6)"/><ellipse cx="15.3" cy="17.8" rx="1.5" ry="0.8" fill="#141c2a" transform="rotate(72 15.3 17.8)"/><ellipse cx="36.8" cy="13.1" rx="1.2" ry="0.8" fill="#141c2a" transform="rotate(113 36.8 13.1)"/><ellipse cx="11.3" cy="11.4" rx="1.3" ry="0.8" fill="#141c2a" transform="rotate(8 11.3 11.4)"/><ellipse cx="17.1" cy="20.8" rx="1.4" ry="0.8" fill="#141c2a" transform="rotate(133 17.1 20.8)"/><ellipse cx="31.8" cy="10.5" rx="1.4" ry="0.6" fill="#141c2a" transform="rotate(19 31.8 10.5)"/><ellipse cx="3.5" cy="18.3" rx="1.5" ry="0.6" fill="#141c2a" transform="rotate(43 3.5 18.3)"/><ellipse cx="52.0" cy="1.6" rx="1.7" ry="1.0" fill="#141c2a" transform="rotate(81 52.0 1.6)"/><ellipse cx="53.0" cy="5.1" rx="1.0" ry="1.0" fill="#141c2a" transform="rotate(120 53.0 5.1)"/><ellipse cx="18.7" cy="13.1" rx="1.2" ry="0.6" fill="#141c2a" transform="rotate(93 18.7 13.1)"/><ellipse cx="7.9" cy="5.0" rx="1.2" ry="0.8" fill="#141c2a" transform="rotate(125 7.9 5.0)"/><ellipse cx="32.1" cy="10.1" rx="1.1" ry="0.8" fill="#141c2a" transform="rotate(68 32.1 10.1)"/><ellipse cx="54.6" cy="10.9" rx="1.3" ry="0.8" fill="#141c2a" transform="rotate(25 54.6 10.9)"/><ellipse cx="32.0" cy="6.6" rx="0.9" ry="0.7" fill="#141c2a" transform="rotate(110 32.0 6.6)"/><ellipse cx="8.7" cy="20.3" rx="1.5" ry="0.8" fill="#141c2a" transform="rotate(2 8.7 20.3)"/><ellipse cx="47.2" cy="11.0" rx="1.4" ry="0.5" fill="#141c2a" transform="rotate(154 47.2 11.0)"/><ellipse cx="34.6" cy="6.3" rx="0.9" ry="1.0" fill="#141c2a" transform="rotate(67 34.6 6.3)"/><ellipse cx="48.6" cy="3.8" rx="1.5" ry="0.6" fill="#141c2a" transform="rotate(89 48.6 3.8)"/><ellipse cx="30.4" cy="17.5" rx="1.1" ry="0.9" fill="#141c2a" transform="rotate(40 30.4 17.5)"/><ellipse cx="57.4" cy="2.5" rx="1.5" ry="0.7" fill="#141c2a" transform="rotate(128 57.4 2.5)"/><ellipse cx="32.3" cy="13.6" rx="1.6" ry="1.0" fill="#141c2a" transform="rotate(86 32.3 13.6)"/><ellipse cx="15.9" cy="19.0" rx="1.1" ry="1.0" fill="#141c2a" transform="rotate(162 15.9 19.0)"/><ellipse cx="7.5" cy="22.0" rx="1.6" ry="0.7" fill="#141c2a" transform="rotate(68 7.5 22.0)"/><ellipse cx="52.5" cy="4.1" rx="1.4" ry="1.0" fill="#141c2a" transform="rotate(13 52.5 4.1)"/><ellipse cx="2.2" cy="8.2" rx="1.1" ry="0.7" fill="#141c2a" transform="rotate(147 2.2 8.2)"/><ellipse cx="55.0" cy="8.4" rx="1.1" ry="0.7" fill="#141c2a" transform="rotate(162 55.0 8.4)"/><ellipse cx="1.9" cy="18.1" rx="1.0" ry="0.5" fill="#141c2a" transform="rotate(9 1.9 18.1)"/><ellipse cx="33.7" cy="11.1" rx="0.9" ry="0.5" fill="#141c2a" transform="rotate(84 33.7 11.1)"/><ellipse cx="27.9" cy="18.8" rx="1.1" ry="1.0" fill="#141c2a" transform="rotate(123 27.9 18.8)"/><ellipse cx="16.9" cy="10.9" rx="1.2" ry="0.5" fill="#141c2a" transform="rotate(109 16.9 10.9)"/><ellipse cx="16.7" cy="5.7" rx="1.0" ry="0.8" fill="#141c2a" transform="rotate(167 16.7 5.7)"/><ellipse cx="60.7" cy="0.0" rx="1.3" ry="1.0" fill="#141c2a" transform="rotate(138 60.7 0.0)"/><ellipse cx="4.9" cy="20.5" rx="1.6" ry="0.9" fill="#141c2a" transform="rotate(143 4.9 20.5)"/><ellipse cx="16.4" cy="2.3" rx="0.8" ry="1.0" fill="#141c2a" transform="rotate(37 16.4 2.3)"/><ellipse cx="24.6" cy="3.2" rx="1.0" ry="0.6" fill="#141c2a" transform="rotate(60 24.6 3.2)"/><ellipse cx="42.7" cy="12.8" rx="1.1" ry="0.7" fill="#141c2a" transform="rotate(66 42.7 12.8)"/><ellipse cx="41.4" cy="8.1" rx="1.4" ry="0.7" fill="#141c2a" transform="rotate(127 41.4 8.1)"/><ellipse cx="56.9" cy="9.3" rx="1.6" ry="1.1" fill="#141c2a" transform="rotate(147 56.9 9.3)"/><ellipse cx="54.9" cy="4.0" rx="1.6" ry="0.8" fill="#141c2a" transform="rotate(122 54.9 4.0)"/><ellipse cx="2.5" cy="15.8" rx="1.2" ry="0.8" fill="#141c2a" transform="rotate(62 2.5 15.8)"/><ellipse cx="24.6" cy="14.9" rx="1.4" ry="0.7" fill="#141c2a" transform="rotate(114 24.6 14.9)"/><ellipse cx="22.8" cy="14.1" rx="1.0" ry="1.0" fill="#141c2a" transform="rotate(37 22.8 14.1)"/><ellipse cx="35.0" cy="2.3" rx="1.7" ry="0.9" fill="#141c2a" transform="rotate(23 35.0 2.3)"/><ellipse cx="45.9" cy="4.1" rx="0.9" ry="0.6" fill="#141c2a" transform="rotate(112 45.9 4.1)"/><ellipse cx="18.1" cy="14.2" rx="1.7" ry="0.8" fill="#141c2a" transform="rotate(125 18.1 14.2)"/><ellipse cx="49.0" cy="13.4" rx="1.0" ry="0.7" fill="#141c2a" transform="rotate(45 49.0 13.4)"/><ellipse cx="41.3" cy="6.3" rx="1.4" ry="0.6" fill="#141c2a" transform="rotate(28 41.3 6.3)"/><ellipse cx="61.8" cy="9.9" rx="1.0" ry="0.7" fill="#141c2a" transform="rotate(97 61.8 9.9)"/><ellipse cx="49.7" cy="5.8" rx="1.6" ry="1.0" fill="#141c2a" transform="rotate(154 49.7 5.8)"/><ellipse cx="10.6" cy="1.6" rx="1.2" ry="1.0" fill="#141c2a" transform="rotate(117 10.6 1.6)"/><ellipse cx="13.9" cy="16.4" rx="1.2" ry="0.6" fill="#141c2a" transform="rotate(104 13.9 16.4)"/><ellipse cx="41.8" cy="3.5" rx="1.1" ry="1.0" fill="#141c2a" transform="rotate(80 41.8 3.5)"/><ellipse cx="51.7" cy="7.7" rx="1.6" ry="1.0" fill="#141c2a" transform="rotate(78 51.7 7.7)"/><ellipse cx="9.4" cy="21.0" rx="1.0" ry="0.8" fill="#141c2a" transform="rotate(49 9.4 21.0)"/><ellipse cx="24.8" cy="6.5" rx="0.9" ry="0.6" fill="#141c2a" transform="rotate(99 24.8 6.5)"/><ellipse cx="34.7" cy="2.7" rx="0.8" ry="1.0" fill="#141c2a" transform="rotate(121 34.7 2.7)"/><ellipse cx="0.2" cy="8.7" rx="0.9" ry="1.0" fill="#141c2a" transform="rotate(178 0.2 8.7)"/><ellipse cx="25.3" cy="0.6" rx="1.1" ry="0.8" fill="#141c2a" transform="rotate(100 25.3 0.6)"/><ellipse cx="13.3" cy="14.1" rx="1.5" ry="0.7" fill="#141c2a" transform="rotate(34 13.3 14.1)"/><ellipse cx="18.0" cy="5.4" rx="1.5" ry="0.8" fill="#141c2a" transform="rotate(169 18.0 5.4)"/><ellipse cx="2.9" cy="21.7" rx="1.7" ry="0.8" fill="#141c2a" transform="rotate(121 2.9 21.7)"/><ellipse cx="16.8" cy="0.5" rx="1.3" ry="0.5" fill="#141c2a" transform="rotate(84 16.8 0.5)"/><ellipse cx="55.0" cy="0.8" rx="1.1" ry="1.0" fill="#141c2a" transform="rotate(48 55.0 0.8)"/><ellipse cx="15.2" cy="20.7" rx="1.2" ry="0.7" fill="#141c2a" transform="rotate(96 15.2 20.7)"/><ellipse cx="41.3" cy="13.0" rx="1.5" ry="1.1" fill="#141c2a" transform="rotate(87 41.3 13.0)"/><ellipse cx="52.1" cy="5.6" rx="1.6" ry="0.9" fill="#141c2a" transform="rotate(2 52.1 5.6)"/><ellipse cx="8.7" cy="7.7" rx="1.5" ry="0.8" fill="#141c2a" transform="rotate(50 8.7 7.7)"/><ellipse cx="61.5" cy="7.2" rx="1.2" ry="0.7" fill="#141c2a" transform="rotate(12 61.5 7.2)"/><ellipse cx="40.5" cy="9.8" rx="1.0" ry="0.6" fill="#141c2a" transform="rotate(32 40.5 9.8)"/><ellipse cx="2.9" cy="3.3" rx="1.1" ry="0.6" fill="#141c2a" transform="rotate(63 2.9 3.3)"/><ellipse cx="9.6" cy="8.8" rx="1.0" ry="0.5" fill="#141c2a" transform="rotate(72 9.6 8.8)"/><ellipse cx="3.2" cy="2.4" rx="1.7" ry="1.0" fill="#141c2a" transform="rotate(137 3.2 2.4)"/><ellipse cx="1.3" cy="4.5" rx="0.9" ry="0.9" fill="#141c2a" transform="rotate(104 1.3 4.5)"/><ellipse cx="19.9" cy="10.1" rx="1.6" ry="0.8" fill="#141c2a" transform="rotate(140 19.9 10.1)"/><ellipse cx="55.0" cy="10.6" rx="0.9" ry="0.7" fill="#141c2a" transform="rotate(166 55.0 10.6)"/><ellipse cx="36" cy="4" rx="4" ry="3" fill="#e8e0b8" opacity="0.7"/><ellipse cx="52" cy="5" rx="5" ry="4" fill="#3a1c22"/><ellipse cx="51" cy="5" rx="2.5" ry="2" fill="#7a3a30"/><ellipse cx="68" cy="6" rx="3.5" ry="3.5" fill="#b84030"/><ellipse cx="0" cy="0" rx="5.5" ry="4" fill="#e8903a" transform="translate(37 28) rotate(10) translate(4.5 0)"/><ellipse cx="0" cy="0" rx="5.5" ry="4" fill="#e8903a" transform="translate(37 28) rotate(82) translate(4.5 0)"/><ellipse cx="0" cy="0" rx="5.5" ry="4" fill="#e8903a" transform="translate(37 28) rotate(154) translate(4.5 0)"/><ellipse cx="0" cy="0" rx="5.5" ry="4" fill="#e8903a" transform="translate(37 28) rotate(226) translate(4.5 0)"/><ellipse cx="0" cy="0" rx="5.5" ry="4" fill="#e8903a" transform="translate(37 28) rotate(298) translate(4.5 0)"/><circle cx="37" cy="28" r="1.8" fill="#8a3c18"/><path d="M44 31 Q50 33 55 39" stroke="#d07838" stroke-width="2.2" fill="none"/><ellipse cx="1" cy="26" rx="2" ry="2" fill="#a03020"/></g></g></svg>
<svg style="left:195px;top:153px" width="74" height="45" viewBox="0 0 74 45"><defs><clipPath id="c22"><rect width="74" height="45" rx="2"/></clipPath><radialGradient id="rbg" cx="0.5" cy="0.6" r="0.75"><stop offset="0" stop-color="#78b0b2"/><stop offset="0.55" stop-color="#5898a0"/><stop offset="1" stop-color="#3a5a80"/></radialGradient><linearGradient id="rtop" x1="0" y1="0" x2="0" y2="1"><stop offset="0" stop-color="#3a3c7c" stop-opacity="0.6"/><stop offset="1" stop-color="#3a3c7c" stop-opacity="0"/></linearGradient><filter color-interpolation-filters="sRGB" id="fb22" x="-30%" y="-30%" width="160%" height="160%"><feGaussianBlur stdDeviation="0.45"/></filter></defs><g clip-path="url(#c22)"><rect width="74" height="45" fill="url(#rbg)"/><rect width="74" height="14" fill="url(#rtop)"/><g filter="url(#fb22)"><path d="M38 36 L38 45" stroke="#2a5048" stroke-width="1.5"/><path d="M22 20 Q18 30 24 35 Q32 38 38 34 L32 18Z" fill="#b86aa0"/><path d="M27 13 Q32 7 40 9 Q41 14 36 17 L28 18Z" fill="#dcd48e"/><path d="M30 14 Q40 6 50 12 Q56 20 50 30 Q44 38 36 36 Q28 32 28 24Z" fill="#bc6c98"/><path d="M32 18 Q40 12 48 16 Q52 24 46 30 Q40 34 34 30 Q30 24 32 18Z" fill="#cc88a8"/><path d="M35 20 Q41 16 46 20 Q47 26 42 28 Q37 28 36 24Z" fill="#b05a82"/><path d="M38 21 Q42 19 44 22 Q43 25 40 25Z" fill="#e0a0b8"/><path d="M26 20 Q26 30 33 35" stroke="#3a5a78" stroke-width="1.1" fill="none"/><path d="M30 30 Q38 36 48 30" stroke="#e8a8c8" stroke-width="0.7" fill="none"/></g></g></svg>
<svg style="left:281.5px;top:153px" width="74" height="45" viewBox="0 0 74 45"><defs><clipPath id="c23"><rect width="74" height="45" rx="2"/></clipPath><linearGradient id="pbg" x1="0" y1="0" x2="1" y2="0.3"><stop offset="0" stop-color="#4a1448"/><stop offset="0.3" stop-color="#380c36"/><stop offset="0.75" stop-color="#6a2268"/><stop offset="1" stop-color="#50184e"/></linearGradient><linearGradient id="pbg2" x1="0" y1="0" x2="0" y2="1"><stop offset="0" stop-color="#000" stop-opacity="0"/><stop offset="1" stop-color="#100410" stop-opacity="0.6"/></linearGradient><filter color-interpolation-filters="sRGB" id="fb23" x="-30%" y="-30%" width="160%" height="160%"><feGaussianBlur stdDeviation="0.4"/></filter></defs><g clip-path="url(#c23)"><rect width="74" height="45" fill="url(#pbg)"/><rect x="4" y="0" width="2.5" height="45" fill="#6a2268" opacity="0.35"/><rect x="9" y="0" width="2.5" height="45" fill="#6a2268" opacity="0.35"/><rect x="15" y="0" width="2.5" height="45" fill="#6a2268" opacity="0.35"/><rect x="22" y="0" width="2.5" height="45" fill="#6a2268" opacity="0.35"/><rect x="28" y="0" width="2.5" height="45" fill="#6a2268" opacity="0.35"/><rect x="60" y="0" width="2.5" height="45" fill="#6a2268" opacity="0.35"/><rect x="66" y="0" width="2.5" height="45" fill="#6a2268" opacity="0.35"/><rect width="74" height="45" fill="url(#pbg2)"/><g filter="url(#fb23)"><path d="M51 32 L52 45" stroke="#2a1828" stroke-width="1.5"/><ellipse cx="10.8" cy="0" rx="8.8" ry="3.3" fill="#b888d0" transform="translate(47 21) rotate(3)"/><ellipse cx="10.8" cy="0" rx="7.4" ry="2.4" fill="#d4b4e6" transform="translate(47 21) rotate(3)"/><ellipse cx="9.9" cy="0" rx="8.1" ry="3.3" fill="#b888d0" transform="translate(47 21) rotate(28)"/><ellipse cx="9.9" cy="0" rx="6.8" ry="2.4" fill="#d4b4e6" transform="translate(47 21) rotate(28)"/><ellipse cx="10.6" cy="0" rx="8.7" ry="3.3" fill="#b888d0" transform="translate(47 21) rotate(57)"/><ellipse cx="10.6" cy="0" rx="7.3" ry="2.4" fill="#d4b4e6" transform="translate(47 21) rotate(57)"/><ellipse cx="10.0" cy="0" rx="8.1" ry="3.3" fill="#b888d0" transform="translate(47 21) rotate(86)"/><ellipse cx="10.0" cy="0" rx="6.9" ry="2.4" fill="#d4b4e6" transform="translate(47 21) rotate(86)"/><ellipse cx="10.3" cy="0" rx="8.4" ry="3.3" fill="#b888d0" transform="translate(47 21) rotate(112)"/><ellipse cx="10.3" cy="0" rx="7.1" ry="2.4" fill="#d4b4e6" transform="translate(47 21) rotate(112)"/><ellipse cx="10.7" cy="0" rx="8.7" ry="3.3" fill="#b888d0" transform="translate(47 21) rotate(138)"/><ellipse cx="10.7" cy="0" rx="7.4" ry="2.4" fill="#d4b4e6" transform="translate(47 21) rotate(138)"/><ellipse cx="11.0" cy="0" rx="9.0" ry="3.3" fill="#b888d0" transform="translate(47 21) rotate(166)"/><ellipse cx="11.0" cy="0" rx="7.6" ry="2.4" fill="#d4b4e6" transform="translate(47 21) rotate(166)"/><ellipse cx="10.0" cy="0" rx="8.2" ry="3.3" fill="#b888d0" transform="translate(47 21) rotate(197)"/><ellipse cx="10.0" cy="0" rx="6.9" ry="2.4" fill="#d4b4e6" transform="translate(47 21) rotate(197)"/><ellipse cx="10.7" cy="0" rx="8.8" ry="3.3" fill="#b888d0" transform="translate(47 21) rotate(223)"/><ellipse cx="10.7" cy="0" rx="7.4" ry="2.4" fill="#d4b4e6" transform="translate(47 21) rotate(223)"/><ellipse cx="10.4" cy="0" rx="8.5" ry="3.3" fill="#b888d0" transform="translate(47 21) rotate(249)"/><ellipse cx="10.4" cy="0" rx="7.2" ry="2.4" fill="#d4b4e6" transform="translate(47 21) rotate(249)"/><ellipse cx="10.5" cy="0" rx="8.6" ry="3.3" fill="#b888d0" transform="translate(47 21) rotate(280)"/><ellipse cx="10.5" cy="0" rx="7.2" ry="2.4" fill="#d4b4e6" transform="translate(47 21) rotate(280)"/><ellipse cx="10.5" cy="0" rx="8.6" ry="3.3" fill="#b888d0" transform="translate(47 21) rotate(304)"/><ellipse cx="10.5" cy="0" rx="7.3" ry="2.4" fill="#d4b4e6" transform="translate(47 21) rotate(304)"/><ellipse cx="10.9" cy="0" rx="8.9" ry="3.3" fill="#b888d0" transform="translate(47 21) rotate(329)"/><ellipse cx="10.9" cy="0" rx="7.5" ry="2.4" fill="#d4b4e6" transform="translate(47 21) rotate(329)"/><circle cx="47" cy="21" r="3.8" fill="#8a8a40"/><circle cx="47" cy="21" r="2.5" fill="#3a3428"/></g></g></svg>
<svg style="left:108px;top:227.5px" width="76" height="44" viewBox="0 0 76 44"><defs><clipPath id="c31"><rect width="76" height="44" rx="2"/></clipPath><radialGradient id="gbg" cx="0.3" cy="0.65" r="0.6"><stop offset="0" stop-color="#5a9430"/><stop offset="0.5" stop-color="#3a6c1e"/><stop offset="1" stop-color="#1a3010"/></radialGradient><filter color-interpolation-filters="sRGB" id="fb31" x="-30%" y="-30%" width="160%" height="160%"><feGaussianBlur stdDeviation="0.4"/></filter><filter color-interpolation-filters="sRGB" id="fb31b" x="-50%" y="-50%" width="200%" height="200%"><feGaussianBlur stdDeviation="3"/></filter></defs><g clip-path="url(#c31)"><rect width="76" height="44" fill="#050505"/><rect y="2.6" width="76" height="39" fill="url(#gbg)"/><g filter="url(#fb31b)"><ellipse cx="40" cy="6" rx="34" ry="6" fill="#142810" opacity="0.9"/><ellipse cx="10" cy="42" rx="24" ry="5" fill="#142410" opacity="0.7"/><ellipse cx="66" cy="28" rx="14" ry="16" fill="#1a3014" opacity="0.8"/><ellipse cx="8" cy="14" rx="10" ry="8" fill="#2a5018" opacity="0.6"/></g><g fill="none" stroke-width="0.6" filter="url(#fb31)"><path d="M26.4 20.8 q3.2 -1.8 8.7 -4.5" stroke="#3a6a20" opacity="0.45"/><path d="M23.4 39.8 q2.4 -2.1 7.2 -4.8" stroke="#3a6a20" opacity="0.45"/><path d="M48.4 31.3 q2.2 -2.6 8.7 -2.6" stroke="#6aa040" opacity="0.45"/><path d="M7.1 9.0 q3.0 -1.0 5.3 -2.4" stroke="#5a9038" opacity="0.45"/><path d="M35.6 13.8 q2.9 -1.9 8.5 -4.4" stroke="#3a6a20" opacity="0.45"/><path d="M14.0 27.5 q2.2 -2.1 8.0 -2.4" stroke="#5a9038" opacity="0.45"/><path d="M3.6 22.4 q3.5 -1.9 8.6 -2.6" stroke="#5a9038" opacity="0.45"/><path d="M7.6 17.8 q2.7 -1.1 8.8 -4.3" stroke="#5a9038" opacity="0.45"/><path d="M14.4 19.6 q2.1 -1.6 6.9 -3.5" stroke="#6aa040" opacity="0.45"/><path d="M4.4 27.7 q3.8 -1.5 5.8 -3.0" stroke="#3a6a20" opacity="0.45"/><path d="M21.5 5.5 q3.4 -1.3 8.8 -3.0" stroke="#3a6a20" opacity="0.45"/><path d="M10.4 12.3 q2.3 -1.8 5.2 -4.2" stroke="#244a12" opacity="0.45"/><path d="M12.9 17.0 q2.6 -3.0 5.3 -4.4" stroke="#3a6a20" opacity="0.45"/><path d="M35.9 35.5 q2.4 -2.9 6.1 -3.9" stroke="#6aa040" opacity="0.45"/><path d="M30.6 14.8 q3.0 -1.1 6.4 -2.9" stroke="#244a12" opacity="0.45"/><path d="M11.8 25.3 q2.2 -1.2 8.8 -4.8" stroke="#3a6a20" opacity="0.45"/><path d="M32.4 12.9 q2.8 -1.5 7.4 -3.7" stroke="#6aa040" opacity="0.45"/><path d="M3.2 19.7 q3.2 -1.7 6.1 -3.0" stroke="#3a6a20" opacity="0.45"/><path d="M0.6 26.4 q2.8 -2.7 8.6 -4.2" stroke="#5a9038" opacity="0.45"/><path d="M21.0 17.0 q3.1 -2.8 8.6 -4.7" stroke="#5a9038" opacity="0.45"/><path d="M18.2 18.1 q4.0 -1.4 8.5 -3.0" stroke="#3a6a20" opacity="0.45"/><path d="M7.8 7.5 q2.9 -2.4 7.7 -3.2" stroke="#244a12" opacity="0.45"/><path d="M48.5 39.2 q2.9 -2.5 7.2 -4.7" stroke="#6aa040" opacity="0.45"/><path d="M2.9 40.0 q3.6 -1.1 7.1 -3.2" stroke="#6aa040" opacity="0.45"/><path d="M24.9 34.1 q2.2 -1.4 5.0 -2.1" stroke="#6aa040" opacity="0.45"/><path d="M34.8 32.5 q3.3 -1.1 6.9 -2.3" stroke="#3a6a20" opacity="0.45"/><path d="M21.7 10.5 q3.7 -1.1 8.6 -4.9" stroke="#3a6a20" opacity="0.45"/><path d="M17.6 23.8 q3.6 -2.8 9.0 -3.3" stroke="#5a9038" opacity="0.45"/><path d="M3.4 13.3 q3.0 -2.4 6.4 -4.3" stroke="#5a9038" opacity="0.45"/><path d="M29.5 21.3 q3.2 -2.7 5.4 -4.6" stroke="#244a12" opacity="0.45"/><path d="M44.9 33.3 q2.3 -1.9 5.7 -3.1" stroke="#244a12" opacity="0.45"/><path d="M48.2 29.9 q2.8 -3.0 5.6 -2.5" stroke="#5a9038" opacity="0.45"/><path d="M36.7 29.9 q2.6 -1.8 6.6 -3.5" stroke="#244a12" opacity="0.45"/><path d="M45.6 24.0 q2.8 -2.4 5.9 -3.4" stroke="#5a9038" opacity="0.45"/><path d="M32.9 19.7 q2.4 -1.0 7.2 -4.6" stroke="#6aa040" opacity="0.45"/><path d="M49.1 37.4 q2.8 -2.4 8.0 -4.2" stroke="#5a9038" opacity="0.45"/><path d="M18.4 20.0 q2.8 -1.7 6.3 -4.6" stroke="#6aa040" opacity="0.45"/><path d="M15.6 23.6 q3.1 -1.9 6.6 -4.3" stroke="#244a12" opacity="0.45"/><path d="M5.0 18.0 q2.7 -1.1 7.1 -3.4" stroke="#3a6a20" opacity="0.45"/><path d="M36.7 18.1 q2.0 -1.8 8.8 -3.9" stroke="#5a9038" opacity="0.45"/><path d="M29.9 17.9 q2.4 -1.5 5.2 -4.4" stroke="#3a6a20" opacity="0.45"/><path d="M5.9 31.5 q2.1 -2.8 6.0 -4.2" stroke="#3a6a20" opacity="0.45"/><path d="M39.8 19.9 q2.8 -2.4 7.7 -4.7" stroke="#3a6a20" opacity="0.45"/><path d="M49.2 34.1 q2.1 -2.7 5.6 -4.1" stroke="#3a6a20" opacity="0.45"/><path d="M14.1 40.0 q2.1 -1.8 7.2 -2.2" stroke="#6aa040" opacity="0.45"/><path d="M31.9 5.8 q3.2 -3.0 7.9 -3.7" stroke="#244a12" opacity="0.45"/><path d="M34.0 39.4 q2.3 -2.8 7.7 -4.6" stroke="#5a9038" opacity="0.45"/><path d="M37.8 28.7 q2.9 -1.2 7.9 -2.5" stroke="#5a9038" opacity="0.45"/><path d="M47.8 17.5 q3.4 -2.2 7.8 -3.0" stroke="#5a9038" opacity="0.45"/><path d="M5.7 35.4 q2.8 -1.9 8.4 -4.6" stroke="#5a9038" opacity="0.45"/><path d="M43.7 21.5 q3.8 -1.1 5.8 -2.9" stroke="#5a9038" opacity="0.45"/><path d="M24.7 20.3 q3.0 -2.0 7.2 -2.4" stroke="#6aa040" opacity="0.45"/><path d="M38.6 16.3 q2.7 -2.7 6.4 -3.2" stroke="#5a9038" opacity="0.45"/><path d="M26.0 18.6 q2.7 -1.8 6.9 -2.1" stroke="#6aa040" opacity="0.45"/><path d="M16.4 29.4 q3.3 -2.3 6.6 -4.9" stroke="#244a12" opacity="0.45"/><path d="M46.1 33.1 q2.8 -1.6 6.7 -3.1" stroke="#3a6a20" opacity="0.45"/><path d="M28.0 39.2 q2.8 -2.8 5.7 -3.1" stroke="#6aa040" opacity="0.45"/><path d="M34.0 22.5 q2.1 -1.6 7.3 -3.3" stroke="#244a12" opacity="0.45"/><path d="M16.7 10.3 q3.6 -2.8 8.1 -4.3" stroke="#3a6a20" opacity="0.45"/><path d="M10.0 23.7 q2.2 -1.5 7.3 -2.3" stroke="#3a6a20" opacity="0.45"/><path d="M46.2 29.1 q2.2 -1.4 8.2 -3.2" stroke="#3a6a20" opacity="0.45"/><path d="M41.5 39.4 q2.5 -3.0 7.1 -4.2" stroke="#5a9038" opacity="0.45"/><path d="M14.7 13.9 q2.5 -2.8 5.1 -2.6" stroke="#244a12" opacity="0.45"/><path d="M47.2 10.3 q2.3 -1.3 8.4 -3.2" stroke="#6aa040" opacity="0.45"/><path d="M27.2 30.7 q2.6 -2.1 8.1 -3.0" stroke="#3a6a20" opacity="0.45"/><path d="M27.1 21.8 q2.7 -2.6 7.6 -4.2" stroke="#3a6a20" opacity="0.45"/><path d="M36.3 36.0 q3.9 -2.8 8.8 -3.0" stroke="#5a9038" opacity="0.45"/><path d="M3.6 36.6 q3.9 -1.1 5.8 -3.9" stroke="#5a9038" opacity="0.45"/><path d="M17.7 9.9 q2.3 -2.2 5.6 -2.3" stroke="#5a9038" opacity="0.45"/><path d="M48.7 39.1 q2.9 -1.6 5.3 -2.9" stroke="#5a9038" opacity="0.45"/></g><g filter="url(#fb31)"><ellipse cx="49.5" cy="15.0" rx="1.1" ry="0.6" fill="#e4ece4" transform="rotate(0 49.5 15.0)"/><ellipse cx="49.0" cy="15.8" rx="1.1" ry="0.6" fill="#e4ece4" transform="rotate(36 49.0 15.8)"/><ellipse cx="48.0" cy="16.1" rx="1.1" ry="0.6" fill="#e4ece4" transform="rotate(72 48.0 16.1)"/><ellipse cx="47.0" cy="15.8" rx="1.1" ry="0.6" fill="#e4ece4" transform="rotate(108 47.0 15.8)"/><ellipse cx="46.5" cy="15.0" rx="1.1" ry="0.6" fill="#e4ece4" transform="rotate(144 46.5 15.0)"/><ellipse cx="47.0" cy="14.2" rx="1.1" ry="0.6" fill="#e4ece4" transform="rotate(180 47.0 14.2)"/><ellipse cx="48.0" cy="13.9" rx="1.1" ry="0.6" fill="#e4ece4" transform="rotate(216 48.0 13.9)"/><ellipse cx="49.0" cy="14.2" rx="1.1" ry="0.6" fill="#e4ece4" transform="rotate(252 49.0 14.2)"/><circle cx="48" cy="15" r="0.5" fill="#b8b880"/><ellipse cx="54.6" cy="12.0" rx="1.2" ry="0.7" fill="#e4ece4" transform="rotate(0 54.6 12.0)"/><ellipse cx="54.1" cy="12.8" rx="1.2" ry="0.7" fill="#e4ece4" transform="rotate(36 54.1 12.8)"/><ellipse cx="53.0" cy="13.2" rx="1.2" ry="0.7" fill="#e4ece4" transform="rotate(72 53.0 13.2)"/><ellipse cx="51.9" cy="12.8" rx="1.2" ry="0.7" fill="#e4ece4" transform="rotate(108 51.9 12.8)"/><ellipse cx="51.4" cy="12.0" rx="1.2" ry="0.7" fill="#e4ece4" transform="rotate(144 51.4 12.0)"/><ellipse cx="51.9" cy="11.2" rx="1.2" ry="0.7" fill="#e4ece4" transform="rotate(180 51.9 11.2)"/><ellipse cx="53.0" cy="10.8" rx="1.2" ry="0.7" fill="#e4ece4" transform="rotate(216 53.0 10.8)"/><ellipse cx="54.1" cy="11.2" rx="1.2" ry="0.7" fill="#e4ece4" transform="rotate(252 54.1 11.2)"/><circle cx="53" cy="12" r="0.6" fill="#b8b880"/><ellipse cx="59.6" cy="14.0" rx="1.2" ry="0.7" fill="#e4ece4" transform="rotate(0 59.6 14.0)"/><ellipse cx="59.1" cy="14.8" rx="1.2" ry="0.7" fill="#e4ece4" transform="rotate(36 59.1 14.8)"/><ellipse cx="58.0" cy="15.2" rx="1.2" ry="0.7" fill="#e4ece4" transform="rotate(72 58.0 15.2)"/><ellipse cx="56.9" cy="14.8" rx="1.2" ry="0.7" fill="#e4ece4" transform="rotate(108 56.9 14.8)"/><ellipse cx="56.4" cy="14.0" rx="1.2" ry="0.7" fill="#e4ece4" transform="rotate(144 56.4 14.0)"/><ellipse cx="56.9" cy="13.2" rx="1.2" ry="0.7" fill="#e4ece4" transform="rotate(180 56.9 13.2)"/><ellipse cx="58.0" cy="12.8" rx="1.2" ry="0.7" fill="#e4ece4" transform="rotate(216 58.0 12.8)"/><ellipse cx="59.1" cy="13.2" rx="1.2" ry="0.7" fill="#e4ece4" transform="rotate(252 59.1 13.2)"/><circle cx="58" cy="14" r="0.6" fill="#b8b880"/><ellipse cx="64.3" cy="13.0" rx="1.0" ry="0.5" fill="#e4ece4" transform="rotate(0 64.3 13.0)"/><ellipse cx="63.9" cy="13.6" rx="1.0" ry="0.5" fill="#e4ece4" transform="rotate(36 63.9 13.6)"/><ellipse cx="63.0" cy="13.9" rx="1.0" ry="0.5" fill="#e4ece4" transform="rotate(72 63.0 13.9)"/><ellipse cx="62.1" cy="13.6" rx="1.0" ry="0.5" fill="#e4ece4" transform="rotate(108 62.1 13.6)"/><ellipse cx="61.7" cy="13.0" rx="1.0" ry="0.5" fill="#e4ece4" transform="rotate(144 61.7 13.0)"/><ellipse cx="62.1" cy="12.4" rx="1.0" ry="0.5" fill="#e4ece4" transform="rotate(180 62.1 12.4)"/><ellipse cx="63.0" cy="12.1" rx="1.0" ry="0.5" fill="#e4ece4" transform="rotate(216 63.0 12.1)"/><ellipse cx="63.9" cy="12.4" rx="1.0" ry="0.5" fill="#e4ece4" transform="rotate(252 63.9 12.4)"/><circle cx="63" cy="13" r="0.5" fill="#b8b880"/><ellipse cx="69.3" cy="15.0" rx="1.0" ry="0.6" fill="#e4ece4" transform="rotate(0 69.3 15.0)"/><ellipse cx="68.9" cy="15.7" rx="1.0" ry="0.6" fill="#e4ece4" transform="rotate(36 68.9 15.7)"/><ellipse cx="68.0" cy="15.9" rx="1.0" ry="0.6" fill="#e4ece4" transform="rotate(72 68.0 15.9)"/><ellipse cx="67.1" cy="15.7" rx="1.0" ry="0.6" fill="#e4ece4" transform="rotate(108 67.1 15.7)"/><ellipse cx="66.7" cy="15.0" rx="1.0" ry="0.6" fill="#e4ece4" transform="rotate(144 66.7 15.0)"/><ellipse cx="67.1" cy="14.3" rx="1.0" ry="0.6" fill="#e4ece4" transform="rotate(180 67.1 14.3)"/><ellipse cx="68.0" cy="14.1" rx="1.0" ry="0.6" fill="#e4ece4" transform="rotate(216 68.0 14.1)"/><ellipse cx="68.9" cy="14.3" rx="1.0" ry="0.6" fill="#e4ece4" transform="rotate(252 68.9 14.3)"/><circle cx="68" cy="15" r="0.5" fill="#b8b880"/><ellipse cx="74.3" cy="12.0" rx="1.0" ry="0.6" fill="#e4ece4" transform="rotate(0 74.3 12.0)"/><ellipse cx="73.9" cy="12.7" rx="1.0" ry="0.6" fill="#e4ece4" transform="rotate(36 73.9 12.7)"/><ellipse cx="73.0" cy="12.9" rx="1.0" ry="0.6" fill="#e4ece4" transform="rotate(72 73.0 12.9)"/><ellipse cx="72.1" cy="12.7" rx="1.0" ry="0.6" fill="#e4ece4" transform="rotate(108 72.1 12.7)"/><ellipse cx="71.7" cy="12.0" rx="1.0" ry="0.6" fill="#e4ece4" transform="rotate(144 71.7 12.0)"/><ellipse cx="72.1" cy="11.3" rx="1.0" ry="0.6" fill="#e4ece4" transform="rotate(180 72.1 11.3)"/><ellipse cx="73.0" cy="11.1" rx="1.0" ry="0.6" fill="#e4ece4" transform="rotate(216 73.0 11.1)"/><ellipse cx="73.9" cy="11.3" rx="1.0" ry="0.6" fill="#e4ece4" transform="rotate(252 73.9 11.3)"/><circle cx="73" cy="12" r="0.5" fill="#b8b880"/><ellipse cx="51.5" cy="19.0" rx="1.2" ry="0.7" fill="#e4ece4" transform="rotate(0 51.5 19.0)"/><ellipse cx="51.1" cy="19.8" rx="1.2" ry="0.7" fill="#e4ece4" transform="rotate(36 51.1 19.8)"/><ellipse cx="50.0" cy="20.1" rx="1.2" ry="0.7" fill="#e4ece4" transform="rotate(72 50.0 20.1)"/><ellipse cx="48.9" cy="19.8" rx="1.2" ry="0.7" fill="#e4ece4" transform="rotate(108 48.9 19.8)"/><ellipse cx="48.5" cy="19.0" rx="1.2" ry="0.7" fill="#e4ece4" transform="rotate(144 48.5 19.0)"/><ellipse cx="48.9" cy="18.2" rx="1.2" ry="0.7" fill="#e4ece4" transform="rotate(180 48.9 18.2)"/><ellipse cx="50.0" cy="17.9" rx="1.2" ry="0.7" fill="#e4ece4" transform="rotate(216 50.0 17.9)"/><ellipse cx="51.1" cy="18.2" rx="1.2" ry="0.7" fill="#e4ece4" transform="rotate(252 51.1 18.2)"/><circle cx="50" cy="19" r="0.6" fill="#b8b880"/><ellipse cx="56.2" cy="18.0" rx="0.9" ry="0.5" fill="#e4ece4" transform="rotate(0 56.2 18.0)"/><ellipse cx="55.9" cy="18.6" rx="0.9" ry="0.5" fill="#e4ece4" transform="rotate(36 55.9 18.6)"/><ellipse cx="55.0" cy="18.9" rx="0.9" ry="0.5" fill="#e4ece4" transform="rotate(72 55.0 18.9)"/><ellipse cx="54.1" cy="18.6" rx="0.9" ry="0.5" fill="#e4ece4" transform="rotate(108 54.1 18.6)"/><ellipse cx="53.8" cy="18.0" rx="0.9" ry="0.5" fill="#e4ece4" transform="rotate(144 53.8 18.0)"/><ellipse cx="54.1" cy="17.4" rx="0.9" ry="0.5" fill="#e4ece4" transform="rotate(180 54.1 17.4)"/><ellipse cx="55.0" cy="17.1" rx="0.9" ry="0.5" fill="#e4ece4" transform="rotate(216 55.0 17.1)"/><ellipse cx="55.9" cy="17.4" rx="0.9" ry="0.5" fill="#e4ece4" transform="rotate(252 55.9 17.4)"/><circle cx="55" cy="18" r="0.4" fill="#b8b880"/><ellipse cx="62.6" cy="19.0" rx="1.2" ry="0.7" fill="#e4ece4" transform="rotate(0 62.6 19.0)"/><ellipse cx="62.1" cy="19.8" rx="1.2" ry="0.7" fill="#e4ece4" transform="rotate(36 62.1 19.8)"/><ellipse cx="61.0" cy="20.2" rx="1.2" ry="0.7" fill="#e4ece4" transform="rotate(72 61.0 20.2)"/><ellipse cx="59.9" cy="19.8" rx="1.2" ry="0.7" fill="#e4ece4" transform="rotate(108 59.9 19.8)"/><ellipse cx="59.4" cy="19.0" rx="1.2" ry="0.7" fill="#e4ece4" transform="rotate(144 59.4 19.0)"/><ellipse cx="59.9" cy="18.2" rx="1.2" ry="0.7" fill="#e4ece4" transform="rotate(180 59.9 18.2)"/><ellipse cx="61.0" cy="17.8" rx="1.2" ry="0.7" fill="#e4ece4" transform="rotate(216 61.0 17.8)"/><ellipse cx="62.1" cy="18.2" rx="1.2" ry="0.7" fill="#e4ece4" transform="rotate(252 62.1 18.2)"/><circle cx="61" cy="19" r="0.6" fill="#b8b880"/><ellipse cx="67.6" cy="20.0" rx="1.2" ry="0.7" fill="#e4ece4" transform="rotate(0 67.6 20.0)"/><ellipse cx="67.1" cy="20.8" rx="1.2" ry="0.7" fill="#e4ece4" transform="rotate(36 67.1 20.8)"/><ellipse cx="66.0" cy="21.2" rx="1.2" ry="0.7" fill="#e4ece4" transform="rotate(72 66.0 21.2)"/><ellipse cx="64.9" cy="20.8" rx="1.2" ry="0.7" fill="#e4ece4" transform="rotate(108 64.9 20.8)"/><ellipse cx="64.4" cy="20.0" rx="1.2" ry="0.7" fill="#e4ece4" transform="rotate(144 64.4 20.0)"/><ellipse cx="64.9" cy="19.2" rx="1.2" ry="0.7" fill="#e4ece4" transform="rotate(180 64.9 19.2)"/><ellipse cx="66.0" cy="18.8" rx="1.2" ry="0.7" fill="#e4ece4" transform="rotate(216 66.0 18.8)"/><ellipse cx="67.1" cy="19.2" rx="1.2" ry="0.7" fill="#e4ece4" transform="rotate(252 67.1 19.2)"/><circle cx="66" cy="20" r="0.6" fill="#b8b880"/><ellipse cx="72.2" cy="19.0" rx="1.0" ry="0.5" fill="#e4ece4" transform="rotate(0 72.2 19.0)"/><ellipse cx="71.9" cy="19.6" rx="1.0" ry="0.5" fill="#e4ece4" transform="rotate(36 71.9 19.6)"/><ellipse cx="71.0" cy="19.9" rx="1.0" ry="0.5" fill="#e4ece4" transform="rotate(72 71.0 19.9)"/><ellipse cx="70.1" cy="19.6" rx="1.0" ry="0.5" fill="#e4ece4" transform="rotate(108 70.1 19.6)"/><ellipse cx="69.8" cy="19.0" rx="1.0" ry="0.5" fill="#e4ece4" transform="rotate(144 69.8 19.0)"/><ellipse cx="70.1" cy="18.4" rx="1.0" ry="0.5" fill="#e4ece4" transform="rotate(180 70.1 18.4)"/><ellipse cx="71.0" cy="18.1" rx="1.0" ry="0.5" fill="#e4ece4" transform="rotate(216 71.0 18.1)"/><ellipse cx="71.9" cy="18.4" rx="1.0" ry="0.5" fill="#e4ece4" transform="rotate(252 71.9 18.4)"/><circle cx="71" cy="19" r="0.5" fill="#b8b880"/><ellipse cx="48.6" cy="23.0" rx="1.2" ry="0.7" fill="#e4ece4" transform="rotate(0 48.6 23.0)"/><ellipse cx="48.1" cy="23.8" rx="1.2" ry="0.7" fill="#e4ece4" transform="rotate(36 48.1 23.8)"/><ellipse cx="47.0" cy="24.2" rx="1.2" ry="0.7" fill="#e4ece4" transform="rotate(72 47.0 24.2)"/><ellipse cx="45.9" cy="23.8" rx="1.2" ry="0.7" fill="#e4ece4" transform="rotate(108 45.9 23.8)"/><ellipse cx="45.4" cy="23.0" rx="1.2" ry="0.7" fill="#e4ece4" transform="rotate(144 45.4 23.0)"/><ellipse cx="45.9" cy="22.2" rx="1.2" ry="0.7" fill="#e4ece4" transform="rotate(180 45.9 22.2)"/><ellipse cx="47.0" cy="21.8" rx="1.2" ry="0.7" fill="#e4ece4" transform="rotate(216 47.0 21.8)"/><ellipse cx="48.1" cy="22.2" rx="1.2" ry="0.7" fill="#e4ece4" transform="rotate(252 48.1 22.2)"/><circle cx="47" cy="23" r="0.6" fill="#b8b880"/><ellipse cx="53.3" cy="24.0" rx="1.0" ry="0.6" fill="#e4ece4" transform="rotate(0 53.3 24.0)"/><ellipse cx="52.9" cy="24.7" rx="1.0" ry="0.6" fill="#e4ece4" transform="rotate(36 52.9 24.7)"/><ellipse cx="52.0" cy="25.0" rx="1.0" ry="0.6" fill="#e4ece4" transform="rotate(72 52.0 25.0)"/><ellipse cx="51.1" cy="24.7" rx="1.0" ry="0.6" fill="#e4ece4" transform="rotate(108 51.1 24.7)"/><ellipse cx="50.7" cy="24.0" rx="1.0" ry="0.6" fill="#e4ece4" transform="rotate(144 50.7 24.0)"/><ellipse cx="51.1" cy="23.3" rx="1.0" ry="0.6" fill="#e4ece4" transform="rotate(180 51.1 23.3)"/><ellipse cx="52.0" cy="23.0" rx="1.0" ry="0.6" fill="#e4ece4" transform="rotate(216 52.0 23.0)"/><ellipse cx="52.9" cy="23.3" rx="1.0" ry="0.6" fill="#e4ece4" transform="rotate(252 52.9 23.3)"/><circle cx="52" cy="24" r="0.5" fill="#b8b880"/><ellipse cx="59.3" cy="23.0" rx="1.0" ry="0.6" fill="#e4ece4" transform="rotate(0 59.3 23.0)"/><ellipse cx="58.9" cy="23.7" rx="1.0" ry="0.6" fill="#e4ece4" transform="rotate(36 58.9 23.7)"/><ellipse cx="58.0" cy="24.0" rx="1.0" ry="0.6" fill="#e4ece4" transform="rotate(72 58.0 24.0)"/><ellipse cx="57.1" cy="23.7" rx="1.0" ry="0.6" fill="#e4ece4" transform="rotate(108 57.1 23.7)"/><ellipse cx="56.7" cy="23.0" rx="1.0" ry="0.6" fill="#e4ece4" transform="rotate(144 56.7 23.0)"/><ellipse cx="57.1" cy="22.3" rx="1.0" ry="0.6" fill="#e4ece4" transform="rotate(180 57.1 22.3)"/><ellipse cx="58.0" cy="22.0" rx="1.0" ry="0.6" fill="#e4ece4" transform="rotate(216 58.0 22.0)"/><ellipse cx="58.9" cy="22.3" rx="1.0" ry="0.6" fill="#e4ece4" transform="rotate(252 58.9 22.3)"/><circle cx="58" cy="23" r="0.5" fill="#b8b880"/><ellipse cx="65.3" cy="25.0" rx="1.0" ry="0.6" fill="#e4ece4" transform="rotate(0 65.3 25.0)"/><ellipse cx="64.9" cy="25.7" rx="1.0" ry="0.6" fill="#e4ece4" transform="rotate(36 64.9 25.7)"/><ellipse cx="64.0" cy="26.0" rx="1.0" ry="0.6" fill="#e4ece4" transform="rotate(72 64.0 26.0)"/><ellipse cx="63.1" cy="25.7" rx="1.0" ry="0.6" fill="#e4ece4" transform="rotate(108 63.1 25.7)"/><ellipse cx="62.7" cy="25.0" rx="1.0" ry="0.6" fill="#e4ece4" transform="rotate(144 62.7 25.0)"/><ellipse cx="63.1" cy="24.3" rx="1.0" ry="0.6" fill="#e4ece4" transform="rotate(180 63.1 24.3)"/><ellipse cx="64.0" cy="24.0" rx="1.0" ry="0.6" fill="#e4ece4" transform="rotate(216 64.0 24.0)"/><ellipse cx="64.9" cy="24.3" rx="1.0" ry="0.6" fill="#e4ece4" transform="rotate(252 64.9 24.3)"/><circle cx="64" cy="25" r="0.5" fill="#b8b880"/><ellipse cx="71.3" cy="24.0" rx="1.0" ry="0.6" fill="#e4ece4" transform="rotate(0 71.3 24.0)"/><ellipse cx="70.9" cy="24.7" rx="1.0" ry="0.6" fill="#e4ece4" transform="rotate(36 70.9 24.7)"/><ellipse cx="70.0" cy="24.9" rx="1.0" ry="0.6" fill="#e4ece4" transform="rotate(72 70.0 24.9)"/><ellipse cx="69.1" cy="24.7" rx="1.0" ry="0.6" fill="#e4ece4" transform="rotate(108 69.1 24.7)"/><ellipse cx="68.7" cy="24.0" rx="1.0" ry="0.6" fill="#e4ece4" transform="rotate(144 68.7 24.0)"/><ellipse cx="69.1" cy="23.3" rx="1.0" ry="0.6" fill="#e4ece4" transform="rotate(180 69.1 23.3)"/><ellipse cx="70.0" cy="23.1" rx="1.0" ry="0.6" fill="#e4ece4" transform="rotate(216 70.0 23.1)"/><ellipse cx="70.9" cy="23.3" rx="1.0" ry="0.6" fill="#e4ece4" transform="rotate(252 70.9 23.3)"/><circle cx="70" cy="24" r="0.5" fill="#b8b880"/><ellipse cx="76.4" cy="26.0" rx="1.1" ry="0.6" fill="#e4ece4" transform="rotate(0 76.4 26.0)"/><ellipse cx="76.0" cy="26.7" rx="1.1" ry="0.6" fill="#e4ece4" transform="rotate(36 76.0 26.7)"/><ellipse cx="75.0" cy="27.1" rx="1.1" ry="0.6" fill="#e4ece4" transform="rotate(72 75.0 27.1)"/><ellipse cx="74.0" cy="26.7" rx="1.1" ry="0.6" fill="#e4ece4" transform="rotate(108 74.0 26.7)"/><ellipse cx="73.6" cy="26.0" rx="1.1" ry="0.6" fill="#e4ece4" transform="rotate(144 73.6 26.0)"/><ellipse cx="74.0" cy="25.3" rx="1.1" ry="0.6" fill="#e4ece4" transform="rotate(180 74.0 25.3)"/><ellipse cx="75.0" cy="24.9" rx="1.1" ry="0.6" fill="#e4ece4" transform="rotate(216 75.0 24.9)"/><ellipse cx="76.0" cy="25.3" rx="1.1" ry="0.6" fill="#e4ece4" transform="rotate(252 76.0 25.3)"/><circle cx="75" cy="26" r="0.5" fill="#b8b880"/><ellipse cx="55.6" cy="29.0" rx="1.2" ry="0.7" fill="#e4ece4" transform="rotate(0 55.6 29.0)"/><ellipse cx="55.1" cy="29.8" rx="1.2" ry="0.7" fill="#e4ece4" transform="rotate(36 55.1 29.8)"/><ellipse cx="54.0" cy="30.2" rx="1.2" ry="0.7" fill="#e4ece4" transform="rotate(72 54.0 30.2)"/><ellipse cx="52.9" cy="29.8" rx="1.2" ry="0.7" fill="#e4ece4" transform="rotate(108 52.9 29.8)"/><ellipse cx="52.4" cy="29.0" rx="1.2" ry="0.7" fill="#e4ece4" transform="rotate(144 52.4 29.0)"/><ellipse cx="52.9" cy="28.2" rx="1.2" ry="0.7" fill="#e4ece4" transform="rotate(180 52.9 28.2)"/><ellipse cx="54.0" cy="27.8" rx="1.2" ry="0.7" fill="#e4ece4" transform="rotate(216 54.0 27.8)"/><ellipse cx="55.1" cy="28.2" rx="1.2" ry="0.7" fill="#e4ece4" transform="rotate(252 55.1 28.2)"/><circle cx="54" cy="29" r="0.6" fill="#b8b880"/><ellipse cx="61.3" cy="30.0" rx="1.0" ry="0.6" fill="#e4ece4" transform="rotate(0 61.3 30.0)"/><ellipse cx="60.9" cy="30.7" rx="1.0" ry="0.6" fill="#e4ece4" transform="rotate(36 60.9 30.7)"/><ellipse cx="60.0" cy="30.9" rx="1.0" ry="0.6" fill="#e4ece4" transform="rotate(72 60.0 30.9)"/><ellipse cx="59.1" cy="30.7" rx="1.0" ry="0.6" fill="#e4ece4" transform="rotate(108 59.1 30.7)"/><ellipse cx="58.7" cy="30.0" rx="1.0" ry="0.6" fill="#e4ece4" transform="rotate(144 58.7 30.0)"/><ellipse cx="59.1" cy="29.3" rx="1.0" ry="0.6" fill="#e4ece4" transform="rotate(180 59.1 29.3)"/><ellipse cx="60.0" cy="29.1" rx="1.0" ry="0.6" fill="#e4ece4" transform="rotate(216 60.0 29.1)"/><ellipse cx="60.9" cy="29.3" rx="1.0" ry="0.6" fill="#e4ece4" transform="rotate(252 60.9 29.3)"/><circle cx="60" cy="30" r="0.5" fill="#b8b880"/><ellipse cx="69.4" cy="31.0" rx="1.1" ry="0.6" fill="#e4ece4" transform="rotate(0 69.4 31.0)"/><ellipse cx="69.0" cy="31.7" rx="1.1" ry="0.6" fill="#e4ece4" transform="rotate(36 69.0 31.7)"/><ellipse cx="68.0" cy="32.0" rx="1.1" ry="0.6" fill="#e4ece4" transform="rotate(72 68.0 32.0)"/><ellipse cx="67.0" cy="31.7" rx="1.1" ry="0.6" fill="#e4ece4" transform="rotate(108 67.0 31.7)"/><ellipse cx="66.6" cy="31.0" rx="1.1" ry="0.6" fill="#e4ece4" transform="rotate(144 66.6 31.0)"/><ellipse cx="67.0" cy="30.3" rx="1.1" ry="0.6" fill="#e4ece4" transform="rotate(180 67.0 30.3)"/><ellipse cx="68.0" cy="30.0" rx="1.1" ry="0.6" fill="#e4ece4" transform="rotate(216 68.0 30.0)"/><ellipse cx="69.0" cy="30.3" rx="1.1" ry="0.6" fill="#e4ece4" transform="rotate(252 69.0 30.3)"/><circle cx="68" cy="31" r="0.5" fill="#b8b880"/><ellipse cx="74.6" cy="33.0" rx="1.2" ry="0.7" fill="#e4ece4" transform="rotate(0 74.6 33.0)"/><ellipse cx="74.1" cy="33.8" rx="1.2" ry="0.7" fill="#e4ece4" transform="rotate(36 74.1 33.8)"/><ellipse cx="73.0" cy="34.1" rx="1.2" ry="0.7" fill="#e4ece4" transform="rotate(72 73.0 34.1)"/><ellipse cx="71.9" cy="33.8" rx="1.2" ry="0.7" fill="#e4ece4" transform="rotate(108 71.9 33.8)"/><ellipse cx="71.4" cy="33.0" rx="1.2" ry="0.7" fill="#e4ece4" transform="rotate(144 71.4 33.0)"/><ellipse cx="71.9" cy="32.2" rx="1.2" ry="0.7" fill="#e4ece4" transform="rotate(180 71.9 32.2)"/><ellipse cx="73.0" cy="31.9" rx="1.2" ry="0.7" fill="#e4ece4" transform="rotate(216 73.0 31.9)"/><ellipse cx="74.1" cy="32.2" rx="1.2" ry="0.7" fill="#e4ece4" transform="rotate(252 74.1 32.2)"/><circle cx="73" cy="33" r="0.6" fill="#b8b880"/><ellipse cx="58.5" cy="35.0" rx="1.1" ry="0.6" fill="#e4ece4" transform="rotate(0 58.5 35.0)"/><ellipse cx="58.0" cy="35.8" rx="1.1" ry="0.6" fill="#e4ece4" transform="rotate(36 58.0 35.8)"/><ellipse cx="57.0" cy="36.1" rx="1.1" ry="0.6" fill="#e4ece4" transform="rotate(72 57.0 36.1)"/><ellipse cx="56.0" cy="35.8" rx="1.1" ry="0.6" fill="#e4ece4" transform="rotate(108 56.0 35.8)"/><ellipse cx="55.5" cy="35.0" rx="1.1" ry="0.6" fill="#e4ece4" transform="rotate(144 55.5 35.0)"/><ellipse cx="56.0" cy="34.2" rx="1.1" ry="0.6" fill="#e4ece4" transform="rotate(180 56.0 34.2)"/><ellipse cx="57.0" cy="33.9" rx="1.1" ry="0.6" fill="#e4ece4" transform="rotate(216 57.0 33.9)"/><ellipse cx="58.0" cy="34.2" rx="1.1" ry="0.6" fill="#e4ece4" transform="rotate(252 58.0 34.2)"/><circle cx="57" cy="35" r="0.5" fill="#b8b880"/><ellipse cx="64.6" cy="37.0" rx="1.2" ry="0.7" fill="#e4ece4" transform="rotate(0 64.6 37.0)"/><ellipse cx="64.1" cy="37.8" rx="1.2" ry="0.7" fill="#e4ece4" transform="rotate(36 64.1 37.8)"/><ellipse cx="63.0" cy="38.1" rx="1.2" ry="0.7" fill="#e4ece4" transform="rotate(72 63.0 38.1)"/><ellipse cx="61.9" cy="37.8" rx="1.2" ry="0.7" fill="#e4ece4" transform="rotate(108 61.9 37.8)"/><ellipse cx="61.4" cy="37.0" rx="1.2" ry="0.7" fill="#e4ece4" transform="rotate(144 61.4 37.0)"/><ellipse cx="61.9" cy="36.2" rx="1.2" ry="0.7" fill="#e4ece4" transform="rotate(180 61.9 36.2)"/><ellipse cx="63.0" cy="35.9" rx="1.2" ry="0.7" fill="#e4ece4" transform="rotate(216 63.0 35.9)"/><ellipse cx="64.1" cy="36.2" rx="1.2" ry="0.7" fill="#e4ece4" transform="rotate(252 64.1 36.2)"/><circle cx="63" cy="37" r="0.6" fill="#b8b880"/><ellipse cx="71.6" cy="38.0" rx="1.3" ry="0.7" fill="#e4ece4" transform="rotate(0 71.6 38.0)"/><ellipse cx="71.2" cy="38.8" rx="1.3" ry="0.7" fill="#e4ece4" transform="rotate(36 71.2 38.8)"/><ellipse cx="70.0" cy="39.2" rx="1.3" ry="0.7" fill="#e4ece4" transform="rotate(72 70.0 39.2)"/><ellipse cx="68.8" cy="38.8" rx="1.3" ry="0.7" fill="#e4ece4" transform="rotate(108 68.8 38.8)"/><ellipse cx="68.4" cy="38.0" rx="1.3" ry="0.7" fill="#e4ece4" transform="rotate(144 68.4 38.0)"/><ellipse cx="68.8" cy="37.2" rx="1.3" ry="0.7" fill="#e4ece4" transform="rotate(180 68.8 37.2)"/><ellipse cx="70.0" cy="36.8" rx="1.3" ry="0.7" fill="#e4ece4" transform="rotate(216 70.0 36.8)"/><ellipse cx="71.2" cy="37.2" rx="1.3" ry="0.7" fill="#e4ece4" transform="rotate(252 71.2 37.2)"/><circle cx="70" cy="38" r="0.6" fill="#b8b880"/><ellipse cx="61.5" cy="41.0" rx="1.1" ry="0.6" fill="#e4ece4" transform="rotate(0 61.5 41.0)"/><ellipse cx="61.0" cy="41.8" rx="1.1" ry="0.6" fill="#e4ece4" transform="rotate(36 61.0 41.8)"/><ellipse cx="60.0" cy="42.1" rx="1.1" ry="0.6" fill="#e4ece4" transform="rotate(72 60.0 42.1)"/><ellipse cx="59.0" cy="41.8" rx="1.1" ry="0.6" fill="#e4ece4" transform="rotate(108 59.0 41.8)"/><ellipse cx="58.5" cy="41.0" rx="1.1" ry="0.6" fill="#e4ece4" transform="rotate(144 58.5 41.0)"/><ellipse cx="59.0" cy="40.2" rx="1.1" ry="0.6" fill="#e4ece4" transform="rotate(180 59.0 40.2)"/><ellipse cx="60.0" cy="39.9" rx="1.1" ry="0.6" fill="#e4ece4" transform="rotate(216 60.0 39.9)"/><ellipse cx="61.0" cy="40.2" rx="1.1" ry="0.6" fill="#e4ece4" transform="rotate(252 61.0 40.2)"/><circle cx="60" cy="41" r="0.5" fill="#b8b880"/><ellipse cx="67.6" cy="42.0" rx="1.2" ry="0.7" fill="#e4ece4" transform="rotate(0 67.6 42.0)"/><ellipse cx="67.1" cy="42.8" rx="1.2" ry="0.7" fill="#e4ece4" transform="rotate(36 67.1 42.8)"/><ellipse cx="66.0" cy="43.2" rx="1.2" ry="0.7" fill="#e4ece4" transform="rotate(72 66.0 43.2)"/><ellipse cx="64.9" cy="42.8" rx="1.2" ry="0.7" fill="#e4ece4" transform="rotate(108 64.9 42.8)"/><ellipse cx="64.4" cy="42.0" rx="1.2" ry="0.7" fill="#e4ece4" transform="rotate(144 64.4 42.0)"/><ellipse cx="64.9" cy="41.2" rx="1.2" ry="0.7" fill="#e4ece4" transform="rotate(180 64.9 41.2)"/><ellipse cx="66.0" cy="40.8" rx="1.2" ry="0.7" fill="#e4ece4" transform="rotate(216 66.0 40.8)"/><ellipse cx="67.1" cy="41.2" rx="1.2" ry="0.7" fill="#e4ece4" transform="rotate(252 67.1 41.2)"/><circle cx="66" cy="42" r="0.6" fill="#b8b880"/><ellipse cx="37.3" cy="25.0" rx="1.0" ry="0.6" fill="#e4ece4" transform="rotate(0 37.3 25.0)"/><ellipse cx="37.0" cy="25.7" rx="1.0" ry="0.6" fill="#e4ece4" transform="rotate(36 37.0 25.7)"/><ellipse cx="36.0" cy="26.0" rx="1.0" ry="0.6" fill="#e4ece4" transform="rotate(72 36.0 26.0)"/><ellipse cx="35.0" cy="25.7" rx="1.0" ry="0.6" fill="#e4ece4" transform="rotate(108 35.0 25.7)"/><ellipse cx="34.7" cy="25.0" rx="1.0" ry="0.6" fill="#e4ece4" transform="rotate(144 34.7 25.0)"/><ellipse cx="35.0" cy="24.3" rx="1.0" ry="0.6" fill="#e4ece4" transform="rotate(180 35.0 24.3)"/><ellipse cx="36.0" cy="24.0" rx="1.0" ry="0.6" fill="#e4ece4" transform="rotate(216 36.0 24.0)"/><ellipse cx="37.0" cy="24.3" rx="1.0" ry="0.6" fill="#e4ece4" transform="rotate(252 37.0 24.3)"/><circle cx="36" cy="25" r="0.5" fill="#b8b880"/><ellipse cx="43.3" cy="31.0" rx="1.0" ry="0.6" fill="#e4ece4" transform="rotate(0 43.3 31.0)"/><ellipse cx="42.9" cy="31.7" rx="1.0" ry="0.6" fill="#e4ece4" transform="rotate(36 42.9 31.7)"/><ellipse cx="42.0" cy="31.9" rx="1.0" ry="0.6" fill="#e4ece4" transform="rotate(72 42.0 31.9)"/><ellipse cx="41.1" cy="31.7" rx="1.0" ry="0.6" fill="#e4ece4" transform="rotate(108 41.1 31.7)"/><ellipse cx="40.7" cy="31.0" rx="1.0" ry="0.6" fill="#e4ece4" transform="rotate(144 40.7 31.0)"/><ellipse cx="41.1" cy="30.3" rx="1.0" ry="0.6" fill="#e4ece4" transform="rotate(180 41.1 30.3)"/><ellipse cx="42.0" cy="30.1" rx="1.0" ry="0.6" fill="#e4ece4" transform="rotate(216 42.0 30.1)"/><ellipse cx="42.9" cy="30.3" rx="1.0" ry="0.6" fill="#e4ece4" transform="rotate(252 42.9 30.3)"/><circle cx="42" cy="31" r="0.5" fill="#b8b880"/><ellipse cx="48.5" cy="36.0" rx="1.2" ry="0.7" fill="#e4ece4" transform="rotate(0 48.5 36.0)"/><ellipse cx="48.1" cy="36.8" rx="1.2" ry="0.7" fill="#e4ece4" transform="rotate(36 48.1 36.8)"/><ellipse cx="47.0" cy="37.1" rx="1.2" ry="0.7" fill="#e4ece4" transform="rotate(72 47.0 37.1)"/><ellipse cx="45.9" cy="36.8" rx="1.2" ry="0.7" fill="#e4ece4" transform="rotate(108 45.9 36.8)"/><ellipse cx="45.5" cy="36.0" rx="1.2" ry="0.7" fill="#e4ece4" transform="rotate(144 45.5 36.0)"/><ellipse cx="45.9" cy="35.2" rx="1.2" ry="0.7" fill="#e4ece4" transform="rotate(180 45.9 35.2)"/><ellipse cx="47.0" cy="34.9" rx="1.2" ry="0.7" fill="#e4ece4" transform="rotate(216 47.0 34.9)"/><ellipse cx="48.1" cy="35.2" rx="1.2" ry="0.7" fill="#e4ece4" transform="rotate(252 48.1 35.2)"/><circle cx="47" cy="36" r="0.6" fill="#b8b880"/><ellipse cx="73.3" cy="8.0" rx="1.0" ry="0.6" fill="#e4ece4" transform="rotate(0 73.3 8.0)"/><ellipse cx="72.9" cy="8.7" rx="1.0" ry="0.6" fill="#e4ece4" transform="rotate(36 72.9 8.7)"/><ellipse cx="72.0" cy="8.9" rx="1.0" ry="0.6" fill="#e4ece4" transform="rotate(72 72.0 8.9)"/><ellipse cx="71.1" cy="8.7" rx="1.0" ry="0.6" fill="#e4ece4" transform="rotate(108 71.1 8.7)"/><ellipse cx="70.7" cy="8.0" rx="1.0" ry="0.6" fill="#e4ece4" transform="rotate(144 70.7 8.0)"/><ellipse cx="71.1" cy="7.3" rx="1.0" ry="0.6" fill="#e4ece4" transform="rotate(180 71.1 7.3)"/><ellipse cx="72.0" cy="7.1" rx="1.0" ry="0.6" fill="#e4ece4" transform="rotate(216 72.0 7.1)"/><ellipse cx="72.9" cy="7.3" rx="1.0" ry="0.6" fill="#e4ece4" transform="rotate(252 72.9 7.3)"/><circle cx="72" cy="8" r="0.5" fill="#b8b880"/><ellipse cx="61.6" cy="8.0" rx="1.2" ry="0.7" fill="#e4ece4" transform="rotate(0 61.6 8.0)"/><ellipse cx="61.1" cy="8.8" rx="1.2" ry="0.7" fill="#e4ece4" transform="rotate(36 61.1 8.8)"/><ellipse cx="60.0" cy="9.2" rx="1.2" ry="0.7" fill="#e4ece4" transform="rotate(72 60.0 9.2)"/><ellipse cx="58.9" cy="8.8" rx="1.2" ry="0.7" fill="#e4ece4" transform="rotate(108 58.9 8.8)"/><ellipse cx="58.4" cy="8.0" rx="1.2" ry="0.7" fill="#e4ece4" transform="rotate(144 58.4 8.0)"/><ellipse cx="58.9" cy="7.2" rx="1.2" ry="0.7" fill="#e4ece4" transform="rotate(180 58.9 7.2)"/><ellipse cx="60.0" cy="6.8" rx="1.2" ry="0.7" fill="#e4ece4" transform="rotate(216 60.0 6.8)"/><ellipse cx="61.1" cy="7.2" rx="1.2" ry="0.7" fill="#e4ece4" transform="rotate(252 61.1 7.2)"/><circle cx="60" cy="8" r="0.6" fill="#b8b880"/><ellipse cx="45.3" cy="19.0" rx="1.0" ry="0.5" fill="#e4ece4" transform="rotate(0 45.3 19.0)"/><ellipse cx="44.9" cy="19.6" rx="1.0" ry="0.5" fill="#e4ece4" transform="rotate(36 44.9 19.6)"/><ellipse cx="44.0" cy="19.9" rx="1.0" ry="0.5" fill="#e4ece4" transform="rotate(72 44.0 19.9)"/><ellipse cx="43.1" cy="19.6" rx="1.0" ry="0.5" fill="#e4ece4" transform="rotate(108 43.1 19.6)"/><ellipse cx="42.7" cy="19.0" rx="1.0" ry="0.5" fill="#e4ece4" transform="rotate(144 42.7 19.0)"/><ellipse cx="43.1" cy="18.4" rx="1.0" ry="0.5" fill="#e4ece4" transform="rotate(180 43.1 18.4)"/><ellipse cx="44.0" cy="18.1" rx="1.0" ry="0.5" fill="#e4ece4" transform="rotate(216 44.0 18.1)"/><ellipse cx="44.9" cy="18.4" rx="1.0" ry="0.5" fill="#e4ece4" transform="rotate(252 44.9 18.4)"/><circle cx="44" cy="19" r="0.5" fill="#b8b880"/></g><rect y="0" width="76" height="2.6" fill="#050505"/><rect y="41.6" width="76" height="2.4" fill="#050505"/></g></svg>
<svg style="left:172px;top:228px" width="11" height="7" viewBox="0 0 11 7"><rect x="0.6" y="0.6" width="9.8" height="5.8" rx="0.6" fill="#202020" fill-opacity="0.6" stroke="#f0f0ec" stroke-width="1.1"/><rect x="2" y="2" width="4.4" height="3" fill="#0a0a0a"/><path d="M7.2 2.2V4.8M8.4 2V5" stroke="#f0f0ec" stroke-width="0.9"/></svg>
<svg style="left:194px;top:227.5px" width="76" height="44" viewBox="0 0 76 44"><defs><clipPath id="c32"><rect width="76" height="44" rx="2"/></clipPath><linearGradient id="pp" x1="0" y1="0" x2="0" y2="1"><stop offset="0" stop-color="#7a3020"/><stop offset="0.35" stop-color="#6a5038"/><stop offset="0.6" stop-color="#5a5a3a"/><stop offset="0.85" stop-color="#3a3a20"/><stop offset="1" stop-color="#2a2414"/></linearGradient><filter color-interpolation-filters="sRGB" id="fb32"><feGaussianBlur stdDeviation="0.4"/></filter></defs><g clip-path="url(#c32)"><rect width="76" height="44" fill="#050505"/><rect y="2.6" width="76" height="39" fill="url(#pp)"/><g filter="url(#fb32)"><ellipse cx="22.6" cy="14.4" rx="0.6" ry="0.5" fill="#4a5a28"/><ellipse cx="63.1" cy="29.2" rx="1.2" ry="1.0" fill="#2a3418"/><ellipse cx="51.0" cy="6.2" rx="1.5" ry="1.3" fill="#e04028"/><ellipse cx="63.3" cy="18.5" rx="1.0" ry="0.9" fill="#b82818"/><ellipse cx="68.3" cy="12.2" rx="1.2" ry="1.0" fill="#b82818"/><ellipse cx="25.5" cy="28.6" rx="1.3" ry="1.1" fill="#c8c0a0"/><ellipse cx="31.5" cy="10.6" rx="1.1" ry="0.9" fill="#e0583a"/><ellipse cx="59.6" cy="15.6" rx="1.2" ry="1.0" fill="#b82818"/><ellipse cx="43.6" cy="24.8" rx="0.9" ry="0.8" fill="#b82818"/><ellipse cx="22.9" cy="15.5" rx="1.2" ry="1.0" fill="#b0a880"/><ellipse cx="41.0" cy="6.0" rx="0.9" ry="0.8" fill="#c8c0a0"/><ellipse cx="3.4" cy="24.2" rx="0.8" ry="0.6" fill="#b82818"/><ellipse cx="5.6" cy="34.7" rx="1.2" ry="1.0" fill="#4a5a28"/><ellipse cx="59.5" cy="15.8" rx="1.3" ry="1.0" fill="#4a5a28"/><ellipse cx="42.7" cy="38.9" rx="0.8" ry="0.6" fill="#d03020"/><ellipse cx="2.5" cy="39.3" rx="0.7" ry="0.6" fill="#c8c0a0"/><ellipse cx="15.6" cy="36.4" rx="0.8" ry="0.7" fill="#8a8a58"/><ellipse cx="70.7" cy="8.4" rx="0.9" ry="0.7" fill="#d03020"/><ellipse cx="10.3" cy="28.8" rx="0.9" ry="0.7" fill="#4a5a28"/><ellipse cx="55.2" cy="38.1" rx="1.5" ry="1.3" fill="#d03020"/><ellipse cx="55.1" cy="28.7" rx="0.9" ry="0.7" fill="#b82818"/><ellipse cx="9.3" cy="23.0" rx="0.9" ry="0.8" fill="#2a3418"/><ellipse cx="61.1" cy="12.9" rx="0.7" ry="0.6" fill="#e04028"/><ellipse cx="70.0" cy="40.1" rx="0.7" ry="0.6" fill="#2a3418"/><ellipse cx="73.4" cy="27.3" rx="1.4" ry="1.2" fill="#e0583a"/><ellipse cx="73.9" cy="20.5" rx="0.9" ry="0.8" fill="#4a5a28"/><ellipse cx="14.5" cy="38.9" rx="0.9" ry="0.8" fill="#b0a880"/><ellipse cx="44.4" cy="23.6" rx="0.9" ry="0.7" fill="#d03020"/><ellipse cx="56.0" cy="11.0" rx="1.1" ry="0.9" fill="#e04028"/><ellipse cx="73.1" cy="26.3" rx="0.9" ry="0.7" fill="#d03020"/><ellipse cx="1.2" cy="14.6" rx="1.4" ry="1.2" fill="#b82818"/><ellipse cx="42.7" cy="29.1" rx="0.9" ry="0.7" fill="#b82818"/><ellipse cx="10.9" cy="25.0" rx="1.0" ry="0.8" fill="#4a5a28"/><ellipse cx="35.0" cy="15.6" rx="1.1" ry="0.9" fill="#c8c0a0"/><ellipse cx="47.3" cy="36.9" rx="1.0" ry="0.8" fill="#4a5a28"/><ellipse cx="74.8" cy="14.0" rx="0.9" ry="0.8" fill="#b82818"/><ellipse cx="44.4" cy="9.0" rx="1.1" ry="0.9" fill="#8a8a58"/><ellipse cx="48.2" cy="3.1" rx="1.1" ry="0.9" fill="#d03020"/><ellipse cx="70.1" cy="22.5" rx="1.3" ry="1.1" fill="#d03020"/><ellipse cx="30.5" cy="21.9" rx="0.9" ry="0.8" fill="#2a3418"/><ellipse cx="6.8" cy="21.9" rx="1.5" ry="1.3" fill="#e04028"/><ellipse cx="21.3" cy="19.8" rx="0.9" ry="0.8" fill="#d03020"/><ellipse cx="63.0" cy="33.3" rx="1.1" ry="0.9" fill="#d03020"/><ellipse cx="42.2" cy="38.9" rx="0.7" ry="0.6" fill="#4a5a28"/><ellipse cx="24.0" cy="28.3" rx="1.1" ry="0.9" fill="#c8c0a0"/><ellipse cx="52.4" cy="20.0" rx="1.3" ry="1.1" fill="#e04028"/><ellipse cx="60.6" cy="30.0" rx="0.7" ry="0.6" fill="#c8c0a0"/><ellipse cx="36.2" cy="30.1" rx="1.5" ry="1.3" fill="#d03020"/><ellipse cx="50.0" cy="20.9" rx="1.3" ry="1.1" fill="#4a5a28"/><ellipse cx="49.0" cy="5.5" rx="0.9" ry="0.8" fill="#d03020"/><ellipse cx="21.9" cy="17.8" rx="1.5" ry="1.3" fill="#b82818"/><ellipse cx="47.3" cy="7.8" rx="1.1" ry="0.9" fill="#d03020"/><ellipse cx="31.0" cy="18.0" rx="1.0" ry="0.8" fill="#b0a880"/><ellipse cx="71.7" cy="27.3" rx="1.1" ry="0.9" fill="#4a5a28"/><ellipse cx="3.0" cy="36.6" rx="0.8" ry="0.6" fill="#c8c0a0"/><ellipse cx="47.0" cy="7.5" rx="1.0" ry="0.8" fill="#e0583a"/><ellipse cx="20.7" cy="10.1" rx="1.0" ry="0.8" fill="#d03020"/><ellipse cx="70.5" cy="37.6" rx="1.5" ry="1.3" fill="#b82818"/><ellipse cx="58.8" cy="15.7" rx="0.8" ry="0.6" fill="#e0583a"/><ellipse cx="7.3" cy="29.8" rx="1.0" ry="0.8" fill="#e04028"/><ellipse cx="70.9" cy="16.8" rx="0.8" ry="0.6" fill="#e0583a"/><ellipse cx="4.0" cy="16.5" rx="0.9" ry="0.8" fill="#e0583a"/><ellipse cx="69.9" cy="33.0" rx="0.7" ry="0.6" fill="#b0a880"/><ellipse cx="32.9" cy="29.1" rx="1.2" ry="1.0" fill="#2a3418"/><ellipse cx="70.3" cy="22.0" rx="1.0" ry="0.8" fill="#2a3418"/><ellipse cx="75.8" cy="23.1" rx="1.2" ry="1.0" fill="#d03020"/><ellipse cx="14.0" cy="39.8" rx="1.1" ry="0.9" fill="#2a3418"/><ellipse cx="24.3" cy="32.1" rx="0.9" ry="0.8" fill="#b0a880"/><ellipse cx="32.9" cy="7.0" rx="1.5" ry="1.2" fill="#b82818"/><ellipse cx="4.3" cy="5.7" rx="1.4" ry="1.2" fill="#e0583a"/><ellipse cx="75.6" cy="21.9" rx="0.9" ry="0.7" fill="#c8c0a0"/><ellipse cx="49.4" cy="28.9" rx="0.7" ry="0.6" fill="#b0a880"/><ellipse cx="42.9" cy="12.3" rx="0.7" ry="0.6" fill="#e0583a"/><ellipse cx="5.5" cy="17.9" rx="0.9" ry="0.7" fill="#d03020"/><ellipse cx="18.6" cy="31.2" rx="1.3" ry="1.1" fill="#8a8a58"/><ellipse cx="48.5" cy="15.8" rx="1.3" ry="1.1" fill="#e0583a"/><ellipse cx="66.1" cy="10.3" rx="1.3" ry="1.1" fill="#d03020"/><ellipse cx="34.1" cy="16.9" rx="1.1" ry="0.9" fill="#e0583a"/><ellipse cx="16.1" cy="3.9" rx="1.2" ry="1.0" fill="#2a3418"/><ellipse cx="34.6" cy="21.0" rx="1.1" ry="0.9" fill="#4a5a28"/><ellipse cx="51.5" cy="22.2" rx="1.2" ry="1.0" fill="#4a5a28"/><ellipse cx="5.7" cy="11.6" rx="1.1" ry="0.9" fill="#e0583a"/><ellipse cx="49.7" cy="11.6" rx="1.0" ry="0.9" fill="#2a3418"/><ellipse cx="55.3" cy="24.4" rx="1.0" ry="0.8" fill="#e0583a"/><ellipse cx="32.4" cy="6.4" rx="1.0" ry="0.8" fill="#e0583a"/><ellipse cx="72.6" cy="31.4" rx="1.0" ry="0.8" fill="#4a5a28"/><ellipse cx="62.4" cy="34.8" rx="1.3" ry="1.1" fill="#2a3418"/><ellipse cx="54.1" cy="15.9" rx="0.9" ry="0.8" fill="#e0583a"/><ellipse cx="53.6" cy="24.3" rx="0.7" ry="0.6" fill="#b0a880"/><ellipse cx="59.3" cy="15.3" rx="0.8" ry="0.7" fill="#b0a880"/><ellipse cx="43.1" cy="23.1" rx="1.5" ry="1.2" fill="#e04028"/><ellipse cx="60.3" cy="21.8" rx="1.3" ry="1.1" fill="#e0583a"/><ellipse cx="7.5" cy="4.8" rx="1.2" ry="1.0" fill="#e0583a"/><ellipse cx="72.5" cy="16.4" rx="0.6" ry="0.5" fill="#b0a880"/><ellipse cx="41.5" cy="9.4" rx="1.0" ry="0.9" fill="#e04028"/><ellipse cx="20.8" cy="16.6" rx="1.2" ry="1.0" fill="#d03020"/><ellipse cx="30.2" cy="18.4" rx="0.8" ry="0.6" fill="#2a3418"/><ellipse cx="13.5" cy="7.5" rx="1.3" ry="1.1" fill="#d03020"/><ellipse cx="20.1" cy="21.6" rx="1.1" ry="0.9" fill="#b0a880"/><ellipse cx="22.1" cy="15.6" rx="1.1" ry="0.9" fill="#8a8a58"/><ellipse cx="25.6" cy="36.4" rx="1.3" ry="1.1" fill="#e0583a"/><ellipse cx="2.1" cy="37.9" rx="1.0" ry="0.9" fill="#8a8a58"/><ellipse cx="75.0" cy="11.5" rx="0.8" ry="0.7" fill="#b82818"/><ellipse cx="73.3" cy="16.0" rx="0.9" ry="0.7" fill="#e0583a"/><ellipse cx="13.9" cy="25.5" rx="0.9" ry="0.7" fill="#4a5a28"/><ellipse cx="53.7" cy="11.2" rx="0.9" ry="0.8" fill="#c8c0a0"/><ellipse cx="4.5" cy="21.7" rx="1.2" ry="1.0" fill="#b0a880"/><ellipse cx="51.7" cy="38.8" rx="0.8" ry="0.6" fill="#b82818"/><ellipse cx="26.8" cy="40.4" rx="0.6" ry="0.5" fill="#4a5a28"/><ellipse cx="7.7" cy="3.8" rx="1.2" ry="1.0" fill="#e04028"/><ellipse cx="3.3" cy="8.8" rx="1.1" ry="0.9" fill="#d03020"/><ellipse cx="22.0" cy="24.3" rx="0.7" ry="0.6" fill="#b82818"/><ellipse cx="70.2" cy="14.4" rx="1.0" ry="0.8" fill="#b82818"/><ellipse cx="45.0" cy="13.2" rx="1.1" ry="0.9" fill="#d03020"/><ellipse cx="38.9" cy="14.9" rx="1.2" ry="1.0" fill="#2a3418"/><ellipse cx="33.8" cy="30.3" rx="1.0" ry="0.9" fill="#e0583a"/><ellipse cx="20.2" cy="19.9" rx="0.8" ry="0.7" fill="#c8c0a0"/><ellipse cx="22.5" cy="17.9" rx="1.0" ry="0.9" fill="#b0a880"/><ellipse cx="21.7" cy="10.3" rx="1.1" ry="0.9" fill="#2a3418"/><ellipse cx="52.6" cy="31.3" rx="1.0" ry="0.8" fill="#4a5a28"/><ellipse cx="17.2" cy="25.0" rx="0.7" ry="0.5" fill="#c8c0a0"/><ellipse cx="18.8" cy="39.9" rx="1.0" ry="0.8" fill="#2a3418"/><ellipse cx="3.0" cy="14.0" rx="1.2" ry="1.0" fill="#d03020"/><ellipse cx="8.6" cy="35.9" rx="0.9" ry="0.8" fill="#b0a880"/><ellipse cx="75.2" cy="37.0" rx="1.0" ry="0.9" fill="#2a3418"/><ellipse cx="44.3" cy="9.6" rx="1.3" ry="1.1" fill="#e04028"/><ellipse cx="16.5" cy="20.0" rx="1.6" ry="1.3" fill="#b82818"/><ellipse cx="70.0" cy="26.4" rx="1.2" ry="1.0" fill="#e04028"/><ellipse cx="18.5" cy="14.8" rx="1.5" ry="1.3" fill="#d03020"/><ellipse cx="14.0" cy="10.2" rx="1.1" ry="1.0" fill="#c8c0a0"/><ellipse cx="4.3" cy="4.3" rx="1.2" ry="1.0" fill="#c8c0a0"/><ellipse cx="48.2" cy="31.1" rx="1.2" ry="1.0" fill="#8a8a58"/><ellipse cx="68.5" cy="31.2" rx="1.2" ry="1.0" fill="#d03020"/><ellipse cx="71.1" cy="4.7" rx="1.5" ry="1.2" fill="#e0583a"/><ellipse cx="49.9" cy="17.7" rx="1.0" ry="0.8" fill="#4a5a28"/><ellipse cx="73.6" cy="12.1" rx="1.3" ry="1.1" fill="#e04028"/><ellipse cx="5.0" cy="10.1" rx="1.5" ry="1.3" fill="#b82818"/><ellipse cx="50.6" cy="7.6" rx="1.5" ry="1.3" fill="#e0583a"/><ellipse cx="24.3" cy="3.3" rx="0.8" ry="0.7" fill="#e0583a"/><ellipse cx="19.3" cy="7.4" rx="1.2" ry="1.0" fill="#b82818"/><ellipse cx="29.6" cy="38.8" rx="0.7" ry="0.6" fill="#2a3418"/><ellipse cx="38.0" cy="22.0" rx="1.1" ry="0.9" fill="#2a3418"/><ellipse cx="34.1" cy="21.4" rx="0.8" ry="0.7" fill="#d03020"/><ellipse cx="29.1" cy="11.6" rx="1.3" ry="1.1" fill="#e0583a"/><ellipse cx="57.8" cy="30.5" rx="0.8" ry="0.7" fill="#d03020"/><ellipse cx="12.3" cy="4.4" rx="0.8" ry="0.7" fill="#e0583a"/><ellipse cx="54.2" cy="8.3" rx="1.2" ry="1.0" fill="#d03020"/><ellipse cx="17.5" cy="9.8" rx="0.9" ry="0.7" fill="#e0583a"/><ellipse cx="48.7" cy="9.4" rx="1.1" ry="0.9" fill="#e0583a"/><ellipse cx="28.7" cy="31.4" rx="1.1" ry="0.9" fill="#d03020"/><ellipse cx="3.0" cy="26.4" rx="1.5" ry="1.3" fill="#b82818"/><ellipse cx="32.1" cy="33.0" rx="1.0" ry="0.8" fill="#8a8a58"/><ellipse cx="71.4" cy="8.0" rx="1.5" ry="1.2" fill="#b82818"/><ellipse cx="8.2" cy="27.8" rx="1.0" ry="0.8" fill="#b82818"/><ellipse cx="57.0" cy="32.8" rx="1.1" ry="0.9" fill="#c8c0a0"/><ellipse cx="65.8" cy="16.0" rx="1.3" ry="1.1" fill="#d03020"/><ellipse cx="65.8" cy="16.8" rx="1.2" ry="1.0" fill="#2a3418"/><ellipse cx="43.9" cy="36.8" rx="1.1" ry="0.9" fill="#4a5a28"/><ellipse cx="73.0" cy="8.5" rx="0.8" ry="0.7" fill="#d03020"/><ellipse cx="59.3" cy="5.4" rx="0.9" ry="0.7" fill="#b82818"/><ellipse cx="72.6" cy="17.8" rx="0.9" ry="0.8" fill="#d03020"/><ellipse cx="27.8" cy="29.4" rx="0.9" ry="0.7" fill="#b82818"/><ellipse cx="42.3" cy="15.9" rx="1.3" ry="1.1" fill="#d03020"/><ellipse cx="47.7" cy="27.4" rx="1.1" ry="0.9" fill="#2a3418"/><ellipse cx="5.0" cy="30.2" rx="0.9" ry="0.7" fill="#e0583a"/><ellipse cx="35.2" cy="21.0" rx="0.8" ry="0.7" fill="#8a8a58"/><ellipse cx="30.2" cy="14.9" rx="1.0" ry="0.8" fill="#4a5a28"/><ellipse cx="47.0" cy="37.8" rx="0.7" ry="0.6" fill="#c8c0a0"/><ellipse cx="45.5" cy="29.0" rx="1.2" ry="1.0" fill="#e04028"/><ellipse cx="14.8" cy="28.6" rx="1.0" ry="0.9" fill="#d03020"/><ellipse cx="70.9" cy="8.3" rx="1.3" ry="1.1" fill="#b82818"/><ellipse cx="41.6" cy="35.5" rx="0.6" ry="0.5" fill="#b0a880"/><ellipse cx="49.3" cy="21.1" rx="1.4" ry="1.2" fill="#e04028"/><ellipse cx="12.2" cy="16.2" rx="1.5" ry="1.2" fill="#b82818"/><ellipse cx="28.3" cy="27.7" rx="1.2" ry="1.0" fill="#e0583a"/><ellipse cx="44.2" cy="35.8" rx="0.8" ry="0.7" fill="#8a8a58"/><ellipse cx="58.9" cy="27.0" rx="0.9" ry="0.8" fill="#b0a880"/><ellipse cx="64.8" cy="21.3" rx="1.0" ry="0.8" fill="#c8c0a0"/><ellipse cx="4.5" cy="8.0" rx="1.6" ry="1.3" fill="#d03020"/><ellipse cx="60.2" cy="14.0" rx="1.4" ry="1.2" fill="#e0583a"/><ellipse cx="30.0" cy="38.0" rx="1.1" ry="0.9" fill="#4a5a28"/><ellipse cx="65.0" cy="6.1" rx="1.2" ry="1.0" fill="#e0583a"/><ellipse cx="73.1" cy="39.2" rx="0.9" ry="0.8" fill="#2a3418"/><ellipse cx="45.8" cy="32.0" rx="0.8" ry="0.7" fill="#8a8a58"/><ellipse cx="29.2" cy="37.6" rx="1.2" ry="1.0" fill="#b0a880"/><ellipse cx="36.7" cy="8.0" rx="1.2" ry="1.0" fill="#d03020"/><ellipse cx="11.8" cy="15.6" rx="1.0" ry="0.8" fill="#d03020"/><ellipse cx="3.7" cy="29.8" rx="0.7" ry="0.6" fill="#b0a880"/><ellipse cx="2.8" cy="27.8" rx="1.2" ry="1.0" fill="#c8c0a0"/><ellipse cx="69.3" cy="9.8" rx="1.5" ry="1.2" fill="#b82818"/><ellipse cx="15.8" cy="27.4" rx="1.5" ry="1.3" fill="#e04028"/><ellipse cx="47.0" cy="15.2" rx="1.2" ry="1.0" fill="#b0a880"/><ellipse cx="18.1" cy="35.1" rx="1.2" ry="1.0" fill="#2a3418"/><ellipse cx="18.9" cy="24.0" rx="1.2" ry="1.0" fill="#e04028"/><ellipse cx="20.0" cy="12.2" rx="0.9" ry="0.8" fill="#c8c0a0"/><ellipse cx="9.0" cy="6.6" rx="1.1" ry="0.9" fill="#e0583a"/><ellipse cx="49.0" cy="16.9" rx="0.9" ry="0.8" fill="#e04028"/><ellipse cx="46.1" cy="12.4" rx="1.1" ry="0.9" fill="#e0583a"/><ellipse cx="49.3" cy="17.2" rx="0.8" ry="0.7" fill="#b82818"/><ellipse cx="19.0" cy="20.7" rx="1.2" ry="1.0" fill="#8a8a58"/><ellipse cx="51.4" cy="35.1" rx="0.8" ry="0.7" fill="#b0a880"/><ellipse cx="24.0" cy="6.8" rx="1.0" ry="0.9" fill="#8a8a58"/><ellipse cx="48.4" cy="29.6" rx="1.2" ry="1.0" fill="#2a3418"/><ellipse cx="6.4" cy="12.7" rx="0.7" ry="0.6" fill="#c8c0a0"/><ellipse cx="5.1" cy="29.6" rx="1.3" ry="1.1" fill="#8a8a58"/><ellipse cx="61.3" cy="14.6" rx="1.3" ry="1.0" fill="#e04028"/><ellipse cx="61.0" cy="15.4" rx="1.1" ry="0.9" fill="#d03020"/><ellipse cx="6.3" cy="31.5" rx="0.9" ry="0.8" fill="#c8c0a0"/><ellipse cx="45.5" cy="15.1" rx="1.1" ry="0.9" fill="#e0583a"/><ellipse cx="19.6" cy="8.1" rx="0.8" ry="0.7" fill="#d03020"/><ellipse cx="61.4" cy="6.4" rx="1.1" ry="1.0" fill="#d03020"/><ellipse cx="13.6" cy="26.4" rx="1.2" ry="1.0" fill="#b82818"/><ellipse cx="68.2" cy="39.3" rx="0.9" ry="0.8" fill="#b0a880"/><ellipse cx="59.1" cy="28.4" rx="1.4" ry="1.2" fill="#e0583a"/><ellipse cx="56.6" cy="37.0" rx="0.7" ry="0.6" fill="#4a5a28"/><ellipse cx="11.0" cy="4.8" rx="0.8" ry="0.7" fill="#b82818"/><ellipse cx="10.7" cy="9.4" rx="0.8" ry="0.7" fill="#b82818"/><ellipse cx="25.4" cy="18.9" rx="0.8" ry="0.7" fill="#e0583a"/><ellipse cx="67.2" cy="5.6" rx="1.1" ry="0.9" fill="#e04028"/><ellipse cx="39.6" cy="10.7" rx="0.8" ry="0.6" fill="#b82818"/><ellipse cx="35.4" cy="23.8" rx="1.0" ry="0.8" fill="#2a3418"/><ellipse cx="44.2" cy="3.1" rx="1.1" ry="0.9" fill="#4a5a28"/><ellipse cx="36.2" cy="28.1" rx="1.3" ry="1.1" fill="#4a5a28"/><ellipse cx="15.9" cy="7.6" rx="1.5" ry="1.2" fill="#e04028"/><ellipse cx="6.9" cy="3.2" rx="0.7" ry="0.6" fill="#8a8a58"/><ellipse cx="21.6" cy="35.2" rx="0.9" ry="0.8" fill="#8a8a58"/><ellipse cx="34.7" cy="20.8" rx="1.1" ry="1.0" fill="#e0583a"/><ellipse cx="72.3" cy="36.3" rx="0.7" ry="0.6" fill="#c8c0a0"/><ellipse cx="40.0" cy="24.4" rx="0.7" ry="0.5" fill="#2a3418"/><ellipse cx="32.4" cy="38.8" rx="0.7" ry="0.5" fill="#b0a880"/><ellipse cx="17.0" cy="7.3" rx="1.0" ry="0.9" fill="#b0a880"/><ellipse cx="63.8" cy="17.5" rx="1.0" ry="0.8" fill="#d03020"/><ellipse cx="33.7" cy="32.1" rx="0.9" ry="0.7" fill="#d03020"/><ellipse cx="28.8" cy="20.9" rx="0.8" ry="0.6" fill="#b82818"/><ellipse cx="37.2" cy="6.4" rx="1.5" ry="1.3" fill="#b82818"/><ellipse cx="4.9" cy="14.3" rx="0.9" ry="0.7" fill="#d03020"/><ellipse cx="75.4" cy="10.6" rx="0.9" ry="0.8" fill="#b0a880"/><ellipse cx="68.7" cy="5.9" rx="0.9" ry="0.7" fill="#b82818"/><ellipse cx="68.2" cy="35.9" rx="0.8" ry="0.7" fill="#b0a880"/><ellipse cx="69.4" cy="33.6" rx="1.0" ry="0.9" fill="#b0a880"/><ellipse cx="62.3" cy="5.7" rx="1.1" ry="0.9" fill="#b82818"/><ellipse cx="38.0" cy="32.4" rx="1.2" ry="1.0" fill="#b82818"/><ellipse cx="30.4" cy="24.5" rx="1.1" ry="0.9" fill="#d03020"/><ellipse cx="3.4" cy="25.1" rx="0.8" ry="0.7" fill="#b0a880"/><ellipse cx="3.9" cy="14.3" rx="0.9" ry="0.8" fill="#d03020"/><ellipse cx="61.1" cy="25.6" rx="0.9" ry="0.7" fill="#b0a880"/><ellipse cx="33.7" cy="23.0" rx="1.1" ry="0.9" fill="#d03020"/><ellipse cx="63.4" cy="27.8" rx="1.4" ry="1.1" fill="#e0583a"/><ellipse cx="38.2" cy="33.1" rx="1.1" ry="0.9" fill="#c8c0a0"/><ellipse cx="35.1" cy="23.3" rx="1.0" ry="0.8" fill="#2a3418"/><ellipse cx="75.1" cy="38.0" rx="1.0" ry="0.8" fill="#2a3418"/><ellipse cx="42.5" cy="36.8" rx="0.9" ry="0.7" fill="#c8c0a0"/><ellipse cx="72.1" cy="9.3" rx="1.5" ry="1.2" fill="#e04028"/><ellipse cx="57.8" cy="7.3" rx="0.7" ry="0.6" fill="#e0583a"/><ellipse cx="17.1" cy="30.9" rx="1.3" ry="1.1" fill="#8a8a58"/><ellipse cx="31.1" cy="20.5" rx="1.3" ry="1.1" fill="#2a3418"/><ellipse cx="40.1" cy="4.3" rx="0.9" ry="0.7" fill="#b82818"/><ellipse cx="44.1" cy="17.5" rx="0.8" ry="0.7" fill="#e0583a"/><ellipse cx="42.0" cy="22.0" rx="1.1" ry="0.9" fill="#e0583a"/><ellipse cx="35.9" cy="19.5" rx="1.3" ry="1.1" fill="#b0a880"/><ellipse cx="69.0" cy="34.5" rx="0.9" ry="0.7" fill="#e04028"/><ellipse cx="69.4" cy="21.3" rx="0.8" ry="0.7" fill="#8a8a58"/><ellipse cx="1.5" cy="6.4" rx="1.3" ry="1.1" fill="#d03020"/><ellipse cx="7.6" cy="7.5" rx="1.2" ry="1.0" fill="#b82818"/><ellipse cx="33.8" cy="13.6" rx="0.9" ry="0.8" fill="#2a3418"/><ellipse cx="56.8" cy="32.2" rx="1.3" ry="1.1" fill="#8a8a58"/><ellipse cx="45.8" cy="29.6" rx="0.7" ry="0.6" fill="#c8c0a0"/><ellipse cx="73.8" cy="11.0" rx="1.5" ry="1.3" fill="#d03020"/><ellipse cx="70.3" cy="35.0" rx="1.0" ry="0.8" fill="#8a8a58"/><ellipse cx="5.6" cy="30.8" rx="0.6" ry="0.5" fill="#b0a880"/><ellipse cx="4.7" cy="30.8" rx="1.3" ry="1.1" fill="#2a3418"/><ellipse cx="34.0" cy="28.7" rx="0.9" ry="0.7" fill="#4a5a28"/><ellipse cx="48.6" cy="5.6" rx="0.9" ry="0.8" fill="#4a5a28"/><ellipse cx="15.6" cy="20.1" rx="1.1" ry="0.9" fill="#2a3418"/><ellipse cx="11.9" cy="40.5" rx="0.7" ry="0.6" fill="#c8c0a0"/><ellipse cx="73.6" cy="34.2" rx="1.1" ry="0.9" fill="#c8c0a0"/><ellipse cx="1.6" cy="36.0" rx="1.0" ry="0.9" fill="#8a8a58"/><ellipse cx="26.9" cy="15.9" rx="1.4" ry="1.2" fill="#d03020"/><ellipse cx="41.8" cy="5.0" rx="1.4" ry="1.2" fill="#e0583a"/><ellipse cx="72.9" cy="33.9" rx="1.2" ry="1.0" fill="#4a5a28"/><ellipse cx="45.7" cy="25.9" rx="1.0" ry="0.9" fill="#b82818"/><ellipse cx="0.4" cy="34.6" rx="1.0" ry="0.9" fill="#4a5a28"/><ellipse cx="64.8" cy="32.3" rx="1.2" ry="1.0" fill="#4a5a28"/><ellipse cx="48.2" cy="29.9" rx="0.6" ry="0.5" fill="#8a8a58"/><ellipse cx="43.3" cy="15.0" rx="1.2" ry="1.0" fill="#d03020"/><ellipse cx="56.6" cy="31.3" rx="1.0" ry="0.8" fill="#e0583a"/><ellipse cx="3.5" cy="26.6" rx="1.0" ry="0.8" fill="#2a3418"/><ellipse cx="17.2" cy="3.5" rx="1.0" ry="0.8" fill="#b82818"/><ellipse cx="65.0" cy="26.2" rx="0.6" ry="0.5" fill="#8a8a58"/><ellipse cx="26.6" cy="13.8" rx="0.7" ry="0.6" fill="#2a3418"/><ellipse cx="23.6" cy="17.3" rx="1.3" ry="1.1" fill="#e04028"/><ellipse cx="63.8" cy="40.6" rx="1.2" ry="1.0" fill="#c8c0a0"/><ellipse cx="8.2" cy="19.7" rx="1.5" ry="1.3" fill="#e0583a"/><ellipse cx="38.8" cy="13.2" rx="1.2" ry="1.0" fill="#4a5a28"/><ellipse cx="55.8" cy="3.9" rx="1.0" ry="0.8" fill="#e04028"/><ellipse cx="46.1" cy="15.2" rx="1.3" ry="1.1" fill="#2a3418"/><ellipse cx="67.6" cy="38.0" rx="0.8" ry="0.7" fill="#b82818"/><ellipse cx="44.2" cy="5.9" rx="0.9" ry="0.8" fill="#e04028"/><ellipse cx="54.9" cy="25.2" rx="0.6" ry="0.5" fill="#c8c0a0"/><ellipse cx="67.4" cy="34.1" rx="1.0" ry="0.8" fill="#4a5a28"/><ellipse cx="34.1" cy="13.2" rx="1.5" ry="1.2" fill="#d03020"/><ellipse cx="51.5" cy="7.4" rx="1.0" ry="0.8" fill="#e0583a"/><ellipse cx="58.6" cy="25.0" rx="1.4" ry="1.2" fill="#b82818"/><ellipse cx="52.3" cy="14.1" rx="1.0" ry="0.9" fill="#e0583a"/><ellipse cx="14.5" cy="3.1" rx="1.0" ry="0.8" fill="#2a3418"/><ellipse cx="35.9" cy="37.4" rx="1.0" ry="0.9" fill="#8a8a58"/><ellipse cx="72.6" cy="14.2" rx="0.7" ry="0.6" fill="#e04028"/><ellipse cx="64.4" cy="9.1" rx="1.0" ry="0.9" fill="#e0583a"/><ellipse cx="72.3" cy="14.9" rx="0.9" ry="0.8" fill="#2a3418"/><ellipse cx="35.2" cy="16.5" rx="0.6" ry="0.5" fill="#2a3418"/><ellipse cx="53.4" cy="11.8" rx="0.8" ry="0.6" fill="#c8c0a0"/><ellipse cx="11.9" cy="39.8" rx="1.0" ry="0.8" fill="#c8c0a0"/><ellipse cx="3.9" cy="17.0" rx="0.7" ry="0.6" fill="#b0a880"/><ellipse cx="51.9" cy="3.1" rx="1.2" ry="1.0" fill="#b0a880"/><ellipse cx="3.5" cy="39.0" rx="0.8" ry="0.7" fill="#e04028"/><ellipse cx="40.6" cy="5.1" rx="1.1" ry="0.9" fill="#b82818"/><ellipse cx="9.5" cy="24.9" rx="0.6" ry="0.5" fill="#8a8a58"/><ellipse cx="42.1" cy="23.4" rx="1.1" ry="0.9" fill="#c8c0a0"/><ellipse cx="17.0" cy="10.6" rx="0.9" ry="0.8" fill="#b82818"/><ellipse cx="75.1" cy="22.4" rx="1.2" ry="1.0" fill="#d03020"/><ellipse cx="36" cy="26" rx="3.12" ry="2.6" fill="#e02818"/><ellipse cx="47" cy="24" rx="2.16" ry="1.8" fill="#e02818"/><ellipse cx="42" cy="35" rx="2.64" ry="2.2" fill="#e02818"/><ellipse cx="62" cy="28" rx="2.16" ry="1.8" fill="#e02818"/><ellipse cx="17" cy="34" rx="2.16" ry="1.8" fill="#e02818"/><ellipse cx="66" cy="36" rx="2.64" ry="2.2" fill="#e02818"/><ellipse cx="26" cy="20" rx="1.92" ry="1.6" fill="#e02818"/><ellipse cx="55" cy="33" rx="1.92" ry="1.6" fill="#e02818"/></g><rect y="0" width="76" height="2.6" fill="#050505"/><rect y="41.6" width="76" height="2.4" fill="#050505"/></g></svg>
<svg style="left:258.5px;top:228px" width="11" height="7" viewBox="0 0 11 7"><rect x="0.6" y="0.6" width="9.8" height="5.8" rx="0.6" fill="#202020" fill-opacity="0.6" stroke="#f0f0ec" stroke-width="1.1"/><rect x="2" y="2" width="4.4" height="3" fill="#0a0a0a"/><path d="M7.2 2.2V4.8M8.4 2V5" stroke="#f0f0ec" stroke-width="0.9"/></svg>
<div class="a" style="left:281px;top:227.5px;width:75px;height:44px;background:#050505;border-radius:2px"></div><svg style="left:281px;top:230px" width="75" height="39.5"><g filter="url(#desat)"><use href="#cos" width="75" height="39.5"/></g></svg><svg style="left:344px;top:228px" width="11" height="7" viewBox="0 0 11 7"><rect x="0.6" y="0.6" width="9.8" height="5.8" rx="0.8" fill="#181818" fill-opacity="0.5" stroke="#f0f0f0" stroke-width="1.1"/><rect x="7.4" y="2" width="1.6" height="3" fill="#f0f0f0"/></svg><svg style="left:345px;top:262px" width="12" height="11" viewBox="0 0 12 11"><rect width="12" height="11" rx="1" fill="#2f86e0"/><path d="M2.8 5.6L5 7.8L9.3 3.3" stroke="#fff" stroke-width="1.3" fill="none"/></svg>
<!-- preview controls -->
<div class="a" style="left:469px;top:275.5px;width:390px;height:1.5px;background:#5b5c63"></div>
<div class="a" style="left:469px;top:273px;width:7px;height:7px;border-radius:4px;background:#3a95f0"></div>
<svg style="left:477px;top:290px" width="12" height="12" viewBox="0 0 12 12" class="ic"><path d="M0.5 0.5L11 6L0.5 11.5Z" stroke="#c0c0c6"/></svg>
<svg style="left:505px;top:292px" width="11" height="9" viewBox="0 0 11 9"><path d="M9.5 0.5L1.5 4.5L9.5 8.5Z M10.5 0.5V8.5" fill="none" stroke="#46474e" stroke-width="1"/></svg>
<svg style="left:535px;top:292px" width="11" height="9" viewBox="0 0 11 9"><path d="M2.5 0.5L10.5 4.5L2.5 8.5Z M0.5 0.5V8.5" fill="none" stroke="#b8b8be" stroke-width="1"/></svg>
<div class="a" style="left:565px;top:292px;width:9px;height:9px;border:1px solid #c0c0c6"></div>
<svg style="left:592px;top:291px" width="12" height="10" viewBox="0 0 12 10" class="ic"><path d="M0.5 3H3L6.5 0.5V9.5L3 7H0.5Z M8 3Q9 5 8 7 M9.8 1.5Q11.8 5 9.8 8.5"/></svg>
<div class="a" style="left:611px;top:295.5px;width:58px;height:1px;background:#8a8b90"></div>
<div class="a" style="left:665.5px;top:293px;width:6px;height:6px;border-radius:3px;background:#c4c4c8"></div>
<div class="t" style="left:674.5px;top:291px;font-size:9.6px;color:#e0e0e4">100</div>
<div class="t" style="left:732px;top:290.5px;font-size:10.5px;color:#e8e8ec">00:00:00.00/00:00:16.17</div>
<svg style="left:851px;top:292px" width="9" height="8" viewBox="0 0 9 8" class="ic"><path d="M0.5 2.5V0.5H2.5M6.5 0.5H8.5V2.5M8.5 5.5V7.5H6.5M2.5 7.5H0.5V5.5"/></svg>

<!-- timeline toolbar -->
<svg style="left:17px;top:320px" width="12" height="10" viewBox="0 0 12 10"><path d="M1 3.2L5.3 0.6V2.2Q10.8 2.4 10.6 8.8Q9 5.6 5.3 5.2V6.8Z" fill="none" stroke="#d0d0d4" stroke-width="1" stroke-linejoin="round"/></svg>
<svg style="left:54px;top:320px" width="12" height="10" viewBox="0 0 12 10"><path d="M11 3.2L6.7 0.6V2.2Q1.2 2.4 1.4 8.8Q3 5.6 6.7 5.2V6.8Z" fill="none" stroke="#4a4b52" stroke-width="1" stroke-linejoin="round"/></svg>
<svg style="left:93px;top:320px" width="10" height="10" viewBox="0 0 10 10" class="ic"><path d="M0.5 2H9.5M3.5 2V0.5H6.5V2M1.5 2V9.5H8.5V2M3.5 4.5V7.5M5 4.5V7.5M6.5 4.5V7.5"/></svg>
<svg style="left:132px;top:320px" width="9" height="10" viewBox="0 0 9 10" class="ic"><path d="M1 0.5L6.5 7M8 0.5L2.5 7"/><circle cx="2" cy="8" r="1.5"/><circle cx="7" cy="8" r="1.5"/></svg>
<svg style="left:164px;top:319px" width="20" height="12" viewBox="0 0 20 12" class="ic"><path d="M4 9.5L1.3 6Q10 -2.5 18.7 6L16 9.5M10 4.2V8.3"/><circle cx="10" cy="9.5" r="1.2"/></svg>
<svg style="left:699px;top:321px" width="11" height="8" viewBox="0 0 11 8"><rect x="0.5" y="0.5" width="10" height="7" rx="1.2" fill="none" stroke="#c8c8cc" stroke-width="1"/><path d="M3.5 4H7.5" stroke="#e0e0e4" stroke-width="0.8"/><path d="M2.2 4L4 2.6V5.4Z M8.8 4L7 2.6V5.4Z" fill="#e0e0e4"/></svg>
<div class="t" style="left:730px;top:319.5px;font-size:10px;color:#e0e0e4">1</div>
<div class="a" style="left:741px;top:324.5px;width:58px;height:1px;background:#8a8b90"></div>
<div class="a" style="left:799px;top:324.5px;width:34px;height:1px;background:#131418"></div>
<div class="a" style="left:795.5px;top:321.5px;width:6px;height:6px;border-radius:3px;background:#c4c4c8"></div>
<div class="t" style="left:840.5px;top:319.5px;font-size:10px;color:#e0e0e4">10</div>

<!-- ruler -->
<div class="t" style="left:36px;top:343.5px;font-size:7px;color:#6a6b72">0s</div>
<div class="t" style="left:857px;top:343.5px;font-size:7px;color:#4a4b52">16</div>
<div class="a" style="left:39.5px;top:357px;width:1px;height:132px;background:#2f7fd0"></div>
<div class="a" style="left:38px;top:352.5px;width:4px;height:4.5px;background:#3a95f0"></div>

<!-- track icons -->
<div class="t" style="left:13px;top:364.2px;font-family:'Liberation Serif';font-size:12.5px;font-weight:bold;color:#85868d;transform:scaleX(1.25);transform-origin:0 0">T</div>
<svg style="left:11.5px;top:405px" width="12" height="11" viewBox="0 0 12 11"><rect x="0" y="0" width="12" height="11" fill="#76777e"/><rect x="3" y="1" width="6" height="4" fill="#24252b"/><rect x="3" y="6" width="6" height="4" fill="#24252b"/><rect x="0.8" y="1.5" width="1.2" height="1.2" fill="#24252b"/><rect x="0.8" y="4.9" width="1.2" height="1.2" fill="#24252b"/><rect x="0.8" y="8.3" width="1.2" height="1.2" fill="#24252b"/><rect x="10" y="1.5" width="1.2" height="1.2" fill="#24252b"/><rect x="10" y="4.9" width="1.2" height="1.2" fill="#24252b"/><rect x="10" y="8.3" width="1.2" height="1.2" fill="#24252b"/></svg>
<svg style="left:11.5px;top:457px" width="11" height="11" viewBox="0 0 11 11"><path d="M3.5 9V1.2L10 0.3V8" fill="none" stroke="#7c7d84" stroke-width="1"/><ellipse cx="2" cy="9" rx="1.8" ry="1.5" fill="#7c7d84"/><ellipse cx="8.5" cy="8.2" rx="1.8" ry="1.5" fill="#7c7d84"/></svg>

<svg style="left:40.3px;top:385.5px" width="824" height="49"><defs><filter id="desat" color-interpolation-filters="sRGB"><feColorMatrix type="saturate" values="0.65"/></filter></defs><g filter="url(#desat)"><use href="#cos" x="0.00" y="0" width="54.28" height="49"/><use href="#cos" x="53.98" y="0" width="54.28" height="49"/><use href="#cos" x="107.96" y="0" width="54.28" height="49"/><use href="#cos" x="161.94" y="0" width="54.28" height="49"/><use href="#cos" x="215.92" y="0" width="54.28" height="49"/><use href="#cos" x="269.90" y="0" width="54.28" height="49"/><use href="#cos" x="323.88" y="0" width="54.28" height="49"/><use href="#cos" x="377.86" y="0" width="54.28" height="49"/><use href="#cos" x="431.84" y="0" width="54.28" height="49"/><use href="#cos" x="485.82" y="0" width="54.28" height="49"/><use href="#cos" x="539.80" y="0" width="54.28" height="49"/><use href="#cos" x="593.78" y="0" width="54.28" height="49"/><use href="#cos" x="647.76" y="0" width="54.28" height="49"/><use href="#cos" x="701.74" y="0" width="54.28" height="49"/><use href="#cos" x="755.72" y="0" width="54.28" height="49"/><use href="#cos" x="809.70" y="0" width="54.28" height="49"/></g></svg>
<!-- clip border -->
<div class="a" style="left:40px;top:385px;width:824px;height:50px;border:1px solid #5aa8e0;border-right:none"></div>

<!-- watermark -->
<div class="t" style="left:794px;top:474px;font-size:11px;color:#08080a">wtvid.com</div>
</body></html>
